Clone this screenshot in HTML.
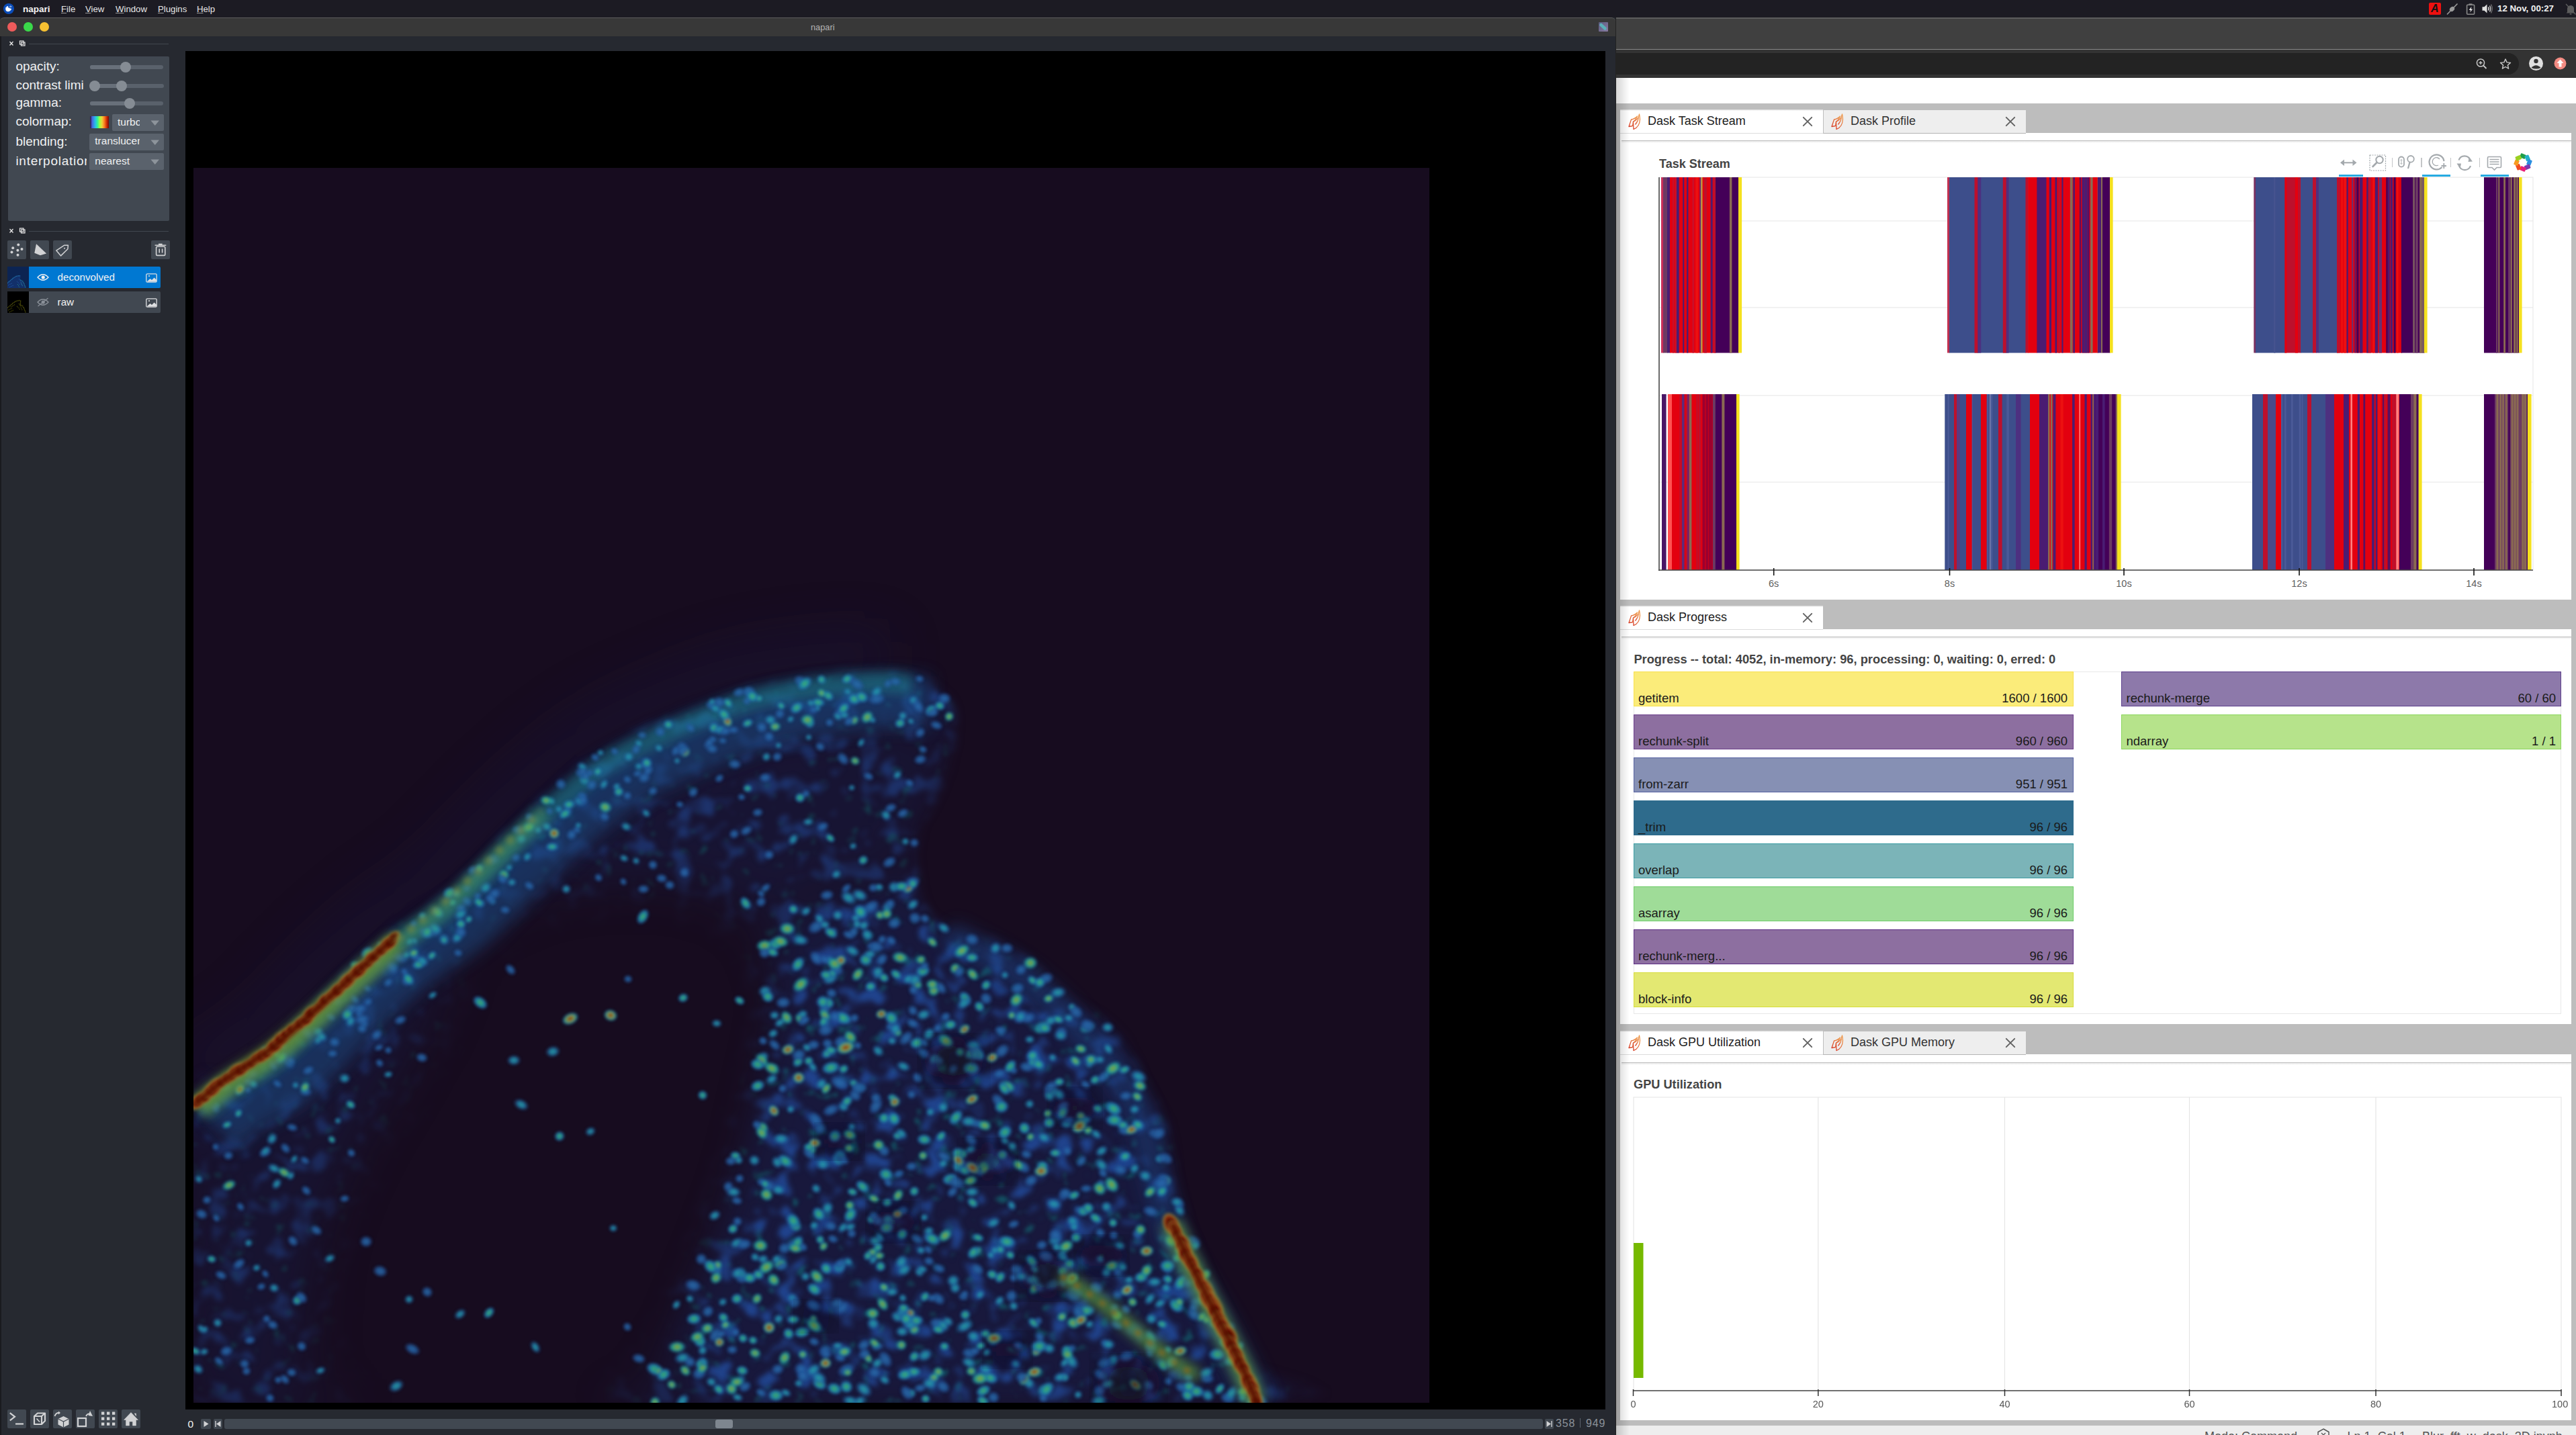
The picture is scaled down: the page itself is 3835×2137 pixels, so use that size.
<!DOCTYPE html>
<html><head><meta charset="utf-8">
<style>
*{box-sizing:border-box;margin:0;padding:0}
html,body{width:3835px;height:2137px;overflow:hidden;background:#1b1a24;font-family:"Liberation Sans",sans-serif}
.a{position:absolute}
.t{position:absolute;white-space:pre;line-height:1}
</style></head><body>
<div class="a" style="left:0px;top:0px;width:3835px;height:26px;background:#1c1b23;"></div>
<svg class="a" style="left:4px;top:4px" width="18" height="18" viewBox="0 0 18 18">
<circle cx="9" cy="9" r="8" fill="#0b4cb8"/>
<path d="M4.3 8.2 C4.2 6.8 5 6.3 5.6 6.9 L5.9 5.6 C6.3 4.9 7 5.2 7 5.9 L7.3 5.2 C7.8 4.6 8.4 5 8.3 5.8 L8.2 7.3 C9.3 7.6 10.6 8.4 12.3 8.8 C13.3 9.1 13.2 10 12.6 10.5 L11.5 11.8 C10.4 13.2 8.3 13.4 6.6 12.9 C5 12.4 4.1 11.2 4.3 8.2Z" fill="#fff"/>
<path d="M10.4 6.8 L11.5 4.6 M11.9 7.2 L12.9 5" stroke="#fff" stroke-width="0.8"/>
</svg>
<div class="t" style="left:34px;top:6.57px;font-size:13.5px;color:#f4f4f4;font-weight:700;">napari</div>
<div class="t" style="left:91px;top:6.57px;font-size:13.2px;color:#e6e6e6;font-weight:400;"><span style="text-decoration:underline;text-decoration-color:#9a9a9a;text-underline-offset:1px">F</span>ile</div>
<div class="t" style="left:127px;top:6.57px;font-size:13.2px;color:#e6e6e6;font-weight:400;"><span style="text-decoration:underline;text-decoration-color:#9a9a9a;text-underline-offset:1px">V</span>iew</div>
<div class="t" style="left:172px;top:6.57px;font-size:13.2px;color:#e6e6e6;font-weight:400;"><span style="text-decoration:underline;text-decoration-color:#9a9a9a;text-underline-offset:1px">W</span>indow</div>
<div class="t" style="left:235px;top:6.57px;font-size:13.2px;color:#e6e6e6;font-weight:400;"><span style="text-decoration:underline;text-decoration-color:#9a9a9a;text-underline-offset:1px">P</span>lugins</div>
<div class="t" style="left:293px;top:6.57px;font-size:13.2px;color:#e6e6e6;font-weight:400;"><span style="text-decoration:underline;text-decoration-color:#9a9a9a;text-underline-offset:1px">H</span>elp</div>
<div class="a" style="left:3616px;top:4px;width:18px;height:18px;background:#ee1010;border-radius:2px"></div>
<div class="t" style="left:3619px;top:5px;font-size:16px;font-weight:700;font-style:italic;color:#111">A</div>
<svg class="a" style="left:3641px;top:4px" width="20" height="19" viewBox="0 0 20 19">
<line x1="2" y1="17.5" x2="17.5" y2="1.5" stroke="#9a9a9a" stroke-width="1.6"/>
<ellipse cx="9.5" cy="9.5" rx="4" ry="3.2" transform="rotate(-45 9.5 9.5)" fill="#9a9a9a"/>
</svg>
<svg class="a" style="left:3671px;top:5px" width="15" height="17" viewBox="0 0 15 17">
<rect x="1.6" y="2.2" width="11" height="14" rx="1" fill="none" stroke="#8a8a8a" stroke-width="1.6"/>
<rect x="4.5" y="0.4" width="5" height="2.2" fill="#8a8a8a"/>
<path d="M8.6 4.8 L4.6 10 L7.2 10 L6.2 13.6 L10.2 8.4 L7.6 8.4Z" fill="#eee"/>
</svg>
<svg class="a" style="left:3695px;top:5px" width="17" height="16" viewBox="0 0 17 16">
<path d="M0.5 5.2 H3.5 L7.5 1.5 V14.5 L3.5 10.8 H0.5Z" fill="#e0e0e0"/>
<path d="M9.5 5.5 Q11 8 9.5 10.5" stroke="#e0e0e0" stroke-width="1.5" fill="none"/>
<path d="M11.5 3.5 Q14 8 11.5 12.5" stroke="#c8c8c8" stroke-width="1.4" fill="none"/>
<path d="M13.5 1.5 Q17 8 13.5 14.5" stroke="#777" stroke-width="1.3" fill="none"/>
</svg>
<div class="t" style="left:3718px;top:6.04px;font-size:13.3px;color:#f2f2f2;font-weight:700;">12 Nov, 00:27</div>
<svg class="a" style="left:3819px;top:5px" width="16" height="18" viewBox="0 0 16 18">
<path d="M3 13 L3 8 Q3 3.5 8 3 Q13 3.5 13 8 L13 13 L14.5 14.5 H1.5Z" fill="#5c5c5c"/>
<rect x="6.5" y="15" width="3" height="1.8" rx="0.9" fill="#5c5c5c"/>
<line x1="1" y1="1" x2="15.5" y2="16.5" stroke="#5c5c5c" stroke-width="1.4"/>
</svg>
<div class="a" style="left:0px;top:26px;width:2405px;height:2111px;background:#262930;"></div>
<div class="a" style="left:0px;top:54px;width:2px;height:2083px;background:#1a1b1f;"></div>
<div class="a" style="left:0px;top:26px;width:2405px;height:28px;background:#383838;border-top:1px solid #5b5b5b;border-top-left-radius:6px;border-top-right-radius:6px"></div>
<div class="a" style="left:11px;top:33px;width:14px;height:14px;border-radius:50%;background:#ee5b5b"></div>
<div class="a" style="left:35px;top:33px;width:14px;height:14px;border-radius:50%;background:#3ad84a"></div>
<div class="a" style="left:59px;top:33px;width:14px;height:14px;border-radius:50%;background:#f7c132"></div>
<div class="t" style="left:1207px;top:34.66px;font-size:12.8px;color:#b4b4b4;font-weight:400;">napari</div>
<div class="a" style="left:2380px;top:33px;width:14px;height:14px;background:linear-gradient(135deg,#5a5a80,#8a7aa0);border-radius:1px"></div>
<svg class="a" style="left:2380px;top:33px" width="14" height="14" viewBox="0 0 14 14"><path d="M3.5 4 L9.5 9.5" stroke="#5ab0b8" stroke-width="4.5" stroke-linecap="round"/></svg>
<svg class="a" style="left:12px;top:60px" width="30" height="10" viewBox="0 0 30 10"><path d="M2.5 2 L7.5 7.5 M7.5 2 L2.5 7.5" stroke="#e8e8e8" stroke-width="1.3"/><rect x="17.5" y="1" width="5.5" height="5" fill="none" stroke="#e8e8e8" stroke-width="1.2"/><rect x="19.5" y="3" width="5.5" height="5" fill="none" stroke="#e8e8e8" stroke-width="1.2"/></svg>
<div class="a" style="left:43px;top:65px;width:208px;height:1px;background:#41474f;"></div>
<div class="a" style="left:12px;top:84px;width:240px;height:245px;background:#414851;border-radius:2px"></div>
<div class="t" style="left:23.4px;top:89.42px;font-size:19px;color:#f0f1f2;font-weight:400;">opacity:</div>
<div class="t" style="left:23.4px;top:117.22px;font-size:19px;color:#f0f1f2;font-weight:400;">contrast limi</div>
<div class="t" style="left:23.4px;top:143.42px;font-size:19px;color:#f0f1f2;font-weight:400;">gamma:</div>
<div class="t" style="left:23.4px;top:171.22px;font-size:19px;color:#f0f1f2;font-weight:400;">colormap:</div>
<div class="t" style="left:23.4px;top:200.92px;font-size:19px;color:#f0f1f2;font-weight:400;">blending:</div>
<div class="a" style="left:23px;top:220px;width:106px;height:32px;overflow:hidden"><div class="t" style="left:0.4px;top:9.72px;font-size:19px;color:#f0f1f2;font-weight:400;letter-spacing:0.75px">interpolation</div>
</div>
<div class="a" style="left:134px;top:97px;width:109px;height:6px;background:#59616b;border-radius:3px"></div>
<div class="a" style="left:134px;top:97px;width:53px;height:6px;background:#68707a;border-radius:3px 0 0 3px"></div>
<div class="a" style="left:179px;top:92px;width:16px;height:16px;border-radius:50%;background:#858c94"></div>
<div class="a" style="left:134px;top:125px;width:110px;height:6px;background:#59616b;border-radius:3px"></div>
<div class="a" style="left:140.5px;top:125px;width:40.900000000000006px;height:6px;background:#68707a;"></div>
<div class="a" style="left:132.5px;top:120px;width:16px;height:16px;border-radius:50%;background:#858c94"></div>
<div class="a" style="left:173.4px;top:120px;width:16px;height:16px;border-radius:50%;background:#858c94"></div>
<div class="a" style="left:134px;top:151px;width:109px;height:6px;background:#59616b;border-radius:3px"></div>
<div class="a" style="left:134px;top:151px;width:59px;height:6px;background:#68707a;border-radius:3px 0 0 3px"></div>
<div class="a" style="left:185px;top:146px;width:16px;height:16px;border-radius:50%;background:#858c94"></div>
<div class="a" style="left:134px;top:173px;width:28px;height:18px;background:linear-gradient(90deg,#30123b 0%,#4669e0 12%,#29bbec 28%,#30f199 40%,#a4fc3c 52%,#eecf3a 64%,#fb8022 76%,#d23105 88%,#7a0403 100%);"></div>
<div class="a" style="left:167px;top:170px;width:77px;height:25px;background:#5a626c;border-radius:2px"></div>
<div class="a" style="left:175px;top:170px;width:33px;height:25px;overflow:hidden"><div class="t" style="left:0px;top:3.58px;font-size:15.5px;color:#f0f1f2;font-weight:400;">turbo</div>
</div>
<svg class="a" style="left:224px;top:178.5px" width="14" height="9" viewBox="0 0 14 9"><path d="M0.5 0.5 H13 L6.75 8Z" fill="#8d949b"/></svg>
<div class="a" style="left:133px;top:199px;width:111px;height:25px;background:#5a626c;border-radius:2px"></div>
<div class="a" style="left:141.3px;top:199px;width:66.69999999999999px;height:25px;overflow:hidden"><div class="t" style="left:0px;top:3.38px;font-size:15.5px;color:#f0f1f2;font-weight:400;">translucent</div>
</div>
<svg class="a" style="left:224px;top:207.5px" width="14" height="9" viewBox="0 0 14 9"><path d="M0.5 0.5 H13 L6.75 8Z" fill="#8d949b"/></svg>
<div class="a" style="left:133px;top:228px;width:111px;height:25px;background:#5a626c;border-radius:2px"></div>
<div class="a" style="left:141.3px;top:228px;width:66.69999999999999px;height:25px;overflow:hidden"><div class="t" style="left:0px;top:3.68px;font-size:15.5px;color:#f0f1f2;font-weight:400;">nearest</div>
</div>
<svg class="a" style="left:224px;top:236.5px" width="14" height="9" viewBox="0 0 14 9"><path d="M0.5 0.5 H13 L6.75 8Z" fill="#8d949b"/></svg>
<svg class="a" style="left:12px;top:339px" width="30" height="10" viewBox="0 0 30 10"><path d="M2.5 2 L7.5 7.5 M7.5 2 L2.5 7.5" stroke="#e8e8e8" stroke-width="1.3"/><rect x="17.5" y="1" width="5.5" height="5" fill="none" stroke="#e8e8e8" stroke-width="1.2"/><rect x="19.5" y="3" width="5.5" height="5" fill="none" stroke="#e8e8e8" stroke-width="1.2"/></svg>
<div class="a" style="left:43px;top:344px;width:208px;height:1px;background:#41474f;"></div>
<div class="a" style="left:11px;top:358px;width:28px;height:28px;background:#414851;border-radius:2px"></div>
<div class="a" style="left:45px;top:358px;width:28px;height:28px;background:#414851;border-radius:2px"></div>
<div class="a" style="left:79px;top:358px;width:28px;height:28px;background:#414851;border-radius:2px"></div>
<div class="a" style="left:225px;top:358px;width:28px;height:28px;background:#414851;border-radius:2px"></div>
<svg class="a" style="left:11px;top:358px" width="28" height="28" viewBox="0 0 28 28" fill="#d1d2d4"><circle cx="16.3" cy="6.5" r="2"/><circle cx="8.2" cy="11.300000000000011" r="2"/><circle cx="21.5" cy="13" r="2"/><circle cx="15.399999999999999" cy="14.800000000000011" r="2"/><circle cx="6.5" cy="17.5" r="2"/><circle cx="15.5" cy="21.69999999999999" r="2"/></svg>
<svg class="a" style="left:45px;top:358px" width="28" height="28" viewBox="0 0 28 28"><path d="M9 5.2 L24.1 19.4 L15 22.2 L6.3 18.8Z" fill="#d1d2d4"/></svg>
<svg class="a" style="left:79px;top:358px" width="28" height="28" viewBox="0 0 28 28"><path d="M4.8 15.1 L16.9 7.2 L22.4 7.3 L21.9 12.8 L11.6 22.9Z" fill="none" stroke="#d1d2d4" stroke-width="1.5" stroke-linejoin="round"/><circle cx="17" cy="11.8" r="1" fill="#d1d2d4"/></svg>
<svg class="a" style="left:225px;top:358px" width="28" height="28" viewBox="0 0 28 28"><path d="M5.6 7.2 H22.3 M11 5.6 H16.6" stroke="#d1d2d4" stroke-width="1.6"/><rect x="7.6" y="9.3" width="13.2" height="13.1" rx="1.5" fill="none" stroke="#d1d2d4" stroke-width="1.6"/><path d="M12.2 12.5 V18.5 M16.6 12.5 V18.5" stroke="#d1d2d4" stroke-width="1.6"/></svg>
<div class="a" style="left:43px;top:397px;width:196px;height:32px;background:#0078d2;border-radius:0 2px 2px 0"></div>
<div class="a" style="left:11px;top:397px;width:32px;height:32px;background:#0c2452;"></div>
<svg class="a" style="left:11px;top:397px" width="32" height="32" viewBox="0 0 32 32"><path d="M0 24 L5 19.8 L8.8 16.5 L13.1 13.9 L17.6 13 L19.6 13.8 L19.4 16 L19 19.3 L22.8 21.5 L25 25.1 L27.7 32 L0 32Z" fill="#12306a"/><path d="M0 24.5 L5 20.3 L8.8 17 L13.1 14.4 L17.6 13.5 L19.6 14.3" fill="none" stroke="#2a8ac0" stroke-width="1.3" stroke-dasharray="0.9 0.9"/><path d="M19.3 19.8 L22.8 22 L25 25.6 L27.2 32" fill="none" stroke="#2a9ab0" stroke-width="1.2" stroke-dasharray="0.9 1"/><path d="M1 28 Q4 26 7 25 M3 31 Q6 29 9 28 M14 22 Q17 24 19 28 M17 18 Q20 22 22 28" fill="none" stroke="#2a6ac0" stroke-width="1" stroke-dasharray="0.8 1.2"/><path d="M15 26 L18 31 M20 24 L23 30" stroke="#30b090" stroke-width="1" stroke-dasharray="0.8 1.4"/></svg>
<div class="a" style="left:43px;top:434px;width:196px;height:32px;background:#414851;border-radius:0 2px 2px 0"></div>
<div class="a" style="left:11px;top:434px;width:32px;height:32px;background:#000;"></div>
<svg class="a" style="left:11px;top:434px" width="32" height="32" viewBox="0 0 32 32"><path d="M0 24.5 L5 20.3 L8.8 17 L13.1 14.4 L17.6 13.5 L19.6 14.3 L19.3 19.8 L22.8 22 L25 25.6 L27.2 32" fill="none" stroke="#7a7a10" stroke-width="1.4" stroke-dasharray="0.9 1"/><path d="M1 28 Q4 26 7 25 M3 31 Q6 29 9 28 M14 22 Q17 24 19 28 M17 18 Q20 22 22 28 M5 23 Q9 21 12 19" fill="none" stroke="#6a6a08" stroke-width="1.2" stroke-dasharray="0.8 1.2"/></svg>
<svg class="a" style="left:55px;top:406px" width="18" height="14" viewBox="0 0 18 14"><path d="M1 7 Q9 -1.5 17 7 Q9 15.5 1 7Z" fill="none" stroke="#f0f1f2" stroke-width="1.3"/><circle cx="9.2" cy="7" r="2.6" fill="#f0f1f2"/></svg>
<svg class="a" style="left:55px;top:443px" width="18" height="14" viewBox="0 0 18 14"><path d="M1 7 Q9 -1.5 17 7 Q9 15.5 1 7Z" fill="none" stroke="#8b9199" stroke-width="1.3"/><circle cx="9.2" cy="7" r="2.6" fill="#8b9199"/><path d="M1.5 13 L16.5 1" stroke="#8b9199" stroke-width="1.2"/></svg>
<div class="t" style="left:85.6px;top:404.93px;font-size:15.2px;color:#f0f1f2;font-weight:400;">deconvolved</div>
<div class="t" style="left:85.6px;top:442.13px;font-size:15.2px;color:#f0f1f2;font-weight:400;">raw</div>
<svg class="a" style="left:217px;top:406.6px" width="17" height="14" viewBox="0 0 17 14"><rect x="0.8" y="0.8" width="15.4" height="12.4" rx="1.5" fill="none" stroke="#dfe0e2" stroke-width="1.3"/><circle cx="5" cy="4" r="1.1" fill="#dfe0e2"/><path d="M1.5 12.5 L6.5 8 L9 10 L12.5 6.5 L15.8 9.5 V12.5Z" fill="#dfe0e2"/></svg>
<svg class="a" style="left:217px;top:443.6px" width="17" height="14" viewBox="0 0 17 14"><rect x="0.8" y="0.8" width="15.4" height="12.4" rx="1.5" fill="none" stroke="#dfe0e2" stroke-width="1.3"/><circle cx="5" cy="4" r="1.1" fill="#dfe0e2"/><path d="M1.5 12.5 L6.5 8 L9 10 L12.5 6.5 L15.8 9.5 V12.5Z" fill="#dfe0e2"/></svg>
<div class="a" style="left:276px;top:76px;width:2114px;height:2023px;background:#000;"></div>
<div class="a" style="left:11px;top:2099px;width:28px;height:28px;background:#414851;border-radius:2px"></div>
<div class="a" style="left:45px;top:2099px;width:28px;height:28px;background:#414851;border-radius:2px"></div>
<div class="a" style="left:79px;top:2099px;width:28px;height:28px;background:#414851;border-radius:2px"></div>
<div class="a" style="left:113px;top:2099px;width:28px;height:28px;background:#414851;border-radius:2px"></div>
<div class="a" style="left:147px;top:2099px;width:28px;height:28px;background:#414851;border-radius:2px"></div>
<div class="a" style="left:181px;top:2099px;width:28px;height:28px;background:#414851;border-radius:2px"></div>
<svg class="a" style="left:11px;top:2099px" width="28" height="28" viewBox="0 0 28 28"><path d="M3.8 5.2 L11 10.8 L3.8 16.4" fill="none" stroke="#d1d2d4" stroke-width="2.2"/><path d="M12 21.5 H24" stroke="#d1d2d4" stroke-width="2.2"/></svg>
<svg class="a" style="left:45px;top:2099px" width="28" height="28" viewBox="0 0 28 28"><path d="M6 10 L11 5.5 H22 V17 L17 22 H6Z M6 10 H17 V22 M17 10 L22 5.5" fill="none" stroke="#d1d2d4" stroke-width="2.2" stroke-linejoin="round"/><path d="M9.5 13.5 L14 18.5" stroke="#d1d2d4" stroke-width="1.6"/></svg>
<svg class="a" style="left:79px;top:2099px" width="28" height="28" viewBox="0 0 28 28"><path d="M7.5 14 L15.5 10 L23.5 14 V22.5 L15.5 26.5 L7.5 22.5Z" fill="#d1d2d4"/><path d="M7.5 14 L15.5 18 L23.5 14 M15.5 18 V26.5" stroke="#414851" stroke-width="1.2" fill="none"/><path d="M2.5 10 Q4 5 8.5 5" fill="none" stroke="#d1d2d4" stroke-width="1.8"/><path d="M8 2.5 L11 5 L8 7.5Z" fill="#d1d2d4"/></svg>
<svg class="a" style="left:113px;top:2099px" width="28" height="28" viewBox="0 0 28 28"><rect x="3" y="13" width="12" height="12" fill="none" stroke="#d1d2d4" stroke-width="2.2"/><path d="M15 10 Q17.5 5 22.5 7" fill="none" stroke="#d1d2d4" stroke-width="1.8"/><path d="M21 2 L25 10 L18.5 9Z" fill="#d1d2d4"/></svg>
<svg class="a" style="left:147px;top:2099px" width="28" height="28" viewBox="0 0 28 28" fill="#d1d2d4"><rect x="4" y="3.5" width="4.3" height="4.3"/><rect x="4" y="11.5" width="4.3" height="4.3"/><rect x="4" y="19.5" width="4.3" height="4.3"/><rect x="12" y="3.5" width="4.3" height="4.3"/><rect x="12" y="11.5" width="4.3" height="4.3"/><rect x="12" y="19.5" width="4.3" height="4.3"/><rect x="20" y="3.5" width="4.3" height="4.3"/><rect x="20" y="11.5" width="4.3" height="4.3"/><rect x="20" y="19.5" width="4.3" height="4.3"/></svg>
<svg class="a" style="left:181px;top:2099px" width="28" height="28" viewBox="0 0 28 28"><path d="M3.5 15.5 L14 4.5 L24.5 15.5 H21.5 V24 H16.5 V18 H11.5 V24 H6.5 V15.5Z M19 6 H21.5 V10" fill="#d1d2d4" stroke="#d1d2d4" stroke-width="0.5"/></svg>
<div class="t" style="left:279.5px;top:2112.88px;font-size:15.5px;color:#f0f1f2;font-weight:400;">0</div>
<div class="a" style="left:299px;top:2113px;width:15px;height:15px;background:#414851;border-radius:2px"></div>
<svg class="a" style="left:299px;top:2113px" width="15" height="15" viewBox="0 0 15 15"><path d="M4.5 3 L11.5 7.5 L4.5 12Z" fill="#d1d2d4"/></svg>
<div class="a" style="left:318px;top:2113px;width:13px;height:15px;background:#414851;border-radius:2px"></div>
<svg class="a" style="left:318px;top:2113px" width="13" height="15" viewBox="0 0 13 15"><path d="M3 3 V12" stroke="#d1d2d4" stroke-width="1.4"/><path d="M10.5 3 L4 7.5 L10.5 12Z" fill="#d1d2d4"/></svg>
<div class="a" style="left:334px;top:2113px;width:1963px;height:15px;background:#414851;border-radius:3px"></div>
<div class="a" style="left:1065px;top:2114px;width:26px;height:13px;background:#7e868f;border-radius:3px"></div>
<div class="a" style="left:2300px;top:2113px;width:13px;height:15px;background:#414851;border-radius:2px"></div>
<svg class="a" style="left:2300px;top:2113px" width="13" height="15" viewBox="0 0 13 15"><path d="M10 3 V12" stroke="#d1d2d4" stroke-width="1.4"/><path d="M2.5 3 L9 7.5 L2.5 12Z" fill="#d1d2d4"/></svg>
<div class="t" style="left:2316px;top:2112.46px;font-size:16px;color:#8b9199;font-weight:400;letter-spacing:0.9px">358</div>
<div class="a" style="left:2352px;top:2112px;width:1px;height:14px;background:#5a626c;"></div>
<div class="a" style="left:2360px;top:2100px;width:29px;height:37px;overflow:hidden"><div class="t" style="left:1px;top:12.46px;font-size:16px;color:#8b9199;font-weight:400;letter-spacing:0.9px">949</div>
</div>
<svg class="a" style="left:288px;top:250px" width="1840" height="1839" viewBox="288 250 1840 1839">
<defs>
<filter id="b40" x="-30%" y="-30%" width="160%" height="160%"><feGaussianBlur stdDeviation="40"/></filter>
<filter id="b24" x="-30%" y="-30%" width="160%" height="160%"><feGaussianBlur stdDeviation="24"/></filter>
<filter id="b12" x="-30%" y="-30%" width="160%" height="160%"><feGaussianBlur stdDeviation="12"/></filter>
<filter id="b8" x="-30%" y="-30%" width="160%" height="160%"><feGaussianBlur stdDeviation="8"/></filter>
<filter id="b5" x="-30%" y="-30%" width="160%" height="160%"><feGaussianBlur stdDeviation="5"/></filter>
<filter id="b4" x="-30%" y="-30%" width="160%" height="160%"><feGaussianBlur stdDeviation="4"/></filter>
<filter id="b3" x="-30%" y="-30%" width="160%" height="160%"><feGaussianBlur stdDeviation="3"/></filter>
<filter id="b2" x="-30%" y="-30%" width="160%" height="160%"><feGaussianBlur stdDeviation="2"/></filter>
<filter id="tex" x="288" y="950" width="1840" height="1139" filterUnits="userSpaceOnUse" color-interpolation-filters="sRGB"><feTurbulence type="fractalNoise" baseFrequency="0.032" numOctaves="2" seed="11" result="n"/><feColorMatrix in="n" type="matrix" values="0 0 0 0 0.13  0 0 0 0 0.28  0 0 0 0 0.58  4.6 0 0 0 -2.4"/><feGaussianBlur stdDeviation="3"/></filter>
<filter id="tex2" x="288" y="950" width="1840" height="1139" filterUnits="userSpaceOnUse" color-interpolation-filters="sRGB"><feTurbulence type="fractalNoise" baseFrequency="0.05" numOctaves="2" seed="5" result="n"/><feColorMatrix in="n" type="matrix" values="0 0 0 0 0.06  0 0 0 0 0.50  0 0 0 0 0.52  6 0 0 0 -3.9"/><feGaussianBlur stdDeviation="2.5"/></filter>
<mask id="mtex" maskUnits="userSpaceOnUse" x="288" y="250" width="1840" height="1839"><rect x="288" y="250" width="1840" height="1839" fill="#000"/><path d="M1130.0 1400.0 C1148.3 1371.7 1209.7 1347.0 1250.0 1330.0 C1290.3 1313.0 1347.2 1293.5 1372.0 1298.0 C1396.8 1302.5 1386.7 1341.8 1399.0 1357.0 C1411.3 1372.2 1426.3 1379.0 1446.0 1389.0 C1465.7 1399.0 1494.0 1401.8 1517.0 1417.0 C1540.0 1432.2 1559.5 1460.5 1584.0 1480.0 C1608.5 1499.5 1643.8 1511.7 1664.0 1534.0 C1684.2 1556.3 1692.5 1590.3 1705.0 1614.0 C1717.5 1637.7 1731.3 1651.7 1739.0 1676.0 C1746.7 1700.3 1746.2 1735.7 1751.0 1760.0 C1755.8 1784.3 1759.7 1798.7 1768.0 1822.0 C1776.3 1845.3 1790.5 1876.2 1801.0 1900.0 C1811.5 1923.8 1822.0 1943.3 1831.0 1965.0 C1840.0 1986.7 1846.8 2009.3 1855.0 2030.0 C1863.2 2050.7 2029.2 2079.2 1880.0 2089.0 C1730.8 2098.8 1107.5 2108.8 960.0 2089.0 C812.5 2069.2 980.8 2009.8 995.0 1970.0 C1009.2 1930.2 1030.0 1888.3 1045.0 1850.0 C1060.0 1811.7 1073.3 1778.3 1085.0 1740.0 C1096.7 1701.7 1105.8 1660.0 1115.0 1620.0 C1124.2 1580.0 1137.5 1536.7 1140.0 1500.0 C1142.5 1463.3 1111.7 1428.3 1130.0 1400.0 Z" fill="#f0f0f0" filter="url(#b24)"/><path d="M288.0 1637.0 C306.0 1610.0 361.5 1592.0 396.0 1563.0 C430.5 1534.0 464.7 1492.0 495.0 1463.0 C525.3 1434.0 550.3 1411.0 578.0 1389.0 C605.7 1367.0 634.0 1353.8 661.0 1331.0 C688.0 1308.2 717.5 1274.2 740.0 1252.0 C762.5 1229.8 772.0 1220.2 796.0 1198.0 C820.0 1175.8 849.5 1143.5 884.0 1119.0 C918.5 1094.5 964.3 1068.2 1003.0 1051.0 C1041.7 1033.8 1081.8 1023.0 1116.0 1016.0 C1150.2 1009.0 1180.3 1012.5 1208.0 1009.0 C1235.7 1005.5 1254.2 996.8 1282.0 995.0 C1309.8 993.2 1352.0 991.3 1375.0 998.0 C1398.0 1004.7 1410.5 1018.8 1420.0 1035.0 C1429.5 1051.2 1438.7 1086.7 1432.0 1095.0 C1425.3 1103.3 1410.3 1088.3 1380.0 1085.0 C1349.7 1081.7 1296.7 1073.3 1250.0 1075.0 C1203.3 1076.7 1150.0 1080.0 1100.0 1095.0 C1050.0 1110.0 991.7 1140.0 950.0 1165.0 C908.3 1190.0 883.3 1216.7 850.0 1245.0 C816.7 1273.3 783.3 1305.0 750.0 1335.0 C716.7 1365.0 683.3 1396.7 650.0 1425.0 C616.7 1453.3 583.3 1478.3 550.0 1505.0 C516.7 1531.7 480.0 1560.0 450.0 1585.0 C420.0 1610.0 397.0 1631.7 370.0 1655.0 C343.0 1678.3 301.7 1728.0 288.0 1725.0 C274.3 1722.0 270.0 1664.0 288.0 1637.0 Z" fill="#fff" filter="url(#b24)"/><path d="M288.0 1700.0 C306.7 1618.5 354.7 1636.7 400.0 1600.0 C445.3 1563.3 511.7 1510.8 560.0 1480.0 C608.3 1449.2 678.3 1398.3 690.0 1415.0 C701.7 1431.7 651.7 1532.5 630.0 1580.0 C608.3 1627.5 580.8 1660.0 560.0 1700.0 C539.2 1740.0 518.3 1776.7 505.0 1820.0 C491.7 1863.3 480.8 1915.2 480.0 1960.0 C479.2 2004.8 532.0 2067.5 500.0 2089.0 C468.0 2110.5 323.3 2153.8 288.0 2089.0 C252.7 2024.2 269.3 1781.5 288.0 1700.0 Z" fill="#909090" filter="url(#b40)"/><path d="M850.0 1240.0 C883.3 1211.7 908.3 1185.0 950.0 1160.0 C991.7 1135.0 1050.0 1105.0 1100.0 1090.0 C1150.0 1075.0 1203.3 1071.7 1250.0 1070.0 C1296.7 1068.3 1349.7 1075.8 1380.0 1080.0 C1410.3 1084.2 1425.3 1083.3 1432.0 1095.0 C1438.7 1106.7 1426.2 1132.8 1420.0 1150.0 C1413.8 1167.2 1403.7 1183.0 1395.0 1198.0 C1386.3 1213.0 1371.8 1223.3 1368.0 1240.0 C1364.2 1256.7 1391.7 1283.0 1372.0 1298.0 C1352.3 1313.0 1290.3 1313.0 1250.0 1330.0 C1209.7 1347.0 1161.7 1397.5 1130.0 1400.0 C1098.3 1402.5 1093.3 1356.7 1060.0 1345.0 C1026.7 1333.3 973.3 1329.2 930.0 1330.0 C886.7 1330.8 838.3 1336.7 800.0 1350.0 C761.7 1363.3 708.3 1413.3 700.0 1410.0 C691.7 1406.7 725.0 1358.3 750.0 1330.0 C775.0 1301.7 816.7 1268.3 850.0 1240.0 Z" fill="#a8a8a8" filter="url(#b40)"/><path d="M700.0 1410.0 C720.0 1386.7 761.7 1363.3 800.0 1350.0 C838.3 1336.7 886.7 1330.8 930.0 1330.0 C973.3 1329.2 1025.8 1333.3 1060.0 1345.0 C1094.2 1356.7 1121.7 1374.2 1135.0 1400.0 C1148.3 1425.8 1143.3 1463.3 1140.0 1500.0 C1136.7 1536.7 1124.2 1580.0 1115.0 1620.0 C1105.8 1660.0 1096.7 1701.7 1085.0 1740.0 C1073.3 1778.3 1060.0 1811.7 1045.0 1850.0 C1030.0 1888.3 1008.3 1930.2 995.0 1970.0 C981.7 2009.8 1047.5 2069.2 965.0 2089.0 C882.5 2108.8 580.8 2110.5 500.0 2089.0 C419.2 2067.5 479.2 2004.8 480.0 1960.0 C480.8 1915.2 491.7 1863.3 505.0 1820.0 C518.3 1776.7 539.2 1740.0 560.0 1700.0 C580.8 1660.0 610.0 1615.0 630.0 1580.0 C650.0 1545.0 668.3 1518.3 680.0 1490.0 C691.7 1461.7 680.0 1433.3 700.0 1410.0 Z" fill="#000" filter="url(#b40)"/></mask>
<mask id="mtis" maskUnits="userSpaceOnUse" x="288" y="250" width="1840" height="1839"><path d="M288.0 1637.0 C295.0 1555.5 312.0 1612.3 330.0 1600.0 C348.0 1587.7 368.5 1585.8 396.0 1563.0 C423.5 1540.2 464.7 1492.0 495.0 1463.0 C525.3 1434.0 550.3 1411.0 578.0 1389.0 C605.7 1367.0 634.0 1353.8 661.0 1331.0 C688.0 1308.2 717.5 1274.2 740.0 1252.0 C762.5 1229.8 769.3 1220.8 796.0 1198.0 C822.7 1175.2 859.5 1139.7 900.0 1115.0 C940.5 1090.3 1000.7 1065.8 1039.0 1050.0 C1077.3 1034.2 1099.0 1027.5 1130.0 1020.0 C1161.0 1012.5 1196.7 1008.3 1225.0 1005.0 C1253.3 1001.7 1276.7 999.5 1300.0 1000.0 C1323.3 1000.5 1345.8 1000.5 1365.0 1008.0 C1384.2 1015.5 1405.8 1029.7 1415.0 1045.0 C1424.2 1060.3 1422.2 1078.8 1420.0 1100.0 C1417.8 1121.2 1410.3 1149.5 1402.0 1172.0 C1393.7 1194.5 1376.2 1213.7 1370.0 1235.0 C1363.8 1256.3 1362.5 1278.3 1365.0 1300.0 C1367.5 1321.7 1372.5 1350.3 1385.0 1365.0 C1397.5 1379.7 1418.0 1379.3 1440.0 1388.0 C1462.0 1396.7 1493.0 1401.7 1517.0 1417.0 C1541.0 1432.3 1559.5 1460.5 1584.0 1480.0 C1608.5 1499.5 1643.8 1511.7 1664.0 1534.0 C1684.2 1556.3 1692.5 1590.3 1705.0 1614.0 C1717.5 1637.7 1731.3 1651.7 1739.0 1676.0 C1746.7 1700.3 1746.2 1735.7 1751.0 1760.0 C1755.8 1784.3 1759.7 1798.7 1768.0 1822.0 C1776.3 1845.3 1790.5 1876.2 1801.0 1900.0 C1811.5 1923.8 1822.0 1943.3 1831.0 1965.0 C1840.0 1986.7 1846.8 2009.3 1855.0 2030.0 C1863.2 2050.7 2141.2 2079.2 1880.0 2089.0 C1618.8 2098.8 553.3 2164.3 288.0 2089.0 C22.7 2013.7 281.0 1718.5 288.0 1637.0 Z" fill="#fff" filter="url(#b8)"/></mask>
<radialGradient id="gB"><stop offset="0" stop-color="#2a70b0"/><stop offset="0.6" stop-color="#235a9c" stop-opacity="0.9"/><stop offset="1" stop-color="#1d3f84" stop-opacity="0"/></radialGradient><radialGradient id="gC"><stop offset="0" stop-color="#28a8a0"/><stop offset="0.45" stop-color="#2280b0"/><stop offset="1" stop-color="#1f4a90" stop-opacity="0"/></radialGradient><radialGradient id="gG"><stop offset="0" stop-color="#5ab860"/><stop offset="0.35" stop-color="#22a898"/><stop offset="0.7" stop-color="#2270b0"/><stop offset="1" stop-color="#1f4a90" stop-opacity="0"/></radialGradient><radialGradient id="gY"><stop offset="0" stop-color="#b0a030"/><stop offset="0.3" stop-color="#50b860"/><stop offset="0.6" stop-color="#20a0a0"/><stop offset="1" stop-color="#1f5a9a" stop-opacity="0"/></radialGradient><radialGradient id="gR"><stop offset="0" stop-color="#6a1808"/><stop offset="0.25" stop-color="#b06a20"/><stop offset="0.5" stop-color="#70b050"/><stop offset="0.75" stop-color="#2090a8"/><stop offset="1" stop-color="#1f5a9a" stop-opacity="0"/></radialGradient><radialGradient id="gH"><stop offset="0" stop-color="#4a0604"/><stop offset="0.45" stop-color="#5e0c06"/><stop offset="0.7" stop-color="#9a3a12"/><stop offset="0.88" stop-color="#a08a30" stop-opacity="0.6"/><stop offset="1" stop-color="#60a050" stop-opacity="0"/></radialGradient></defs>
<rect x="288" y="250" width="1840" height="1839" fill="#170c1f"/>
<path d="M288.0 1640.0 C295.0 1633.7 312.0 1614.5 330.0 1602.0 C348.0 1589.5 368.5 1587.8 396.0 1565.0 C423.5 1542.2 464.7 1494.0 495.0 1465.0 C525.3 1436.0 550.3 1413.0 578.0 1391.0 C605.7 1369.0 634.0 1355.8 661.0 1333.0 C688.0 1310.2 717.5 1276.2 740.0 1254.0 C762.5 1231.8 769.3 1222.8 796.0 1200.0 C822.7 1177.2 859.5 1141.7 900.0 1117.0 C940.5 1092.3 1000.7 1067.8 1039.0 1052.0 C1077.3 1036.2 1099.0 1029.5 1130.0 1022.0 C1161.0 1014.5 1196.7 1010.3 1225.0 1007.0 C1253.3 1003.7 1280.0 1002.2 1300.0 1002.0 C1320.0 1001.8 1337.5 1005.3 1345.0 1006.0" fill="none" stroke="#1c1d4e" stroke-width="60" filter="url(#b40)" opacity="0.35" transform="translate(-22 -26)"/>
<g mask="url(#mtis)"><g mask="url(#mtex)">
<rect x="288" y="950" width="1840" height="1139" fill="#1a2458" opacity="0.55"/>
<rect x="288" y="950" width="1840" height="1139" fill="#fff" filter="url(#tex)"/>
<rect x="288" y="950" width="1840" height="1139" fill="#fff" filter="url(#tex2)" opacity="0.55"/>
</g></g>
<path d="M288.0 1640.0 C295.0 1633.7 312.0 1614.5 330.0 1602.0 C348.0 1589.5 368.5 1587.8 396.0 1565.0 C423.5 1542.2 464.7 1494.0 495.0 1465.0 C525.3 1436.0 550.3 1413.0 578.0 1391.0 C605.7 1369.0 634.0 1355.8 661.0 1333.0 C688.0 1310.2 717.5 1276.2 740.0 1254.0 C762.5 1231.8 769.3 1222.8 796.0 1200.0 C822.7 1177.2 859.5 1141.7 900.0 1117.0 C940.5 1092.3 1000.7 1067.8 1039.0 1052.0 C1077.3 1036.2 1099.0 1029.5 1130.0 1022.0 C1161.0 1014.5 1196.7 1010.3 1225.0 1007.0 C1253.3 1003.7 1280.0 1002.2 1300.0 1002.0 C1320.0 1001.8 1337.5 1005.3 1345.0 1006.0" fill="none" stroke="#1d5088" stroke-width="80" filter="url(#b12)" transform="translate(38 42)" opacity="0.5"/>
<path d="M288.0 1640.0 C295.0 1633.7 312.0 1614.5 330.0 1602.0 C348.0 1589.5 368.5 1587.8 396.0 1565.0 C423.5 1542.2 464.7 1494.0 495.0 1465.0 C525.3 1436.0 550.3 1413.0 578.0 1391.0 C605.7 1369.0 634.0 1355.8 661.0 1333.0 C688.0 1310.2 717.5 1276.2 740.0 1254.0 C762.5 1231.8 769.3 1222.8 796.0 1200.0 C822.7 1177.2 859.5 1141.7 900.0 1117.0 C940.5 1092.3 1000.7 1067.8 1039.0 1052.0 C1077.3 1036.2 1099.0 1029.5 1130.0 1022.0 C1161.0 1014.5 1196.7 1010.3 1225.0 1007.0 C1253.3 1003.7 1280.0 1002.2 1300.0 1002.0 C1320.0 1001.8 1337.5 1005.3 1345.0 1006.0" fill="none" stroke="#1a8a8a" stroke-width="30" filter="url(#b8)" transform="translate(12 14)" opacity="0.45"/>
<path d="M1440.0 1390.0 C1460.0 1401.7 1523.3 1431.7 1560.0 1460.0 C1596.7 1488.3 1633.3 1528.3 1660.0 1560.0 C1686.7 1591.7 1705.0 1616.7 1720.0 1650.0 C1735.0 1683.3 1740.0 1725.0 1750.0 1760.0 C1760.0 1795.0 1763.3 1823.3 1780.0 1860.0 C1796.7 1896.7 1829.2 1941.8 1850.0 1980.0 C1870.8 2018.2 1895.8 2070.8 1905.0 2089.0" fill="none" stroke="#1f4a8a" stroke-width="40" filter="url(#b12)" transform="translate(-28 0)" opacity="0.4"/>
<g filter="url(#b2)" opacity="0.9">
<ellipse cx="1274" cy="1367" rx="8.6" ry="6.2" fill="url(#gC)" transform="rotate(-10 1274 1367)"/><ellipse cx="1069" cy="1892" rx="7.0" ry="6.5" fill="url(#gB)" transform="rotate(35 1069 1892)"/><ellipse cx="1442" cy="2029" rx="12.2" ry="8.3" fill="url(#gC)" transform="rotate(23 1442 2029)"/><ellipse cx="1254" cy="1947" rx="12.6" ry="8.9" fill="url(#gB)" transform="rotate(-44 1254 1947)"/><ellipse cx="1695" cy="1603" rx="14.6" ry="9.5" fill="url(#gC)" transform="rotate(23 1695 1603)"/><ellipse cx="1567" cy="1627" rx="13.2" ry="8.3" fill="url(#gC)" transform="rotate(-51 1567 1627)"/><ellipse cx="1834" cy="2026" rx="12.2" ry="7.9" fill="url(#gG)" transform="rotate(-13 1834 2026)"/><ellipse cx="1479" cy="2081" rx="9.5" ry="9.3" fill="url(#gB)" transform="rotate(29 1479 2081)"/><ellipse cx="1007" cy="1943" rx="8.7" ry="6.3" fill="url(#gC)" transform="rotate(-55 1007 1943)"/><ellipse cx="1299" cy="1956" rx="11.0" ry="9.3" fill="url(#gY)" transform="rotate(-0 1299 1956)"/><ellipse cx="1237" cy="1653" rx="13.7" ry="8.7" fill="url(#gB)" transform="rotate(-25 1237 1653)"/><ellipse cx="1850" cy="2081" rx="8.0" ry="7.9" fill="url(#gC)" transform="rotate(58 1850 2081)"/><ellipse cx="1260" cy="2065" rx="10.4" ry="9.5" fill="url(#gG)" transform="rotate(37 1260 2065)"/><ellipse cx="1268" cy="1837" rx="7.6" ry="7.3" fill="url(#gB)" transform="rotate(1 1268 1837)"/><ellipse cx="1781" cy="2072" rx="12.9" ry="9.4" fill="url(#gG)" transform="rotate(10 1781 2072)"/><ellipse cx="1436" cy="1975" rx="14.9" ry="9.4" fill="url(#gC)" transform="rotate(-29 1436 1975)"/><ellipse cx="1489" cy="1861" rx="7.4" ry="6.3" fill="url(#gG)" transform="rotate(6 1489 1861)"/><ellipse cx="1027" cy="2028" rx="9.8" ry="8.9" fill="url(#gB)" transform="rotate(26 1027 2028)"/><ellipse cx="1257" cy="2013" rx="11.0" ry="7.7" fill="url(#gY)" transform="rotate(-13 1257 2013)"/><ellipse cx="1361" cy="1980" rx="8.9" ry="7.7" fill="url(#gY)" transform="rotate(-21 1361 1980)"/><ellipse cx="1211" cy="1556" rx="10.5" ry="8.1" fill="url(#gB)" transform="rotate(-7 1211 1556)"/><ellipse cx="1622" cy="1584" rx="7.6" ry="7.3" fill="url(#gC)" transform="rotate(-38 1622 1584)"/><ellipse cx="1310" cy="1843" rx="9.4" ry="6.4" fill="url(#gC)" transform="rotate(54 1310 1843)"/><ellipse cx="1322" cy="1816" rx="10.7" ry="9.6" fill="url(#gC)" transform="rotate(-6 1322 1816)"/><ellipse cx="1415" cy="1526" rx="10.2" ry="8.0" fill="url(#gG)" transform="rotate(-14 1415 1526)"/><ellipse cx="1168" cy="2022" rx="11.8" ry="8.8" fill="url(#gY)" transform="rotate(-60 1168 2022)"/><ellipse cx="1318" cy="2024" rx="14.9" ry="9.4" fill="url(#gB)" transform="rotate(59 1318 2024)"/><ellipse cx="1730" cy="1972" rx="8.9" ry="6.6" fill="url(#gG)" transform="rotate(19 1730 1972)"/><ellipse cx="1307" cy="1452" rx="7.8" ry="6.1" fill="url(#gC)" transform="rotate(-34 1307 1452)"/><ellipse cx="1436" cy="1533" rx="9.5" ry="6.3" fill="url(#gR)" transform="rotate(-40 1436 1533)"/><ellipse cx="1739" cy="2057" rx="6.5" ry="6.4" fill="url(#gB)" transform="rotate(54 1739 2057)"/><ellipse cx="1065" cy="1988" rx="13.5" ry="9.3" fill="url(#gB)" transform="rotate(-53 1065 1988)"/><ellipse cx="1338" cy="1748" rx="9.4" ry="6.4" fill="url(#gB)" transform="rotate(-22 1338 1748)"/><ellipse cx="1455" cy="1863" rx="9.0" ry="6.3" fill="url(#gY)" transform="rotate(-43 1455 1863)"/><ellipse cx="1306" cy="2005" rx="10.8" ry="7.1" fill="url(#gB)" transform="rotate(-7 1306 2005)"/><ellipse cx="1637" cy="1578" rx="9.0" ry="6.8" fill="url(#gC)" transform="rotate(4 1637 1578)"/><ellipse cx="1199" cy="1901" rx="7.8" ry="7.6" fill="url(#gC)" transform="rotate(-2 1199 1901)"/><ellipse cx="1553" cy="2069" rx="9.7" ry="7.4" fill="url(#gY)" transform="rotate(-49 1553 2069)"/><ellipse cx="1588" cy="1674" rx="10.5" ry="7.6" fill="url(#gC)" transform="rotate(-3 1588 1674)"/><ellipse cx="1161" cy="1523" rx="10.1" ry="6.8" fill="url(#gC)" transform="rotate(-33 1161 1523)"/><ellipse cx="1365" cy="1553" rx="12.0" ry="9.0" fill="url(#gG)" transform="rotate(-17 1365 1553)"/><ellipse cx="1605" cy="1951" rx="8.6" ry="7.6" fill="url(#gC)" transform="rotate(-44 1605 1951)"/><ellipse cx="1620" cy="1683" rx="7.8" ry="6.2" fill="url(#gY)" transform="rotate(-43 1620 1683)"/><ellipse cx="1638" cy="1875" rx="7.4" ry="6.6" fill="url(#gC)" transform="rotate(34 1638 1875)"/><ellipse cx="1216" cy="1901" rx="13.4" ry="9.2" fill="url(#gY)" transform="rotate(48 1216 1901)"/><ellipse cx="1363" cy="1967" rx="12.9" ry="8.7" fill="url(#gG)" transform="rotate(-9 1363 1967)"/><ellipse cx="1316" cy="1665" rx="8.8" ry="8.5" fill="url(#gG)" transform="rotate(-52 1316 1665)"/><ellipse cx="1756" cy="1802" rx="11.3" ry="8.0" fill="url(#gC)" transform="rotate(55 1756 1802)"/><ellipse cx="1649" cy="2061" rx="12.0" ry="8.0" fill="url(#gC)" transform="rotate(-17 1649 2061)"/><ellipse cx="1169" cy="1729" rx="13.7" ry="9.1" fill="url(#gG)" transform="rotate(33 1169 1729)"/><ellipse cx="1524" cy="1738" rx="12.0" ry="8.7" fill="url(#gB)" transform="rotate(42 1524 1738)"/><ellipse cx="1238" cy="1479" rx="8.9" ry="7.9" fill="url(#gB)" transform="rotate(18 1238 1479)"/><ellipse cx="1797" cy="2053" rx="11.4" ry="7.8" fill="url(#gB)" transform="rotate(2 1797 2053)"/><ellipse cx="975" cy="2039" rx="14.2" ry="9.5" fill="url(#gG)" transform="rotate(23 975 2039)"/><ellipse cx="1449" cy="1990" rx="11.2" ry="9.8" fill="url(#gC)" transform="rotate(19 1449 1990)"/><ellipse cx="1673" cy="1684" rx="10.3" ry="7.1" fill="url(#gB)" transform="rotate(17 1673 1684)"/><ellipse cx="1313" cy="1399" rx="7.7" ry="6.7" fill="url(#gB)" transform="rotate(-53 1313 1399)"/><ellipse cx="1336" cy="1961" rx="11.5" ry="9.0" fill="url(#gC)" transform="rotate(29 1336 1961)"/><ellipse cx="1214" cy="1667" rx="13.7" ry="9.5" fill="url(#gB)" transform="rotate(50 1214 1667)"/><ellipse cx="1008" cy="2006" rx="13.9" ry="9.3" fill="url(#gY)" transform="rotate(-2 1008 2006)"/><ellipse cx="1249" cy="1727" rx="11.6" ry="9.8" fill="url(#gG)" transform="rotate(4 1249 1727)"/><ellipse cx="1479" cy="1821" rx="12.0" ry="7.8" fill="url(#gC)" transform="rotate(-25 1479 1821)"/><ellipse cx="1459" cy="1746" rx="7.2" ry="6.4" fill="url(#gB)" transform="rotate(47 1459 1746)"/><ellipse cx="1253" cy="1614" rx="11.8" ry="7.6" fill="url(#gB)" transform="rotate(27 1253 1614)"/><ellipse cx="1205" cy="1718" rx="12.2" ry="7.7" fill="url(#gB)" transform="rotate(37 1205 1718)"/><ellipse cx="1516" cy="2004" rx="9.4" ry="6.9" fill="url(#gB)" transform="rotate(21 1516 2004)"/><ellipse cx="1755" cy="1792" rx="10.7" ry="8.0" fill="url(#gB)" transform="rotate(45 1755 1792)"/><ellipse cx="1512" cy="2031" rx="7.6" ry="6.6" fill="url(#gC)" transform="rotate(34 1512 2031)"/><ellipse cx="1636" cy="2086" rx="13.8" ry="9.7" fill="url(#gC)" transform="rotate(-11 1636 2086)"/><ellipse cx="1044" cy="1875" rx="9.2" ry="9.1" fill="url(#gB)" transform="rotate(-51 1044 1875)"/><ellipse cx="1663" cy="1973" rx="11.2" ry="7.4" fill="url(#gB)" transform="rotate(25 1663 1973)"/><ellipse cx="1429" cy="1718" rx="13.6" ry="9.0" fill="url(#gY)" transform="rotate(5 1429 1718)"/><ellipse cx="1331" cy="1375" rx="10.7" ry="9.0" fill="url(#gB)" transform="rotate(-9 1331 1375)"/><ellipse cx="1352" cy="1322" rx="9.4" ry="7.6" fill="url(#gR)" transform="rotate(-31 1352 1322)"/><ellipse cx="1162" cy="1883" rx="11.2" ry="9.4" fill="url(#gY)" transform="rotate(-10 1162 1883)"/><ellipse cx="1385" cy="1656" rx="7.5" ry="6.9" fill="url(#gC)" transform="rotate(-43 1385 1656)"/><ellipse cx="1878" cy="2085" rx="11.5" ry="7.5" fill="url(#gB)" transform="rotate(44 1878 2085)"/><ellipse cx="1068" cy="1884" rx="7.8" ry="7.6" fill="url(#gY)" transform="rotate(-29 1068 1884)"/><ellipse cx="1467" cy="1986" rx="8.3" ry="6.4" fill="url(#gG)" transform="rotate(-8 1467 1986)"/><ellipse cx="1247" cy="2004" rx="9.5" ry="6.4" fill="url(#gC)" transform="rotate(-0 1247 2004)"/><ellipse cx="1769" cy="2051" rx="8.1" ry="6.8" fill="url(#gB)" transform="rotate(11 1769 2051)"/><ellipse cx="1032" cy="1914" rx="13.3" ry="9.3" fill="url(#gB)" transform="rotate(15 1032 1914)"/><ellipse cx="1241" cy="1387" rx="6.9" ry="6.5" fill="url(#gB)" transform="rotate(58 1241 1387)"/><ellipse cx="1622" cy="1972" rx="7.6" ry="6.2" fill="url(#gC)" transform="rotate(-38 1622 1972)"/><ellipse cx="1391" cy="1577" rx="10.3" ry="8.5" fill="url(#gC)" transform="rotate(-46 1391 1577)"/><ellipse cx="1693" cy="1838" rx="8.8" ry="7.8" fill="url(#gB)" transform="rotate(51 1693 1838)"/><ellipse cx="1638" cy="1836" rx="8.9" ry="8.0" fill="url(#gB)" transform="rotate(49 1638 1836)"/><ellipse cx="1215" cy="1380" rx="14.5" ry="9.8" fill="url(#gB)" transform="rotate(-32 1215 1380)"/><ellipse cx="1865" cy="2085" rx="13.8" ry="8.9" fill="url(#gG)" transform="rotate(-52 1865 2085)"/><ellipse cx="1193" cy="2040" rx="12.1" ry="9.7" fill="url(#gB)" transform="rotate(58 1193 2040)"/><ellipse cx="1739" cy="2010" rx="7.4" ry="6.3" fill="url(#gC)" transform="rotate(42 1739 2010)"/><ellipse cx="1212" cy="1998" rx="9.1" ry="6.8" fill="url(#gB)" transform="rotate(19 1212 1998)"/><ellipse cx="1539" cy="1970" rx="10.4" ry="6.7" fill="url(#gG)" transform="rotate(38 1539 1970)"/><ellipse cx="1355" cy="1955" rx="7.3" ry="6.4" fill="url(#gR)" transform="rotate(21 1355 1955)"/><ellipse cx="1447" cy="1399" rx="11.3" ry="9.2" fill="url(#gB)" transform="rotate(14 1447 1399)"/><ellipse cx="1464" cy="2071" rx="12.3" ry="8.3" fill="url(#gG)" transform="rotate(-28 1464 2071)"/><ellipse cx="1422" cy="1442" rx="9.2" ry="8.1" fill="url(#gY)" transform="rotate(-42 1422 1442)"/><ellipse cx="1436" cy="1491" rx="7.1" ry="6.5" fill="url(#gY)" transform="rotate(59 1436 1491)"/><ellipse cx="1323" cy="1349" rx="12.9" ry="8.6" fill="url(#gC)" transform="rotate(-42 1323 1349)"/><ellipse cx="1221" cy="1681" rx="9.8" ry="9.3" fill="url(#gB)" transform="rotate(-48 1221 1681)"/><ellipse cx="1729" cy="1765" rx="8.3" ry="6.0" fill="url(#gY)" transform="rotate(32 1729 1765)"/><ellipse cx="1567" cy="1913" rx="11.6" ry="8.8" fill="url(#gB)" transform="rotate(-28 1567 1913)"/><ellipse cx="1307" cy="1447" rx="10.6" ry="9.2" fill="url(#gC)" transform="rotate(-32 1307 1447)"/><ellipse cx="1657" cy="2026" rx="11.9" ry="9.0" fill="url(#gC)" transform="rotate(-55 1657 2026)"/><ellipse cx="1448" cy="1739" rx="13.2" ry="8.7" fill="url(#gR)" transform="rotate(32 1448 1739)"/><ellipse cx="1152" cy="1906" rx="10.9" ry="8.8" fill="url(#gY)" transform="rotate(51 1152 1906)"/><ellipse cx="1092" cy="1775" rx="12.7" ry="8.3" fill="url(#gC)" transform="rotate(7 1092 1775)"/><ellipse cx="1562" cy="1672" rx="9.0" ry="8.8" fill="url(#gG)" transform="rotate(8 1562 1672)"/><ellipse cx="1796" cy="1965" rx="7.4" ry="6.3" fill="url(#gY)" transform="rotate(35 1796 1965)"/><ellipse cx="1455" cy="1890" rx="11.5" ry="8.5" fill="url(#gB)" transform="rotate(35 1455 1890)"/><ellipse cx="1091" cy="1830" rx="8.4" ry="7.4" fill="url(#gG)" transform="rotate(-30 1091 1830)"/><ellipse cx="1690" cy="2064" rx="6.9" ry="6.0" fill="url(#gC)" transform="rotate(-17 1690 2064)"/><ellipse cx="1192" cy="1858" rx="8.9" ry="6.7" fill="url(#gC)" transform="rotate(-5 1192 1858)"/><ellipse cx="1575" cy="1518" rx="10.2" ry="6.4" fill="url(#gG)" transform="rotate(17 1575 1518)"/><ellipse cx="1571" cy="1846" rx="11.7" ry="8.5" fill="url(#gC)" transform="rotate(-26 1571 1846)"/><ellipse cx="1266" cy="1809" rx="13.0" ry="9.0" fill="url(#gG)" transform="rotate(-57 1266 1809)"/><ellipse cx="1506" cy="1795" rx="9.1" ry="6.7" fill="url(#gC)" transform="rotate(58 1506 1795)"/><ellipse cx="1582" cy="1911" rx="7.1" ry="6.6" fill="url(#gB)" transform="rotate(44 1582 1911)"/><ellipse cx="1564" cy="1520" rx="9.9" ry="8.5" fill="url(#gC)" transform="rotate(-19 1564 1520)"/><ellipse cx="1344" cy="1803" rx="9.5" ry="7.7" fill="url(#gB)" transform="rotate(-16 1344 1803)"/><ellipse cx="1617" cy="1952" rx="14.2" ry="9.1" fill="url(#gG)" transform="rotate(-6 1617 1952)"/><ellipse cx="1468" cy="1467" rx="8.8" ry="7.3" fill="url(#gG)" transform="rotate(-51 1468 1467)"/><ellipse cx="1728" cy="1762" rx="13.3" ry="8.5" fill="url(#gB)" transform="rotate(1 1728 1762)"/><ellipse cx="1432" cy="1416" rx="13.9" ry="8.7" fill="url(#gY)" transform="rotate(-33 1432 1416)"/><ellipse cx="1189" cy="2060" rx="7.4" ry="6.2" fill="url(#gC)" transform="rotate(7 1189 2060)"/><ellipse cx="1284" cy="1767" rx="12.3" ry="8.0" fill="url(#gG)" transform="rotate(40 1284 1767)"/><ellipse cx="1043" cy="2030" rx="10.2" ry="6.8" fill="url(#gG)" transform="rotate(-52 1043 2030)"/><ellipse cx="1151" cy="1590" rx="8.9" ry="6.9" fill="url(#gY)" transform="rotate(1 1151 1590)"/><ellipse cx="1407" cy="1840" rx="12.5" ry="8.7" fill="url(#gY)" transform="rotate(-40 1407 1840)"/><ellipse cx="1738" cy="1905" rx="8.5" ry="6.8" fill="url(#gG)" transform="rotate(23 1738 1905)"/><ellipse cx="1265" cy="1795" rx="7.8" ry="7.8" fill="url(#gY)" transform="rotate(-6 1265 1795)"/><ellipse cx="1192" cy="1517" rx="10.4" ry="8.2" fill="url(#gY)" transform="rotate(49 1192 1517)"/><ellipse cx="1149" cy="1591" rx="13.8" ry="8.7" fill="url(#gY)" transform="rotate(30 1149 1591)"/><ellipse cx="1460" cy="1675" rx="8.3" ry="6.1" fill="url(#gG)" transform="rotate(46 1460 1675)"/><ellipse cx="1544" cy="2011" rx="10.4" ry="7.3" fill="url(#gR)" transform="rotate(-50 1544 2011)"/><ellipse cx="1228" cy="1502" rx="12.5" ry="9.6" fill="url(#gB)" transform="rotate(-54 1228 1502)"/><ellipse cx="1609" cy="1662" rx="8.2" ry="7.4" fill="url(#gY)" transform="rotate(31 1609 1662)"/><ellipse cx="1255" cy="1828" rx="10.6" ry="6.8" fill="url(#gC)" transform="rotate(-46 1255 1828)"/><ellipse cx="1220" cy="2061" rx="12.2" ry="8.6" fill="url(#gG)" transform="rotate(29 1220 2061)"/><ellipse cx="1456" cy="1843" rx="9.7" ry="6.2" fill="url(#gG)" transform="rotate(19 1456 1843)"/><ellipse cx="1499" cy="1849" rx="13.9" ry="9.6" fill="url(#gG)" transform="rotate(13 1499 1849)"/><ellipse cx="1423" cy="1664" rx="13.9" ry="8.8" fill="url(#gG)" transform="rotate(-50 1423 1664)"/><ellipse cx="1515" cy="1472" rx="11.3" ry="9.1" fill="url(#gB)" transform="rotate(-18 1515 1472)"/><ellipse cx="1713" cy="1991" rx="13.7" ry="8.6" fill="url(#gC)" transform="rotate(53 1713 1991)"/><ellipse cx="1469" cy="2014" rx="7.4" ry="6.2" fill="url(#gC)" transform="rotate(-39 1469 2014)"/><ellipse cx="1377" cy="2018" rx="13.3" ry="9.9" fill="url(#gC)" transform="rotate(-30 1377 2018)"/><ellipse cx="1601" cy="1924" rx="14.1" ry="8.9" fill="url(#gB)" transform="rotate(24 1601 1924)"/><ellipse cx="1445" cy="1758" rx="11.5" ry="7.8" fill="url(#gY)" transform="rotate(-19 1445 1758)"/><ellipse cx="1095" cy="1721" rx="8.7" ry="6.6" fill="url(#gG)" transform="rotate(9 1095 1721)"/><ellipse cx="1447" cy="1426" rx="10.9" ry="7.5" fill="url(#gG)" transform="rotate(1 1447 1426)"/><ellipse cx="1582" cy="1892" rx="9.1" ry="7.3" fill="url(#gG)" transform="rotate(-38 1582 1892)"/><ellipse cx="1077" cy="1962" rx="8.5" ry="7.5" fill="url(#gG)" transform="rotate(31 1077 1962)"/><ellipse cx="1395" cy="1971" rx="12.9" ry="9.2" fill="url(#gB)" transform="rotate(15 1395 1971)"/><ellipse cx="1789" cy="1961" rx="9.4" ry="6.2" fill="url(#gY)" transform="rotate(-43 1789 1961)"/><ellipse cx="1782" cy="1938" rx="12.6" ry="8.3" fill="url(#gB)" transform="rotate(-16 1782 1938)"/><ellipse cx="1548" cy="1991" rx="9.1" ry="7.4" fill="url(#gB)" transform="rotate(56 1548 1991)"/><ellipse cx="1307" cy="1858" rx="8.3" ry="6.8" fill="url(#gG)" transform="rotate(-29 1307 1858)"/><ellipse cx="1405" cy="1722" rx="12.4" ry="7.9" fill="url(#gB)" transform="rotate(28 1405 1722)"/><ellipse cx="1354" cy="1972" rx="12.2" ry="9.5" fill="url(#gC)" transform="rotate(18 1354 1972)"/><ellipse cx="1165" cy="1621" rx="7.2" ry="6.8" fill="url(#gB)" transform="rotate(-25 1165 1621)"/><ellipse cx="1795" cy="2047" rx="9.2" ry="7.0" fill="url(#gB)" transform="rotate(34 1795 2047)"/><ellipse cx="1314" cy="1942" rx="12.1" ry="7.8" fill="url(#gY)" transform="rotate(55 1314 1942)"/><ellipse cx="1388" cy="1403" rx="9.8" ry="6.5" fill="url(#gY)" transform="rotate(42 1388 1403)"/><ellipse cx="1467" cy="2039" rx="12.2" ry="8.7" fill="url(#gC)" transform="rotate(15 1467 2039)"/><ellipse cx="1735" cy="1758" rx="9.2" ry="8.6" fill="url(#gR)" transform="rotate(19 1735 1758)"/><ellipse cx="1677" cy="2020" rx="13.1" ry="8.7" fill="url(#gB)" transform="rotate(-13 1677 2020)"/><ellipse cx="1376" cy="1813" rx="6.9" ry="6.4" fill="url(#gC)" transform="rotate(-36 1376 1813)"/><ellipse cx="1601" cy="1580" rx="10.1" ry="6.6" fill="url(#gY)" transform="rotate(44 1601 1580)"/><ellipse cx="1408" cy="1514" rx="8.3" ry="7.1" fill="url(#gB)" transform="rotate(-39 1408 1514)"/><ellipse cx="1415" cy="1756" rx="13.3" ry="9.2" fill="url(#gG)" transform="rotate(-11 1415 1756)"/><ellipse cx="1790" cy="1936" rx="8.5" ry="7.3" fill="url(#gG)" transform="rotate(48 1790 1936)"/><ellipse cx="1232" cy="1554" rx="8.9" ry="8.1" fill="url(#gB)" transform="rotate(15 1232 1554)"/><ellipse cx="1349" cy="1546" rx="13.9" ry="8.8" fill="url(#gB)" transform="rotate(-48 1349 1546)"/><ellipse cx="1196" cy="1520" rx="9.7" ry="7.1" fill="url(#gB)" transform="rotate(-50 1196 1520)"/><ellipse cx="1377" cy="1931" rx="9.0" ry="6.6" fill="url(#gG)" transform="rotate(-51 1377 1931)"/><ellipse cx="1808" cy="2018" rx="10.1" ry="7.6" fill="url(#gC)" transform="rotate(10 1808 2018)"/><ellipse cx="1016" cy="2022" rx="13.3" ry="9.1" fill="url(#gC)" transform="rotate(-13 1016 2022)"/><ellipse cx="1089" cy="2068" rx="9.9" ry="9.2" fill="url(#gY)" transform="rotate(48 1089 2068)"/><ellipse cx="1788" cy="1915" rx="8.6" ry="6.2" fill="url(#gC)" transform="rotate(20 1788 1915)"/><ellipse cx="1777" cy="1957" rx="12.4" ry="9.5" fill="url(#gB)" transform="rotate(51 1777 1957)"/><ellipse cx="1286" cy="2003" rx="11.2" ry="8.5" fill="url(#gB)" transform="rotate(-31 1286 2003)"/><ellipse cx="1245" cy="1444" rx="12.6" ry="9.8" fill="url(#gB)" transform="rotate(26 1245 1444)"/><ellipse cx="1337" cy="1691" rx="8.7" ry="6.8" fill="url(#gG)" transform="rotate(-8 1337 1691)"/><ellipse cx="1136" cy="1574" rx="10.1" ry="8.5" fill="url(#gC)" transform="rotate(-27 1136 1574)"/><ellipse cx="1312" cy="1510" rx="8.7" ry="7.1" fill="url(#gR)" transform="rotate(-18 1312 1510)"/><ellipse cx="1097" cy="1788" rx="9.1" ry="6.4" fill="url(#gB)" transform="rotate(11 1097 1788)"/><ellipse cx="1422" cy="1918" rx="9.3" ry="9.3" fill="url(#gC)" transform="rotate(-17 1422 1918)"/><ellipse cx="1647" cy="1797" rx="9.0" ry="9.0" fill="url(#gC)" transform="rotate(26 1647 1797)"/><ellipse cx="1732" cy="1757" rx="11.2" ry="9.7" fill="url(#gB)" transform="rotate(42 1732 1757)"/><ellipse cx="1697" cy="1617" rx="11.1" ry="8.0" fill="url(#gY)" transform="rotate(20 1697 1617)"/><ellipse cx="1340" cy="1426" rx="13.5" ry="9.1" fill="url(#gY)" transform="rotate(11 1340 1426)"/><ellipse cx="1405" cy="1382" rx="11.3" ry="7.8" fill="url(#gC)" transform="rotate(34 1405 1382)"/><ellipse cx="1736" cy="1918" rx="8.3" ry="8.0" fill="url(#gC)" transform="rotate(22 1736 1918)"/><ellipse cx="1073" cy="1987" rx="9.1" ry="6.0" fill="url(#gB)" transform="rotate(-29 1073 1987)"/><ellipse cx="1327" cy="1516" rx="11.9" ry="9.7" fill="url(#gG)" transform="rotate(44 1327 1516)"/><ellipse cx="1279" cy="2087" rx="12.6" ry="8.1" fill="url(#gC)" transform="rotate(-32 1279 2087)"/><ellipse cx="1533" cy="1548" rx="8.3" ry="6.4" fill="url(#gC)" transform="rotate(-1 1533 1548)"/><ellipse cx="1344" cy="1952" rx="13.3" ry="9.9" fill="url(#gC)" transform="rotate(-36 1344 1952)"/><ellipse cx="1263" cy="1879" rx="8.2" ry="6.7" fill="url(#gC)" transform="rotate(43 1263 1879)"/><ellipse cx="1798" cy="2078" rx="10.9" ry="9.6" fill="url(#gC)" transform="rotate(43 1798 2078)"/><ellipse cx="1229" cy="1525" rx="10.7" ry="6.8" fill="url(#gB)" transform="rotate(-51 1229 1525)"/><ellipse cx="1447" cy="1637" rx="11.5" ry="7.4" fill="url(#gR)" transform="rotate(-28 1447 1637)"/><ellipse cx="1204" cy="1580" rx="7.6" ry="7.1" fill="url(#gG)" transform="rotate(-3 1204 1580)"/><ellipse cx="1266" cy="2086" rx="13.3" ry="8.3" fill="url(#gC)" transform="rotate(11 1266 2086)"/><ellipse cx="1249" cy="1888" rx="9.8" ry="8.5" fill="url(#gG)" transform="rotate(10 1249 1888)"/><ellipse cx="1359" cy="1347" rx="11.1" ry="7.8" fill="url(#gC)" transform="rotate(-40 1359 1347)"/><ellipse cx="1360" cy="2043" rx="12.1" ry="7.8" fill="url(#gG)" transform="rotate(-4 1360 2043)"/><ellipse cx="1397" cy="2043" rx="8.7" ry="8.0" fill="url(#gY)" transform="rotate(18 1397 2043)"/><ellipse cx="1179" cy="1853" rx="9.1" ry="7.0" fill="url(#gB)" transform="rotate(-26 1179 1853)"/><ellipse cx="1270" cy="1389" rx="11.6" ry="7.6" fill="url(#gB)" transform="rotate(-58 1270 1389)"/><ellipse cx="1104" cy="1903" rx="10.8" ry="9.2" fill="url(#gB)" transform="rotate(13 1104 1903)"/><ellipse cx="981" cy="2042" rx="7.5" ry="6.8" fill="url(#gY)" transform="rotate(-57 981 2042)"/><ellipse cx="1232" cy="1568" rx="10.3" ry="7.1" fill="url(#gG)" transform="rotate(-43 1232 1568)"/><ellipse cx="1639" cy="1762" rx="6.9" ry="6.2" fill="url(#gB)" transform="rotate(-13 1639 1762)"/><ellipse cx="1088" cy="1729" rx="9.3" ry="7.4" fill="url(#gB)" transform="rotate(-3 1088 1729)"/><ellipse cx="1664" cy="1894" rx="7.5" ry="7.1" fill="url(#gB)" transform="rotate(32 1664 1894)"/><ellipse cx="1647" cy="1895" rx="8.6" ry="8.5" fill="url(#gC)" transform="rotate(17 1647 1895)"/><ellipse cx="1581" cy="1868" rx="9.7" ry="7.0" fill="url(#gC)" transform="rotate(-32 1581 1868)"/><ellipse cx="1589" cy="1714" rx="8.0" ry="7.0" fill="url(#gB)" transform="rotate(51 1589 1714)"/><ellipse cx="1236" cy="1457" rx="14.0" ry="9.7" fill="url(#gC)" transform="rotate(-27 1236 1457)"/><ellipse cx="1297" cy="1816" rx="7.1" ry="6.7" fill="url(#gG)" transform="rotate(32 1297 1816)"/><ellipse cx="1390" cy="1475" rx="9.7" ry="9.1" fill="url(#gY)" transform="rotate(-38 1390 1475)"/><ellipse cx="1443" cy="2015" rx="12.2" ry="8.6" fill="url(#gB)" transform="rotate(8 1443 2015)"/><ellipse cx="1844" cy="2006" rx="9.5" ry="6.7" fill="url(#gG)" transform="rotate(-49 1844 2006)"/><ellipse cx="1331" cy="1666" rx="11.2" ry="9.3" fill="url(#gG)" transform="rotate(58 1331 1666)"/><ellipse cx="1198" cy="1519" rx="9.4" ry="6.6" fill="url(#gB)" transform="rotate(-17 1198 1519)"/><ellipse cx="1103" cy="2055" rx="7.6" ry="6.4" fill="url(#gB)" transform="rotate(-49 1103 2055)"/><ellipse cx="1235" cy="1430" rx="8.4" ry="7.4" fill="url(#gC)" transform="rotate(14 1235 1430)"/><ellipse cx="1514" cy="1891" rx="11.1" ry="9.6" fill="url(#gB)" transform="rotate(24 1514 1891)"/><ellipse cx="1325" cy="1346" rx="8.1" ry="6.8" fill="url(#gB)" transform="rotate(-59 1325 1346)"/><ellipse cx="1533" cy="1644" rx="7.4" ry="7.2" fill="url(#gC)" transform="rotate(-56 1533 1644)"/><ellipse cx="1537" cy="1460" rx="8.9" ry="6.3" fill="url(#gG)" transform="rotate(40 1537 1460)"/><ellipse cx="1327" cy="1401" rx="8.6" ry="6.5" fill="url(#gB)" transform="rotate(33 1327 1401)"/><ellipse cx="1188" cy="1581" rx="9.2" ry="6.9" fill="url(#gG)" transform="rotate(-41 1188 1581)"/><ellipse cx="1097" cy="1934" rx="9.3" ry="8.2" fill="url(#gG)" transform="rotate(-16 1097 1934)"/><ellipse cx="1540" cy="1890" rx="8.7" ry="6.5" fill="url(#gC)" transform="rotate(38 1540 1890)"/><ellipse cx="1645" cy="2030" rx="13.3" ry="8.9" fill="url(#gB)" transform="rotate(-13 1645 2030)"/><ellipse cx="1298" cy="1865" rx="9.6" ry="6.5" fill="url(#gY)" transform="rotate(-23 1298 1865)"/><ellipse cx="1557" cy="1871" rx="13.2" ry="9.8" fill="url(#gB)" transform="rotate(22 1557 1871)"/><ellipse cx="1211" cy="1944" rx="13.1" ry="9.2" fill="url(#gB)" transform="rotate(27 1211 1944)"/><ellipse cx="1149" cy="1607" rx="10.7" ry="7.6" fill="url(#gC)" transform="rotate(-30 1149 1607)"/><ellipse cx="1133" cy="2074" rx="9.3" ry="6.2" fill="url(#gB)" transform="rotate(29 1133 2074)"/><ellipse cx="1260" cy="2040" rx="15.0" ry="10.0" fill="url(#gB)" transform="rotate(-27 1260 2040)"/><ellipse cx="1320" cy="1828" rx="11.7" ry="9.5" fill="url(#gG)" transform="rotate(-19 1320 1828)"/><ellipse cx="1453" cy="1673" rx="11.2" ry="7.5" fill="url(#gB)" transform="rotate(3 1453 1673)"/><ellipse cx="1751" cy="1944" rx="13.5" ry="9.8" fill="url(#gG)" transform="rotate(44 1751 1944)"/><ellipse cx="1649" cy="1530" rx="10.4" ry="8.5" fill="url(#gC)" transform="rotate(3 1649 1530)"/><ellipse cx="1301" cy="1412" rx="8.1" ry="6.2" fill="url(#gC)" transform="rotate(-23 1301 1412)"/><ellipse cx="1625" cy="1578" rx="12.7" ry="9.7" fill="url(#gC)" transform="rotate(11 1625 1578)"/><ellipse cx="1356" cy="2075" rx="7.8" ry="7.4" fill="url(#gG)" transform="rotate(9 1356 2075)"/><ellipse cx="1076" cy="1939" rx="7.6" ry="6.3" fill="url(#gC)" transform="rotate(-36 1076 1939)"/><ellipse cx="1397" cy="1934" rx="12.0" ry="8.6" fill="url(#gB)" transform="rotate(41 1397 1934)"/><ellipse cx="1638" cy="2047" rx="11.9" ry="8.4" fill="url(#gB)" transform="rotate(40 1638 2047)"/><ellipse cx="1777" cy="1947" rx="8.1" ry="7.4" fill="url(#gB)" transform="rotate(-11 1777 1947)"/><ellipse cx="1482" cy="1412" rx="9.9" ry="8.7" fill="url(#gC)" transform="rotate(-52 1482 1412)"/><ellipse cx="1418" cy="1775" rx="10.2" ry="7.3" fill="url(#gB)" transform="rotate(-43 1418 1775)"/><ellipse cx="1279" cy="1620" rx="12.3" ry="8.2" fill="url(#gG)" transform="rotate(1 1279 1620)"/><ellipse cx="1597" cy="1819" rx="11.5" ry="9.1" fill="url(#gC)" transform="rotate(43 1597 1819)"/><ellipse cx="1710" cy="2063" rx="9.3" ry="7.8" fill="url(#gB)" transform="rotate(45 1710 2063)"/><ellipse cx="1251" cy="2022" rx="9.3" ry="6.5" fill="url(#gB)" transform="rotate(20 1251 2022)"/><ellipse cx="1163" cy="1696" rx="13.5" ry="9.1" fill="url(#gC)" transform="rotate(1 1163 1696)"/><ellipse cx="1645" cy="2000" rx="8.1" ry="6.6" fill="url(#gB)" transform="rotate(24 1645 2000)"/><ellipse cx="1027" cy="1934" rx="6.9" ry="6.2" fill="url(#gC)" transform="rotate(27 1027 1934)"/><ellipse cx="1042" cy="1997" rx="10.4" ry="9.8" fill="url(#gG)" transform="rotate(51 1042 1997)"/><ellipse cx="1685" cy="1682" rx="11.3" ry="7.2" fill="url(#gR)" transform="rotate(-25 1685 1682)"/><ellipse cx="1671" cy="1887" rx="8.6" ry="7.1" fill="url(#gC)" transform="rotate(22 1671 1887)"/><ellipse cx="1181" cy="1965" rx="10.4" ry="6.6" fill="url(#gG)" transform="rotate(-2 1181 1965)"/><ellipse cx="1388" cy="1466" rx="10.5" ry="8.3" fill="url(#gY)" transform="rotate(2 1388 1466)"/><ellipse cx="1606" cy="1955" rx="10.6" ry="9.9" fill="url(#gB)" transform="rotate(42 1606 1955)"/><ellipse cx="1554" cy="1694" rx="11.4" ry="8.2" fill="url(#gC)" transform="rotate(27 1554 1694)"/><ellipse cx="1558" cy="2069" rx="14.2" ry="9.5" fill="url(#gG)" transform="rotate(-45 1558 2069)"/><ellipse cx="1059" cy="2058" rx="8.9" ry="7.5" fill="url(#gC)" transform="rotate(23 1059 2058)"/><ellipse cx="1406" cy="2005" rx="7.8" ry="7.0" fill="url(#gG)" transform="rotate(6 1406 2005)"/><ellipse cx="1477" cy="1575" rx="9.5" ry="7.3" fill="url(#gR)" transform="rotate(-24 1477 1575)"/><ellipse cx="1378" cy="2083" rx="7.3" ry="6.9" fill="url(#gG)" transform="rotate(9 1378 2083)"/><ellipse cx="1256" cy="1648" rx="9.3" ry="8.7" fill="url(#gC)" transform="rotate(30 1256 1648)"/><ellipse cx="1445" cy="1569" rx="10.5" ry="6.9" fill="url(#gG)" transform="rotate(-43 1445 1569)"/><ellipse cx="1159" cy="1772" rx="11.3" ry="8.1" fill="url(#gC)" transform="rotate(11 1159 1772)"/><ellipse cx="1252" cy="1551" rx="12.6" ry="9.3" fill="url(#gB)" transform="rotate(-24 1252 1551)"/><ellipse cx="1135" cy="1680" rx="10.7" ry="9.3" fill="url(#gY)" transform="rotate(53 1135 1680)"/><ellipse cx="1016" cy="2086" rx="12.8" ry="8.8" fill="url(#gC)" transform="rotate(-47 1016 2086)"/><ellipse cx="1168" cy="1859" rx="10.2" ry="9.0" fill="url(#gB)" transform="rotate(-15 1168 1859)"/><ellipse cx="1459" cy="1928" rx="8.6" ry="6.8" fill="url(#gC)" transform="rotate(-45 1459 1928)"/><ellipse cx="1255" cy="1516" rx="14.8" ry="9.6" fill="url(#gG)" transform="rotate(24 1255 1516)"/><ellipse cx="1139" cy="1476" rx="11.1" ry="9.4" fill="url(#gC)" transform="rotate(-13 1139 1476)"/><ellipse cx="1159" cy="1964" rx="8.5" ry="7.8" fill="url(#gC)" transform="rotate(-31 1159 1964)"/><ellipse cx="1230" cy="1889" rx="10.0" ry="8.7" fill="url(#gG)" transform="rotate(46 1230 1889)"/><ellipse cx="1539" cy="1581" rx="12.0" ry="9.1" fill="url(#gG)" transform="rotate(-51 1539 1581)"/><ellipse cx="1674" cy="1593" rx="9.6" ry="6.2" fill="url(#gG)" transform="rotate(-22 1674 1593)"/><ellipse cx="1596" cy="1500" rx="6.4" ry="6.2" fill="url(#gG)" transform="rotate(30 1596 1500)"/><ellipse cx="1228" cy="1429" rx="9.0" ry="6.2" fill="url(#gB)" transform="rotate(36 1228 1429)"/><ellipse cx="1276" cy="1376" rx="8.4" ry="7.9" fill="url(#gC)" transform="rotate(48 1276 1376)"/><ellipse cx="1362" cy="1367" rx="10.1" ry="9.2" fill="url(#gB)" transform="rotate(15 1362 1367)"/><ellipse cx="1269" cy="1416" rx="13.2" ry="8.3" fill="url(#gC)" transform="rotate(25 1269 1416)"/><ellipse cx="1124" cy="2015" rx="9.6" ry="7.8" fill="url(#gY)" transform="rotate(18 1124 2015)"/><ellipse cx="1528" cy="1719" rx="9.4" ry="7.2" fill="url(#gB)" transform="rotate(18 1528 1719)"/><ellipse cx="1731" cy="2033" rx="10.3" ry="7.7" fill="url(#gG)" transform="rotate(50 1731 2033)"/><ellipse cx="1359" cy="1313" rx="12.0" ry="8.2" fill="url(#gB)" transform="rotate(-13 1359 1313)"/><ellipse cx="1759" cy="2066" rx="11.0" ry="7.6" fill="url(#gB)" transform="rotate(22 1759 2066)"/><ellipse cx="1180" cy="1934" rx="9.7" ry="8.4" fill="url(#gC)" transform="rotate(23 1180 1934)"/><ellipse cx="1390" cy="2052" rx="9.9" ry="7.4" fill="url(#gY)" transform="rotate(-39 1390 2052)"/><ellipse cx="1303" cy="1848" rx="11.2" ry="8.4" fill="url(#gC)" transform="rotate(5 1303 1848)"/><ellipse cx="1201" cy="1560" rx="8.5" ry="6.5" fill="url(#gC)" transform="rotate(38 1201 1560)"/><ellipse cx="1220" cy="1368" rx="9.6" ry="6.8" fill="url(#gC)" transform="rotate(48 1220 1368)"/><ellipse cx="1211" cy="1964" rx="6.7" ry="6.1" fill="url(#gY)" transform="rotate(44 1211 1964)"/><ellipse cx="1187" cy="1851" rx="12.6" ry="8.3" fill="url(#gG)" transform="rotate(-59 1187 1851)"/><ellipse cx="1383" cy="1843" rx="11.1" ry="8.8" fill="url(#gB)" transform="rotate(45 1383 1843)"/><ellipse cx="1426" cy="1738" rx="10.8" ry="9.3" fill="url(#gC)" transform="rotate(52 1426 1738)"/><ellipse cx="1171" cy="1516" rx="9.5" ry="9.1" fill="url(#gY)" transform="rotate(38 1171 1516)"/><ellipse cx="1671" cy="1675" rx="10.8" ry="6.8" fill="url(#gG)" transform="rotate(13 1671 1675)"/><ellipse cx="1812" cy="2017" rx="12.5" ry="9.6" fill="url(#gG)" transform="rotate(5 1812 2017)"/><ellipse cx="1374" cy="1446" rx="11.5" ry="9.3" fill="url(#gG)" transform="rotate(-22 1374 1446)"/><ellipse cx="1194" cy="1984" rx="12.6" ry="8.7" fill="url(#gG)" transform="rotate(-12 1194 1984)"/><ellipse cx="1489" cy="1902" rx="10.0" ry="7.4" fill="url(#gG)" transform="rotate(-54 1489 1902)"/><ellipse cx="1401" cy="1471" rx="11.7" ry="7.3" fill="url(#gB)" transform="rotate(57 1401 1471)"/><ellipse cx="1504" cy="1869" rx="7.6" ry="6.5" fill="url(#gG)" transform="rotate(30 1504 1869)"/><ellipse cx="1411" cy="1968" rx="10.1" ry="7.6" fill="url(#gC)" transform="rotate(32 1411 1968)"/><ellipse cx="1124" cy="1872" rx="7.8" ry="7.0" fill="url(#gC)" transform="rotate(40 1124 1872)"/><ellipse cx="1105" cy="2041" rx="9.6" ry="7.4" fill="url(#gG)" transform="rotate(14 1105 2041)"/><ellipse cx="1249" cy="1721" rx="13.4" ry="9.6" fill="url(#gC)" transform="rotate(-55 1249 1721)"/><ellipse cx="1546" cy="1585" rx="10.2" ry="7.8" fill="url(#gG)" transform="rotate(27 1546 1585)"/><ellipse cx="1289" cy="1429" rx="10.8" ry="9.9" fill="url(#gG)" transform="rotate(-8 1289 1429)"/><ellipse cx="988" cy="2047" rx="11.7" ry="8.8" fill="url(#gG)" transform="rotate(-36 988 2047)"/><ellipse cx="1346" cy="1891" rx="13.5" ry="9.2" fill="url(#gC)" transform="rotate(-29 1346 1891)"/><ellipse cx="1116" cy="1903" rx="11.0" ry="8.5" fill="url(#gG)" transform="rotate(7 1116 1903)"/><ellipse cx="1316" cy="1714" rx="9.9" ry="9.0" fill="url(#gB)" transform="rotate(36 1316 1714)"/><ellipse cx="1675" cy="1722" rx="7.7" ry="7.7" fill="url(#gG)" transform="rotate(-41 1675 1722)"/><ellipse cx="1474" cy="2052" rx="12.5" ry="8.5" fill="url(#gG)" transform="rotate(18 1474 2052)"/><ellipse cx="1266" cy="1544" rx="12.4" ry="8.7" fill="url(#gY)" transform="rotate(47 1266 1544)"/><ellipse cx="1212" cy="1920" rx="12.3" ry="8.7" fill="url(#gG)" transform="rotate(35 1212 1920)"/><ellipse cx="1739" cy="1905" rx="7.4" ry="6.6" fill="url(#gG)" transform="rotate(53 1739 1905)"/><ellipse cx="1655" cy="1885" rx="12.3" ry="8.6" fill="url(#gY)" transform="rotate(-15 1655 1885)"/><ellipse cx="1583" cy="1647" rx="10.5" ry="7.1" fill="url(#gB)" transform="rotate(-30 1583 1647)"/><ellipse cx="1398" cy="1889" rx="10.6" ry="7.1" fill="url(#gB)" transform="rotate(24 1398 1889)"/><ellipse cx="1532" cy="2060" rx="10.0" ry="9.2" fill="url(#gC)" transform="rotate(45 1532 2060)"/><ellipse cx="1309" cy="1870" rx="8.8" ry="6.2" fill="url(#gY)" transform="rotate(-5 1309 1870)"/><ellipse cx="1447" cy="1775" rx="12.3" ry="8.3" fill="url(#gC)" transform="rotate(-3 1447 1775)"/><ellipse cx="1230" cy="1621" rx="10.6" ry="6.9" fill="url(#gY)" transform="rotate(-55 1230 1621)"/><ellipse cx="1123" cy="1728" rx="9.3" ry="8.8" fill="url(#gC)" transform="rotate(22 1123 1728)"/><ellipse cx="1238" cy="1450" rx="8.8" ry="6.8" fill="url(#gG)" transform="rotate(1 1238 1450)"/><ellipse cx="1319" cy="1749" rx="11.8" ry="9.9" fill="url(#gG)" transform="rotate(21 1319 1749)"/><ellipse cx="1617" cy="1770" rx="10.0" ry="6.3" fill="url(#gB)" transform="rotate(-4 1617 1770)"/><ellipse cx="1616" cy="1668" rx="10.3" ry="7.1" fill="url(#gC)" transform="rotate(-11 1616 1668)"/><ellipse cx="1155" cy="2078" rx="12.4" ry="9.6" fill="url(#gG)" transform="rotate(2 1155 2078)"/><ellipse cx="1164" cy="1886" rx="9.8" ry="6.5" fill="url(#gB)" transform="rotate(-19 1164 1886)"/><ellipse cx="1325" cy="1529" rx="7.0" ry="6.8" fill="url(#gB)" transform="rotate(33 1325 1529)"/><ellipse cx="1595" cy="2027" rx="15.2" ry="9.9" fill="url(#gC)" transform="rotate(52 1595 2027)"/><ellipse cx="1782" cy="1908" rx="7.9" ry="6.5" fill="url(#gB)" transform="rotate(-39 1782 1908)"/><ellipse cx="1437" cy="1958" rx="8.3" ry="7.9" fill="url(#gG)" transform="rotate(-30 1437 1958)"/><ellipse cx="1128" cy="1617" rx="11.4" ry="8.5" fill="url(#gG)" transform="rotate(-22 1128 1617)"/><ellipse cx="1154" cy="1406" rx="10.9" ry="8.7" fill="url(#gG)" transform="rotate(23 1154 1406)"/><ellipse cx="1561" cy="1487" rx="8.4" ry="6.6" fill="url(#gY)" transform="rotate(-17 1561 1487)"/><ellipse cx="1738" cy="1888" rx="9.4" ry="8.5" fill="url(#gG)" transform="rotate(41 1738 1888)"/><ellipse cx="1311" cy="1886" rx="8.1" ry="8.0" fill="url(#gG)" transform="rotate(2 1311 1886)"/><ellipse cx="1382" cy="1861" rx="8.2" ry="6.3" fill="url(#gB)" transform="rotate(50 1382 1861)"/><ellipse cx="1632" cy="1918" rx="11.5" ry="9.4" fill="url(#gB)" transform="rotate(19 1632 1918)"/><ellipse cx="1404" cy="2065" rx="11.9" ry="9.1" fill="url(#gB)" transform="rotate(36 1404 2065)"/><ellipse cx="1562" cy="1632" rx="10.6" ry="8.1" fill="url(#gC)" transform="rotate(54 1562 1632)"/><ellipse cx="1481" cy="1994" rx="11.9" ry="8.9" fill="url(#gG)" transform="rotate(-45 1481 1994)"/><ellipse cx="1541" cy="1918" rx="12.1" ry="7.7" fill="url(#gY)" transform="rotate(-49 1541 1918)"/><ellipse cx="1101" cy="1755" rx="7.2" ry="7.0" fill="url(#gB)" transform="rotate(-16 1101 1755)"/><ellipse cx="1828" cy="2082" rx="12.6" ry="9.0" fill="url(#gB)" transform="rotate(15 1828 2082)"/><ellipse cx="1714" cy="1964" rx="9.7" ry="9.2" fill="url(#gC)" transform="rotate(14 1714 1964)"/><ellipse cx="1265" cy="1690" rx="11.6" ry="8.2" fill="url(#gY)" transform="rotate(24 1265 1690)"/><ellipse cx="1038" cy="1991" rx="11.9" ry="8.8" fill="url(#gY)" transform="rotate(-20 1038 1991)"/><ellipse cx="1605" cy="2077" rx="7.0" ry="6.7" fill="url(#gC)" transform="rotate(-46 1605 2077)"/><ellipse cx="1552" cy="1737" rx="9.7" ry="9.0" fill="url(#gG)" transform="rotate(-3 1552 1737)"/><ellipse cx="1376" cy="1697" rx="11.6" ry="8.4" fill="url(#gG)" transform="rotate(5 1376 1697)"/><ellipse cx="1557" cy="1457" rx="12.5" ry="8.9" fill="url(#gB)" transform="rotate(-18 1557 1457)"/><ellipse cx="1501" cy="1619" rx="9.6" ry="8.6" fill="url(#gB)" transform="rotate(11 1501 1619)"/><ellipse cx="1488" cy="1599" rx="10.3" ry="6.9" fill="url(#gB)" transform="rotate(-15 1488 1599)"/><ellipse cx="1468" cy="1487" rx="10.4" ry="9.5" fill="url(#gB)" transform="rotate(50 1468 1487)"/><ellipse cx="1509" cy="1903" rx="7.4" ry="6.9" fill="url(#gB)" transform="rotate(19 1509 1903)"/><ellipse cx="1134" cy="1760" rx="7.9" ry="6.4" fill="url(#gB)" transform="rotate(-8 1134 1760)"/><ellipse cx="1657" cy="1591" rx="14.6" ry="9.5" fill="url(#gY)" transform="rotate(-34 1657 1591)"/><ellipse cx="1489" cy="1536" rx="9.1" ry="6.1" fill="url(#gC)" transform="rotate(50 1489 1536)"/><ellipse cx="1650" cy="1562" rx="10.4" ry="6.9" fill="url(#gC)" transform="rotate(58 1650 1562)"/><ellipse cx="1401" cy="1692" rx="9.7" ry="6.6" fill="url(#gG)" transform="rotate(-50 1401 1692)"/><ellipse cx="1361" cy="2020" rx="9.1" ry="7.6" fill="url(#gG)" transform="rotate(-49 1361 2020)"/><ellipse cx="1229" cy="2030" rx="9.3" ry="8.0" fill="url(#gR)" transform="rotate(-4 1229 2030)"/><ellipse cx="1322" cy="1761" rx="8.2" ry="6.6" fill="url(#gB)" transform="rotate(48 1322 1761)"/><ellipse cx="1249" cy="1612" rx="15.0" ry="9.5" fill="url(#gB)" transform="rotate(25 1249 1612)"/><ellipse cx="1365" cy="1465" rx="10.0" ry="7.6" fill="url(#gY)" transform="rotate(44 1365 1465)"/><ellipse cx="1506" cy="1930" rx="10.3" ry="9.8" fill="url(#gB)" transform="rotate(-55 1506 1930)"/><ellipse cx="1490" cy="1534" rx="9.9" ry="6.5" fill="url(#gB)" transform="rotate(4 1490 1534)"/><ellipse cx="1499" cy="1618" rx="13.9" ry="9.2" fill="url(#gY)" transform="rotate(21 1499 1618)"/><ellipse cx="1252" cy="1722" rx="8.4" ry="6.3" fill="url(#gG)" transform="rotate(-14 1252 1722)"/><ellipse cx="1437" cy="1487" rx="12.6" ry="8.7" fill="url(#gG)" transform="rotate(53 1437 1487)"/><ellipse cx="1535" cy="1758" rx="11.3" ry="8.6" fill="url(#gB)" transform="rotate(-31 1535 1758)"/><ellipse cx="1041" cy="2045" rx="11.9" ry="9.6" fill="url(#gB)" transform="rotate(-25 1041 2045)"/><ellipse cx="1509" cy="1823" rx="9.8" ry="6.5" fill="url(#gB)" transform="rotate(-20 1509 1823)"/><ellipse cx="1699" cy="1902" rx="11.4" ry="8.6" fill="url(#gG)" transform="rotate(-12 1699 1902)"/><ellipse cx="1585" cy="2051" rx="7.1" ry="6.8" fill="url(#gG)" transform="rotate(50 1585 2051)"/><ellipse cx="1436" cy="1743" rx="9.9" ry="7.1" fill="url(#gG)" transform="rotate(27 1436 1743)"/><ellipse cx="1755" cy="1863" rx="7.6" ry="6.4" fill="url(#gG)" transform="rotate(54 1755 1863)"/><ellipse cx="1767" cy="1851" rx="8.9" ry="6.9" fill="url(#gB)" transform="rotate(-12 1767 1851)"/><ellipse cx="1509" cy="1594" rx="6.7" ry="6.6" fill="url(#gB)" transform="rotate(22 1509 1594)"/><ellipse cx="1269" cy="1775" rx="8.5" ry="6.1" fill="url(#gG)" transform="rotate(17 1269 1775)"/><ellipse cx="1465" cy="1737" rx="9.1" ry="8.5" fill="url(#gY)" transform="rotate(-6 1465 1737)"/><ellipse cx="1707" cy="1892" rx="11.3" ry="8.9" fill="url(#gY)" transform="rotate(-57 1707 1892)"/><ellipse cx="1247" cy="1363" rx="9.0" ry="8.9" fill="url(#gC)" transform="rotate(3 1247 1363)"/><ellipse cx="1599" cy="1827" rx="8.0" ry="7.5" fill="url(#gC)" transform="rotate(22 1599 1827)"/><ellipse cx="1127" cy="1675" rx="8.1" ry="7.1" fill="url(#gB)" transform="rotate(36 1127 1675)"/><ellipse cx="1158" cy="2039" rx="10.0" ry="8.4" fill="url(#gB)" transform="rotate(-16 1158 2039)"/><ellipse cx="1144" cy="1766" rx="10.8" ry="8.9" fill="url(#gB)" transform="rotate(27 1144 1766)"/><ellipse cx="1058" cy="1886" rx="12.8" ry="9.5" fill="url(#gG)" transform="rotate(45 1058 1886)"/><ellipse cx="1404" cy="1974" rx="11.7" ry="9.8" fill="url(#gC)" transform="rotate(49 1404 1974)"/><ellipse cx="1768" cy="2078" rx="10.1" ry="8.9" fill="url(#gG)" transform="rotate(41 1768 2078)"/><ellipse cx="1280" cy="1333" rx="13.9" ry="9.3" fill="url(#gC)" transform="rotate(25 1280 1333)"/><ellipse cx="1534" cy="1693" rx="7.1" ry="6.2" fill="url(#gY)" transform="rotate(-50 1534 1693)"/><ellipse cx="1296" cy="1469" rx="8.8" ry="7.4" fill="url(#gG)" transform="rotate(-6 1296 1469)"/><ellipse cx="1727" cy="1941" rx="10.9" ry="6.9" fill="url(#gC)" transform="rotate(-31 1727 1941)"/><ellipse cx="1138" cy="1408" rx="13.0" ry="9.2" fill="url(#gY)" transform="rotate(-8 1138 1408)"/><ellipse cx="1369" cy="1894" rx="8.5" ry="8.1" fill="url(#gC)" transform="rotate(58 1369 1894)"/><ellipse cx="1054" cy="1953" rx="9.9" ry="8.7" fill="url(#gB)" transform="rotate(-47 1054 1953)"/><ellipse cx="1084" cy="1767" rx="8.4" ry="7.7" fill="url(#gB)" transform="rotate(-55 1084 1767)"/><ellipse cx="1252" cy="1884" rx="12.5" ry="9.2" fill="url(#gC)" transform="rotate(-59 1252 1884)"/><ellipse cx="1594" cy="2009" rx="9.8" ry="6.8" fill="url(#gB)" transform="rotate(-35 1594 2009)"/><ellipse cx="1209" cy="1711" rx="7.7" ry="6.6" fill="url(#gY)" transform="rotate(41 1209 1711)"/><ellipse cx="1686" cy="1939" rx="8.1" ry="7.4" fill="url(#gY)" transform="rotate(34 1686 1939)"/><ellipse cx="1212" cy="1974" rx="15.2" ry="9.6" fill="url(#gY)" transform="rotate(39 1212 1974)"/><ellipse cx="1228" cy="2012" rx="9.7" ry="8.2" fill="url(#gB)" transform="rotate(-40 1228 2012)"/><ellipse cx="1449" cy="1865" rx="11.6" ry="7.7" fill="url(#gG)" transform="rotate(-51 1449 1865)"/><ellipse cx="1607" cy="1802" rx="8.5" ry="6.9" fill="url(#gB)" transform="rotate(14 1607 1802)"/><ellipse cx="1397" cy="1980" rx="10.2" ry="6.8" fill="url(#gG)" transform="rotate(11 1397 1980)"/><ellipse cx="1614" cy="1803" rx="11.5" ry="8.8" fill="url(#gG)" transform="rotate(-22 1614 1803)"/><ellipse cx="1463" cy="2086" rx="10.4" ry="7.3" fill="url(#gG)" transform="rotate(27 1463 2086)"/><ellipse cx="1097" cy="2058" rx="11.8" ry="7.9" fill="url(#gY)" transform="rotate(-7 1097 2058)"/><ellipse cx="1578" cy="2051" rx="11.1" ry="7.6" fill="url(#gC)" transform="rotate(-13 1578 2051)"/><ellipse cx="1308" cy="1705" rx="9.8" ry="8.9" fill="url(#gY)" transform="rotate(13 1308 1705)"/><ellipse cx="1374" cy="1721" rx="7.6" ry="7.4" fill="url(#gY)" transform="rotate(-42 1374 1721)"/><ellipse cx="1299" cy="1408" rx="10.8" ry="6.7" fill="url(#gB)" transform="rotate(-18 1299 1408)"/><ellipse cx="1171" cy="1515" rx="11.7" ry="7.5" fill="url(#gY)" transform="rotate(56 1171 1515)"/><ellipse cx="1637" cy="1770" rx="11.6" ry="9.6" fill="url(#gY)" transform="rotate(46 1637 1770)"/><ellipse cx="1302" cy="2000" rx="9.9" ry="6.4" fill="url(#gY)" transform="rotate(37 1302 2000)"/><ellipse cx="1664" cy="1928" rx="8.9" ry="7.5" fill="url(#gB)" transform="rotate(-5 1664 1928)"/><ellipse cx="1386" cy="2063" rx="8.7" ry="6.2" fill="url(#gB)" transform="rotate(25 1386 2063)"/><ellipse cx="1591" cy="1668" rx="10.0" ry="6.4" fill="url(#gB)" transform="rotate(-6 1591 1668)"/><ellipse cx="1525" cy="2054" rx="10.7" ry="7.4" fill="url(#gR)" transform="rotate(-53 1525 2054)"/><ellipse cx="1097" cy="1851" rx="12.6" ry="8.3" fill="url(#gC)" transform="rotate(-24 1097 1851)"/><ellipse cx="1337" cy="1780" rx="10.9" ry="7.6" fill="url(#gY)" transform="rotate(-58 1337 1780)"/><ellipse cx="1738" cy="1885" rx="12.4" ry="10.0" fill="url(#gG)" transform="rotate(-2 1738 1885)"/><ellipse cx="1343" cy="1983" rx="10.8" ry="8.3" fill="url(#gC)" transform="rotate(2 1343 1983)"/><ellipse cx="1632" cy="1689" rx="10.2" ry="6.4" fill="url(#gC)" transform="rotate(41 1632 1689)"/><ellipse cx="1127" cy="1934" rx="9.3" ry="7.6" fill="url(#gY)" transform="rotate(-53 1127 1934)"/><ellipse cx="1143" cy="1484" rx="10.0" ry="8.9" fill="url(#gG)" transform="rotate(38 1143 1484)"/><ellipse cx="1449" cy="1557" rx="13.5" ry="9.4" fill="url(#gC)" transform="rotate(4 1449 1557)"/><ellipse cx="1141" cy="1887" rx="14.2" ry="9.8" fill="url(#gY)" transform="rotate(-35 1141 1887)"/><ellipse cx="1308" cy="1411" rx="8.6" ry="6.7" fill="url(#gB)" transform="rotate(-4 1308 1411)"/><ellipse cx="1153" cy="1512" rx="8.5" ry="7.1" fill="url(#gC)" transform="rotate(-3 1153 1512)"/><ellipse cx="1307" cy="1818" rx="9.0" ry="8.4" fill="url(#gB)" transform="rotate(9 1307 1818)"/><ellipse cx="1446" cy="1591" rx="13.6" ry="9.8" fill="url(#gG)" transform="rotate(5 1446 1591)"/><ellipse cx="1455" cy="1569" rx="13.9" ry="9.5" fill="url(#gG)" transform="rotate(42 1455 1569)"/><ellipse cx="1547" cy="2005" rx="13.8" ry="10.0" fill="url(#gG)" transform="rotate(-6 1547 2005)"/><ellipse cx="1053" cy="1978" rx="10.2" ry="8.4" fill="url(#gY)" transform="rotate(-19 1053 1978)"/><ellipse cx="1816" cy="2068" rx="10.0" ry="6.4" fill="url(#gG)" transform="rotate(-52 1816 2068)"/><ellipse cx="1624" cy="1578" rx="8.1" ry="7.4" fill="url(#gY)" transform="rotate(-14 1624 1578)"/><ellipse cx="1371" cy="1862" rx="7.4" ry="6.6" fill="url(#gC)" transform="rotate(18 1371 1862)"/><ellipse cx="1345" cy="1588" rx="12.1" ry="7.7" fill="url(#gC)" transform="rotate(22 1345 1588)"/><ellipse cx="1521" cy="1901" rx="10.4" ry="7.8" fill="url(#gC)" transform="rotate(2 1521 1901)"/><ellipse cx="1230" cy="2017" rx="8.6" ry="7.0" fill="url(#gB)" transform="rotate(0 1230 2017)"/><ellipse cx="1654" cy="1766" rx="11.5" ry="8.0" fill="url(#gB)" transform="rotate(-20 1654 1766)"/><ellipse cx="1520" cy="1444" rx="9.7" ry="8.6" fill="url(#gB)" transform="rotate(-37 1520 1444)"/><ellipse cx="1553" cy="2082" rx="7.5" ry="7.3" fill="url(#gB)" transform="rotate(8 1553 2082)"/><ellipse cx="1520" cy="1514" rx="13.0" ry="9.2" fill="url(#gB)" transform="rotate(-38 1520 1514)"/><ellipse cx="1550" cy="1744" rx="11.2" ry="8.3" fill="url(#gR)" transform="rotate(-4 1550 1744)"/><ellipse cx="1361" cy="1774" rx="8.0" ry="7.4" fill="url(#gG)" transform="rotate(-44 1361 1774)"/><ellipse cx="1215" cy="1427" rx="12.7" ry="8.7" fill="url(#gB)" transform="rotate(50 1215 1427)"/><ellipse cx="1705" cy="1751" rx="10.7" ry="9.1" fill="url(#gC)" transform="rotate(11 1705 1751)"/><ellipse cx="1228" cy="1377" rx="9.0" ry="7.2" fill="url(#gC)" transform="rotate(4 1228 1377)"/><ellipse cx="1592" cy="1882" rx="9.5" ry="7.9" fill="url(#gG)" transform="rotate(3 1592 1882)"/><ellipse cx="1492" cy="1720" rx="9.3" ry="8.5" fill="url(#gG)" transform="rotate(-29 1492 1720)"/><ellipse cx="1521" cy="2051" rx="10.1" ry="9.2" fill="url(#gB)" transform="rotate(2 1521 2051)"/><ellipse cx="1752" cy="1790" rx="10.9" ry="8.0" fill="url(#gC)" transform="rotate(9 1752 1790)"/><ellipse cx="1598" cy="1970" rx="11.2" ry="9.4" fill="url(#gY)" transform="rotate(17 1598 1970)"/><ellipse cx="1366" cy="1605" rx="9.2" ry="7.3" fill="url(#gB)" transform="rotate(52 1366 1605)"/><ellipse cx="1396" cy="1531" rx="7.9" ry="6.5" fill="url(#gB)" transform="rotate(-44 1396 1531)"/><ellipse cx="1753" cy="1873" rx="8.9" ry="7.1" fill="url(#gG)" transform="rotate(-23 1753 1873)"/><ellipse cx="1170" cy="2074" rx="9.3" ry="6.2" fill="url(#gC)" transform="rotate(28 1170 2074)"/><ellipse cx="1719" cy="1909" rx="12.9" ry="8.2" fill="url(#gC)" transform="rotate(-2 1719 1909)"/><ellipse cx="1098" cy="2081" rx="9.3" ry="6.4" fill="url(#gC)" transform="rotate(18 1098 2081)"/><ellipse cx="1580" cy="1538" rx="10.4" ry="9.9" fill="url(#gB)" transform="rotate(-50 1580 1538)"/><ellipse cx="1228" cy="1512" rx="11.5" ry="7.5" fill="url(#gY)" transform="rotate(53 1228 1512)"/><ellipse cx="1419" cy="1592" rx="8.8" ry="7.1" fill="url(#gB)" transform="rotate(-53 1419 1592)"/><ellipse cx="1507" cy="1707" rx="8.8" ry="7.8" fill="url(#gC)" transform="rotate(39 1507 1707)"/><ellipse cx="1129" cy="1898" rx="9.2" ry="7.5" fill="url(#gG)" transform="rotate(28 1129 1898)"/><ellipse cx="1531" cy="1516" rx="11.2" ry="7.9" fill="url(#gB)" transform="rotate(-25 1531 1516)"/><ellipse cx="1177" cy="1652" rx="6.9" ry="6.5" fill="url(#gC)" transform="rotate(-38 1177 1652)"/><ellipse cx="1537" cy="1572" rx="9.8" ry="8.5" fill="url(#gG)" transform="rotate(-31 1537 1572)"/><ellipse cx="1102" cy="1896" rx="10.7" ry="8.3" fill="url(#gG)" transform="rotate(23 1102 1896)"/><ellipse cx="1098" cy="1896" rx="11.5" ry="8.8" fill="url(#gC)" transform="rotate(-28 1098 1896)"/><ellipse cx="1304" cy="1647" rx="14.6" ry="9.4" fill="url(#gB)" transform="rotate(-57 1304 1647)"/><ellipse cx="1575" cy="1478" rx="13.5" ry="9.1" fill="url(#gC)" transform="rotate(-9 1575 1478)"/><ellipse cx="1226" cy="1521" rx="8.9" ry="6.1" fill="url(#gG)" transform="rotate(-60 1226 1521)"/><ellipse cx="1659" cy="1948" rx="7.6" ry="7.4" fill="url(#gB)" transform="rotate(55 1659 1948)"/><ellipse cx="1499" cy="1412" rx="10.4" ry="8.1" fill="url(#gB)" transform="rotate(-0 1499 1412)"/><ellipse cx="1221" cy="1846" rx="7.0" ry="6.8" fill="url(#gG)" transform="rotate(45 1221 1846)"/><ellipse cx="1458" cy="1499" rx="9.1" ry="7.5" fill="url(#gG)" transform="rotate(52 1458 1499)"/><ellipse cx="1304" cy="1635" rx="9.0" ry="8.5" fill="url(#gB)" transform="rotate(-16 1304 1635)"/><ellipse cx="1536" cy="1878" rx="11.7" ry="7.7" fill="url(#gG)" transform="rotate(49 1536 1878)"/><ellipse cx="1277" cy="1451" rx="12.3" ry="8.0" fill="url(#gY)" transform="rotate(-53 1277 1451)"/><ellipse cx="1342" cy="1688" rx="11.0" ry="7.5" fill="url(#gC)" transform="rotate(41 1342 1688)"/><ellipse cx="1301" cy="1785" rx="9.8" ry="6.4" fill="url(#gY)" transform="rotate(26 1301 1785)"/><ellipse cx="1571" cy="1839" rx="11.1" ry="10.0" fill="url(#gB)" transform="rotate(0 1571 1839)"/><ellipse cx="1046" cy="2011" rx="8.2" ry="7.6" fill="url(#gC)" transform="rotate(-57 1046 2011)"/><ellipse cx="1230" cy="1452" rx="10.4" ry="7.7" fill="url(#gG)" transform="rotate(16 1230 1452)"/><ellipse cx="1504" cy="1588" rx="12.0" ry="7.8" fill="url(#gG)" transform="rotate(-51 1504 1588)"/><ellipse cx="1442" cy="1670" rx="14.1" ry="9.4" fill="url(#gC)" transform="rotate(-0 1442 1670)"/><ellipse cx="1599" cy="1780" rx="9.9" ry="6.8" fill="url(#gG)" transform="rotate(-26 1599 1780)"/><ellipse cx="1496" cy="1699" rx="7.9" ry="6.1" fill="url(#gC)" transform="rotate(27 1496 1699)"/><ellipse cx="1292" cy="1870" rx="7.8" ry="6.5" fill="url(#gG)" transform="rotate(-56 1292 1870)"/><ellipse cx="1477" cy="1898" rx="9.0" ry="7.6" fill="url(#gG)" transform="rotate(22 1477 1898)"/><ellipse cx="1098" cy="1819" rx="7.4" ry="7.1" fill="url(#gB)" transform="rotate(59 1098 1819)"/><ellipse cx="1243" cy="1435" rx="12.8" ry="9.8" fill="url(#gY)" transform="rotate(5 1243 1435)"/><ellipse cx="1106" cy="1993" rx="7.6" ry="7.2" fill="url(#gG)" transform="rotate(32 1106 1993)"/><ellipse cx="1388" cy="1933" rx="8.6" ry="6.4" fill="url(#gB)" transform="rotate(-12 1388 1933)"/><ellipse cx="1564" cy="1619" rx="13.0" ry="8.9" fill="url(#gB)" transform="rotate(-44 1564 1619)"/><ellipse cx="1215" cy="1770" rx="8.5" ry="7.5" fill="url(#gC)" transform="rotate(45 1215 1770)"/><ellipse cx="1139" cy="1763" rx="7.1" ry="6.4" fill="url(#gG)" transform="rotate(54 1139 1763)"/><ellipse cx="1483" cy="1733" rx="9.2" ry="6.2" fill="url(#gB)" transform="rotate(59 1483 1733)"/><ellipse cx="1569" cy="1793" rx="12.8" ry="8.6" fill="url(#gC)" transform="rotate(14 1569 1793)"/><ellipse cx="1336" cy="1537" rx="7.6" ry="6.8" fill="url(#gY)" transform="rotate(36 1336 1537)"/><ellipse cx="1655" cy="1764" rx="14.3" ry="9.8" fill="url(#gY)" transform="rotate(54 1655 1764)"/><ellipse cx="1758" cy="1910" rx="13.6" ry="9.4" fill="url(#gG)" transform="rotate(-53 1758 1910)"/><ellipse cx="1359" cy="1524" rx="10.5" ry="7.0" fill="url(#gB)" transform="rotate(27 1359 1524)"/><ellipse cx="1300" cy="1876" rx="8.9" ry="6.6" fill="url(#gC)" transform="rotate(-54 1300 1876)"/><ellipse cx="1343" cy="1838" rx="9.6" ry="8.5" fill="url(#gG)" transform="rotate(-52 1343 1838)"/><ellipse cx="1331" cy="1321" rx="9.9" ry="9.7" fill="url(#gC)" transform="rotate(-6 1331 1321)"/><ellipse cx="1588" cy="2011" rx="8.7" ry="8.6" fill="url(#gG)" transform="rotate(24 1588 2011)"/><ellipse cx="1546" cy="1967" rx="6.7" ry="6.5" fill="url(#gB)" transform="rotate(54 1546 1967)"/><ellipse cx="1108" cy="1853" rx="12.5" ry="8.5" fill="url(#gB)" transform="rotate(-10 1108 1853)"/><ellipse cx="1046" cy="2037" rx="10.6" ry="7.7" fill="url(#gY)" transform="rotate(-41 1046 2037)"/><ellipse cx="1192" cy="1400" rx="13.6" ry="8.6" fill="url(#gC)" transform="rotate(10 1192 1400)"/><ellipse cx="1066" cy="1903" rx="10.2" ry="8.8" fill="url(#gY)" transform="rotate(-49 1066 1903)"/><ellipse cx="1286" cy="1378" rx="9.2" ry="8.0" fill="url(#gC)" transform="rotate(-30 1286 1378)"/><ellipse cx="1808" cy="1970" rx="9.7" ry="7.0" fill="url(#gG)" transform="rotate(-17 1808 1970)"/><ellipse cx="1689" cy="1652" rx="8.6" ry="7.3" fill="url(#gC)" transform="rotate(-11 1689 1652)"/><ellipse cx="1134" cy="1579" rx="12.5" ry="8.9" fill="url(#gY)" transform="rotate(51 1134 1579)"/><ellipse cx="1435" cy="1494" rx="12.5" ry="8.5" fill="url(#gC)" transform="rotate(-43 1435 1494)"/><ellipse cx="1585" cy="2029" rx="9.4" ry="6.1" fill="url(#gC)" transform="rotate(-49 1585 2029)"/><ellipse cx="1481" cy="1862" rx="7.1" ry="7.0" fill="url(#gC)" transform="rotate(25 1481 1862)"/><ellipse cx="1261" cy="1640" rx="9.8" ry="7.3" fill="url(#gG)" transform="rotate(-43 1261 1640)"/><ellipse cx="1237" cy="1389" rx="11.6" ry="7.4" fill="url(#gG)" transform="rotate(32 1237 1389)"/><ellipse cx="1712" cy="2016" rx="6.9" ry="6.1" fill="url(#gB)" transform="rotate(32 1712 2016)"/><ellipse cx="1195" cy="2017" rx="7.2" ry="6.7" fill="url(#gY)" transform="rotate(2 1195 2017)"/><ellipse cx="1577" cy="1611" rx="8.3" ry="6.5" fill="url(#gG)" transform="rotate(-8 1577 1611)"/><ellipse cx="1698" cy="1831" rx="8.9" ry="8.5" fill="url(#gY)" transform="rotate(26 1698 1831)"/><ellipse cx="1822" cy="1999" rx="9.0" ry="7.3" fill="url(#gG)" transform="rotate(49 1822 1999)"/><ellipse cx="1547" cy="1917" rx="8.4" ry="8.3" fill="url(#gB)" transform="rotate(-24 1547 1917)"/><ellipse cx="1571" cy="1717" rx="9.8" ry="6.5" fill="url(#gG)" transform="rotate(1 1571 1717)"/><ellipse cx="1509" cy="1945" rx="8.2" ry="7.6" fill="url(#gC)" transform="rotate(45 1509 1945)"/><ellipse cx="1602" cy="1843" rx="8.8" ry="8.1" fill="url(#gG)" transform="rotate(5 1602 1843)"/><ellipse cx="1172" cy="1383" rx="12.7" ry="9.7" fill="url(#gY)" transform="rotate(3 1172 1383)"/><ellipse cx="1212" cy="1825" rx="7.6" ry="6.6" fill="url(#gC)" transform="rotate(-32 1212 1825)"/><ellipse cx="1650" cy="2002" rx="11.2" ry="8.6" fill="url(#gC)" transform="rotate(7 1650 2002)"/><ellipse cx="1150" cy="1418" rx="10.4" ry="6.8" fill="url(#gG)" transform="rotate(21 1150 1418)"/><ellipse cx="1349" cy="1964" rx="10.1" ry="9.8" fill="url(#gG)" transform="rotate(33 1349 1964)"/><ellipse cx="1361" cy="1459" rx="13.9" ry="9.9" fill="url(#gC)" transform="rotate(-12 1361 1459)"/><ellipse cx="1375" cy="1568" rx="12.1" ry="7.7" fill="url(#gB)" transform="rotate(30 1375 1568)"/><ellipse cx="1109" cy="2065" rx="10.8" ry="8.3" fill="url(#gB)" transform="rotate(-30 1109 2065)"/><ellipse cx="1277" cy="1557" rx="6.7" ry="6.2" fill="url(#gB)" transform="rotate(30 1277 1557)"/><ellipse cx="1516" cy="1735" rx="10.8" ry="7.5" fill="url(#gY)" transform="rotate(44 1516 1735)"/><ellipse cx="1268" cy="1678" rx="6.4" ry="6.4" fill="url(#gC)" transform="rotate(18 1268 1678)"/><ellipse cx="1342" cy="1879" rx="12.7" ry="9.9" fill="url(#gC)" transform="rotate(-54 1342 1879)"/><ellipse cx="1291" cy="1392" rx="11.1" ry="9.1" fill="url(#gC)" transform="rotate(51 1291 1392)"/><ellipse cx="1301" cy="1811" rx="9.0" ry="8.0" fill="url(#gB)" transform="rotate(48 1301 1811)"/><ellipse cx="1694" cy="1675" rx="10.5" ry="7.8" fill="url(#gG)" transform="rotate(29 1694 1675)"/><ellipse cx="1273" cy="1631" rx="11.0" ry="8.9" fill="url(#gB)" transform="rotate(44 1273 1631)"/><ellipse cx="1630" cy="1608" rx="8.5" ry="6.7" fill="url(#gG)" transform="rotate(-36 1630 1608)"/><ellipse cx="1668" cy="1742" rx="11.5" ry="8.2" fill="url(#gB)" transform="rotate(16 1668 1742)"/><ellipse cx="1080" cy="1973" rx="7.7" ry="6.1" fill="url(#gY)" transform="rotate(-30 1080 1973)"/><ellipse cx="1352" cy="1458" rx="9.9" ry="7.2" fill="url(#gC)" transform="rotate(-37 1352 1458)"/><ellipse cx="1712" cy="1775" rx="10.8" ry="7.4" fill="url(#gY)" transform="rotate(-42 1712 1775)"/><ellipse cx="1205" cy="1708" rx="9.8" ry="6.8" fill="url(#gG)" transform="rotate(-3 1205 1708)"/><ellipse cx="1070" cy="2069" rx="9.2" ry="6.8" fill="url(#gG)" transform="rotate(44 1070 2069)"/><ellipse cx="1434" cy="1931" rx="8.1" ry="6.5" fill="url(#gB)" transform="rotate(10 1434 1931)"/><ellipse cx="1020" cy="2041" rx="10.1" ry="7.4" fill="url(#gY)" transform="rotate(44 1020 2041)"/><ellipse cx="1292" cy="2022" rx="10.2" ry="6.5" fill="url(#gY)" transform="rotate(56 1292 2022)"/><ellipse cx="1713" cy="1804" rx="12.9" ry="8.4" fill="url(#gB)" transform="rotate(18 1713 1804)"/><ellipse cx="1730" cy="1774" rx="9.8" ry="7.3" fill="url(#gG)" transform="rotate(-47 1730 1774)"/><ellipse cx="1156" cy="1875" rx="8.8" ry="7.2" fill="url(#gC)" transform="rotate(-35 1156 1875)"/><ellipse cx="1534" cy="1434" rx="11.3" ry="9.9" fill="url(#gY)" transform="rotate(-5 1534 1434)"/><ellipse cx="1584" cy="1779" rx="10.3" ry="8.4" fill="url(#gB)" transform="rotate(-50 1584 1779)"/><ellipse cx="1383" cy="1878" rx="8.6" ry="7.1" fill="url(#gB)" transform="rotate(18 1383 1878)"/><ellipse cx="1048" cy="2028" rx="8.3" ry="6.0" fill="url(#gC)" transform="rotate(41 1048 2028)"/><ellipse cx="1195" cy="1510" rx="9.0" ry="6.6" fill="url(#gC)" transform="rotate(-13 1195 1510)"/><ellipse cx="1134" cy="1687" rx="11.4" ry="8.3" fill="url(#gY)" transform="rotate(54 1134 1687)"/><ellipse cx="1229" cy="1534" rx="12.8" ry="10.0" fill="url(#gB)" transform="rotate(-11 1229 1534)"/><ellipse cx="1631" cy="1814" rx="11.2" ry="7.2" fill="url(#gG)" transform="rotate(33 1631 1814)"/><ellipse cx="1383" cy="1833" rx="8.6" ry="6.7" fill="url(#gC)" transform="rotate(-16 1383 1833)"/><ellipse cx="1620" cy="1799" rx="9.4" ry="8.6" fill="url(#gG)" transform="rotate(24 1620 1799)"/><ellipse cx="1237" cy="1590" rx="14.8" ry="9.7" fill="url(#gG)" transform="rotate(-14 1237 1590)"/><ellipse cx="1495" cy="1621" rx="11.8" ry="8.0" fill="url(#gG)" transform="rotate(53 1495 1621)"/><ellipse cx="1377" cy="1368" rx="7.9" ry="7.0" fill="url(#gB)" transform="rotate(30 1377 1368)"/><ellipse cx="1573" cy="1857" rx="8.8" ry="7.9" fill="url(#gC)" transform="rotate(54 1573 1857)"/><ellipse cx="1513" cy="1489" rx="12.2" ry="9.6" fill="url(#gY)" transform="rotate(-46 1513 1489)"/><ellipse cx="1371" cy="1429" rx="8.2" ry="7.0" fill="url(#gY)" transform="rotate(-24 1371 1429)"/><ellipse cx="1342" cy="1320" rx="12.4" ry="7.8" fill="url(#gG)" transform="rotate(-3 1342 1320)"/><ellipse cx="1095" cy="1984" rx="7.0" ry="6.7" fill="url(#gB)" transform="rotate(-31 1095 1984)"/><ellipse cx="1162" cy="1402" rx="13.3" ry="9.1" fill="url(#gY)" transform="rotate(13 1162 1402)"/><ellipse cx="1071" cy="1999" rx="7.9" ry="7.0" fill="url(#gR)" transform="rotate(-21 1071 1999)"/><ellipse cx="1255" cy="1727" rx="10.7" ry="7.5" fill="url(#gB)" transform="rotate(32 1255 1727)"/><ellipse cx="1136" cy="1550" rx="7.5" ry="6.8" fill="url(#gB)" transform="rotate(40 1136 1550)"/><ellipse cx="1300" cy="1322" rx="8.2" ry="7.0" fill="url(#gB)" transform="rotate(-8 1300 1322)"/><ellipse cx="1743" cy="1848" rx="10.8" ry="8.8" fill="url(#gY)" transform="rotate(39 1743 1848)"/><ellipse cx="1770" cy="2065" rx="10.1" ry="8.6" fill="url(#gG)" transform="rotate(3 1770 2065)"/><ellipse cx="1090" cy="2010" rx="8.9" ry="7.0" fill="url(#gB)" transform="rotate(2 1090 2010)"/><ellipse cx="1446" cy="1698" rx="11.4" ry="8.0" fill="url(#gB)" transform="rotate(44 1446 1698)"/><ellipse cx="1233" cy="1493" rx="10.4" ry="8.2" fill="url(#gG)" transform="rotate(32 1233 1493)"/><ellipse cx="1551" cy="1854" rx="9.3" ry="7.6" fill="url(#gB)" transform="rotate(-16 1551 1854)"/><ellipse cx="1304" cy="1410" rx="10.2" ry="9.2" fill="url(#gB)" transform="rotate(-22 1304 1410)"/><ellipse cx="1587" cy="1856" rx="12.9" ry="9.2" fill="url(#gY)" transform="rotate(-32 1587 1856)"/><ellipse cx="1689" cy="1740" rx="9.0" ry="7.5" fill="url(#gC)" transform="rotate(-47 1689 1740)"/><ellipse cx="1136" cy="1875" rx="9.2" ry="7.4" fill="url(#gC)" transform="rotate(-14 1136 1875)"/><ellipse cx="1232" cy="1799" rx="11.0" ry="9.5" fill="url(#gC)" transform="rotate(-60 1232 1799)"/><ellipse cx="1310" cy="1363" rx="7.5" ry="7.1" fill="url(#gY)" transform="rotate(29 1310 1363)"/><ellipse cx="1307" cy="1565" rx="10.3" ry="7.6" fill="url(#gC)" transform="rotate(48 1307 1565)"/><ellipse cx="1525" cy="1680" rx="9.8" ry="9.2" fill="url(#gG)" transform="rotate(56 1525 1680)"/><ellipse cx="1266" cy="1827" rx="9.8" ry="6.6" fill="url(#gC)" transform="rotate(-18 1266 1827)"/><ellipse cx="1728" cy="1725" rx="9.1" ry="7.2" fill="url(#gG)" transform="rotate(-18 1728 1725)"/><ellipse cx="1184" cy="1859" rx="11.6" ry="7.5" fill="url(#gY)" transform="rotate(10 1184 1859)"/><ellipse cx="1548" cy="1463" rx="8.8" ry="8.3" fill="url(#gG)" transform="rotate(-25 1548 1463)"/><ellipse cx="1262" cy="2044" rx="7.3" ry="6.0" fill="url(#gY)" transform="rotate(-1 1262 2044)"/><ellipse cx="1602" cy="1507" rx="12.3" ry="9.4" fill="url(#gB)" transform="rotate(41 1602 1507)"/><ellipse cx="1316" cy="1456" rx="8.5" ry="7.2" fill="url(#gG)" transform="rotate(35 1316 1456)"/><ellipse cx="1528" cy="1589" rx="11.9" ry="8.4" fill="url(#gB)" transform="rotate(13 1528 1589)"/><ellipse cx="1640" cy="1735" rx="12.5" ry="8.9" fill="url(#gC)" transform="rotate(44 1640 1735)"/><ellipse cx="1373" cy="1890" rx="9.3" ry="6.3" fill="url(#gC)" transform="rotate(13 1373 1890)"/><ellipse cx="1637" cy="2071" rx="10.1" ry="9.7" fill="url(#gB)" transform="rotate(-48 1637 2071)"/><ellipse cx="975" cy="2088" rx="8.5" ry="8.1" fill="url(#gY)" transform="rotate(-56 975 2088)"/><ellipse cx="1320" cy="1361" rx="9.2" ry="8.3" fill="url(#gY)" transform="rotate(-13 1320 1361)"/><ellipse cx="1132" cy="1855" rx="12.4" ry="9.9" fill="url(#gY)" transform="rotate(4 1132 1855)"/><ellipse cx="1242" cy="2068" rx="11.8" ry="8.9" fill="url(#gG)" transform="rotate(22 1242 2068)"/><ellipse cx="1316" cy="1917" rx="8.3" ry="6.8" fill="url(#gY)" transform="rotate(33 1316 1917)"/><ellipse cx="1376" cy="1439" rx="9.1" ry="6.0" fill="url(#gB)" transform="rotate(-41 1376 1439)"/><ellipse cx="1676" cy="1632" rx="10.6" ry="7.5" fill="url(#gB)" transform="rotate(-7 1676 1632)"/><ellipse cx="1370" cy="2067" rx="10.3" ry="6.8" fill="url(#gB)" transform="rotate(-7 1370 2067)"/><ellipse cx="1121" cy="1996" rx="7.1" ry="6.4" fill="url(#gG)" transform="rotate(14 1121 1996)"/><ellipse cx="1157" cy="1731" rx="10.4" ry="8.4" fill="url(#gC)" transform="rotate(57 1157 1731)"/><ellipse cx="1300" cy="1971" rx="10.9" ry="10.0" fill="url(#gC)" transform="rotate(26 1300 1971)"/><ellipse cx="1448" cy="1791" rx="9.8" ry="7.0" fill="url(#gG)" transform="rotate(40 1448 1791)"/><ellipse cx="1488" cy="1937" rx="9.3" ry="6.8" fill="url(#gC)" transform="rotate(-46 1488 1937)"/><ellipse cx="1659" cy="1668" rx="14.2" ry="9.7" fill="url(#gG)" transform="rotate(2 1659 1668)"/><ellipse cx="1429" cy="1567" rx="7.2" ry="7.1" fill="url(#gG)" transform="rotate(54 1429 1567)"/><ellipse cx="1252" cy="1430" rx="8.1" ry="7.8" fill="url(#gR)" transform="rotate(-47 1252 1430)"/><ellipse cx="1642" cy="1747" rx="8.3" ry="6.6" fill="url(#gB)" transform="rotate(46 1642 1747)"/><ellipse cx="1777" cy="1849" rx="13.0" ry="9.2" fill="url(#gB)" transform="rotate(35 1777 1849)"/><ellipse cx="1707" cy="1863" rx="11.0" ry="8.3" fill="url(#gR)" transform="rotate(-9 1707 1863)"/><ellipse cx="1713" cy="2006" rx="10.7" ry="9.9" fill="url(#gB)" transform="rotate(46 1713 2006)"/><ellipse cx="1579" cy="1542" rx="11.1" ry="9.1" fill="url(#gC)" transform="rotate(9 1579 1542)"/><ellipse cx="1581" cy="1961" rx="8.3" ry="7.2" fill="url(#gY)" transform="rotate(-30 1581 1961)"/><ellipse cx="1644" cy="1603" rx="11.1" ry="7.6" fill="url(#gC)" transform="rotate(-42 1644 1603)"/><ellipse cx="1634" cy="1651" rx="8.6" ry="6.8" fill="url(#gG)" transform="rotate(18 1634 1651)"/><ellipse cx="1451" cy="2012" rx="9.2" ry="6.7" fill="url(#gB)" transform="rotate(-0 1451 2012)"/><ellipse cx="1174" cy="1986" rx="9.3" ry="8.3" fill="url(#gG)" transform="rotate(51 1174 1986)"/><ellipse cx="1365" cy="1845" rx="11.7" ry="7.5" fill="url(#gB)" transform="rotate(33 1365 1845)"/><ellipse cx="1210" cy="1589" rx="9.9" ry="6.5" fill="url(#gC)" transform="rotate(55 1210 1589)"/><ellipse cx="1426" cy="1717" rx="8.8" ry="8.5" fill="url(#gG)" transform="rotate(-32 1426 1717)"/><ellipse cx="1795" cy="1898" rx="9.2" ry="7.5" fill="url(#gY)" transform="rotate(-51 1795 1898)"/><ellipse cx="1466" cy="1676" rx="11.0" ry="8.1" fill="url(#gY)" transform="rotate(22 1466 1676)"/><ellipse cx="1376" cy="1553" rx="8.3" ry="6.1" fill="url(#gB)" transform="rotate(44 1376 1553)"/><ellipse cx="1329" cy="1635" rx="8.5" ry="6.3" fill="url(#gG)" transform="rotate(16 1329 1635)"/><ellipse cx="1263" cy="1337" rx="14.2" ry="9.8" fill="url(#gC)" transform="rotate(33 1263 1337)"/><ellipse cx="1833" cy="2075" rx="14.3" ry="9.1" fill="url(#gC)" transform="rotate(-55 1833 2075)"/><ellipse cx="1607" cy="1677" rx="13.3" ry="9.8" fill="url(#gR)" transform="rotate(-36 1607 1677)"/><ellipse cx="1334" cy="1451" rx="10.3" ry="6.9" fill="url(#gG)" transform="rotate(38 1334 1451)"/><ellipse cx="1188" cy="1436" rx="12.9" ry="8.8" fill="url(#gG)" transform="rotate(-55 1188 1436)"/><ellipse cx="1519" cy="1514" rx="10.6" ry="9.8" fill="url(#gC)" transform="rotate(-39 1519 1514)"/><ellipse cx="1153" cy="1556" rx="11.5" ry="7.2" fill="url(#gB)" transform="rotate(43 1153 1556)"/><ellipse cx="1263" cy="1392" rx="9.8" ry="6.5" fill="url(#gB)" transform="rotate(26 1263 1392)"/><ellipse cx="1317" cy="2055" rx="9.6" ry="7.1" fill="url(#gC)" transform="rotate(30 1317 2055)"/><ellipse cx="1196" cy="1857" rx="7.7" ry="6.0" fill="url(#gB)" transform="rotate(50 1196 1857)"/><ellipse cx="1347" cy="2047" rx="12.1" ry="8.6" fill="url(#gG)" transform="rotate(-13 1347 2047)"/><ellipse cx="1271" cy="1613" rx="7.2" ry="6.3" fill="url(#gG)" transform="rotate(12 1271 1613)"/><ellipse cx="1729" cy="1762" rx="11.8" ry="9.2" fill="url(#gB)" transform="rotate(-27 1729 1762)"/><ellipse cx="1344" cy="1933" rx="7.2" ry="6.6" fill="url(#gC)" transform="rotate(47 1344 1933)"/><ellipse cx="1619" cy="1530" rx="13.2" ry="8.4" fill="url(#gY)" transform="rotate(-21 1619 1530)"/><ellipse cx="1360" cy="1474" rx="7.9" ry="7.9" fill="url(#gB)" transform="rotate(-50 1360 1474)"/><ellipse cx="1609" cy="1562" rx="10.0" ry="7.2" fill="url(#gY)" transform="rotate(14 1609 1562)"/><ellipse cx="1219" cy="2052" rx="14.0" ry="9.6" fill="url(#gC)" transform="rotate(29 1219 2052)"/><ellipse cx="1240" cy="1845" rx="9.2" ry="6.7" fill="url(#gB)" transform="rotate(21 1240 1845)"/><ellipse cx="1237" cy="1564" rx="9.7" ry="6.4" fill="url(#gG)" transform="rotate(5 1237 1564)"/><ellipse cx="1459" cy="2053" rx="13.8" ry="9.9" fill="url(#gY)" transform="rotate(-7 1459 2053)"/><ellipse cx="1436" cy="1927" rx="6.9" ry="6.0" fill="url(#gB)" transform="rotate(-26 1436 1927)"/><ellipse cx="1404" cy="1649" rx="9.5" ry="9.1" fill="url(#gC)" transform="rotate(56 1404 1649)"/><ellipse cx="1328" cy="1924" rx="11.0" ry="7.5" fill="url(#gC)" transform="rotate(-3 1328 1924)"/><ellipse cx="1350" cy="2074" rx="12.8" ry="8.6" fill="url(#gB)" transform="rotate(57 1350 2074)"/><ellipse cx="1359" cy="1316" rx="7.9" ry="7.9" fill="url(#gG)" transform="rotate(26 1359 1316)"/><ellipse cx="1828" cy="1977" rx="12.1" ry="9.8" fill="url(#gB)" transform="rotate(-3 1828 1977)"/><ellipse cx="1100" cy="1728" rx="7.1" ry="6.6" fill="url(#gC)" transform="rotate(-31 1100 1728)"/><ellipse cx="1736" cy="1725" rx="11.9" ry="8.3" fill="url(#gB)" transform="rotate(35 1736 1725)"/><ellipse cx="1342" cy="2003" rx="8.5" ry="8.2" fill="url(#gY)" transform="rotate(-5 1342 2003)"/><ellipse cx="1151" cy="1539" rx="9.1" ry="7.1" fill="url(#gC)" transform="rotate(-33 1151 1539)"/><ellipse cx="1225" cy="1492" rx="9.8" ry="9.7" fill="url(#gG)" transform="rotate(23 1225 1492)"/><ellipse cx="1577" cy="1630" rx="11.4" ry="8.6" fill="url(#gC)" transform="rotate(44 1577 1630)"/><ellipse cx="1475" cy="1869" rx="6.8" ry="6.4" fill="url(#gC)" transform="rotate(19 1475 1869)"/><ellipse cx="1496" cy="1686" rx="12.2" ry="9.6" fill="url(#gG)" transform="rotate(-37 1496 1686)"/><ellipse cx="1287" cy="2016" rx="9.9" ry="8.0" fill="url(#gB)" transform="rotate(-27 1287 2016)"/><ellipse cx="1183" cy="1940" rx="10.3" ry="9.1" fill="url(#gB)" transform="rotate(-31 1183 1940)"/><ellipse cx="1582" cy="1657" rx="11.9" ry="7.9" fill="url(#gG)" transform="rotate(-59 1582 1657)"/><ellipse cx="1333" cy="1532" rx="10.1" ry="8.8" fill="url(#gC)" transform="rotate(-48 1333 1532)"/><ellipse cx="1486" cy="1639" rx="13.3" ry="9.0" fill="url(#gB)" transform="rotate(49 1486 1639)"/><ellipse cx="1681" cy="1906" rx="8.3" ry="7.0" fill="url(#gC)" transform="rotate(-12 1681 1906)"/><ellipse cx="1189" cy="1571" rx="11.9" ry="9.5" fill="url(#gB)" transform="rotate(-17 1189 1571)"/><ellipse cx="1272" cy="1516" rx="7.7" ry="7.0" fill="url(#gB)" transform="rotate(-33 1272 1516)"/><ellipse cx="1211" cy="2040" rx="13.8" ry="9.0" fill="url(#gC)" transform="rotate(-37 1211 2040)"/><ellipse cx="1408" cy="1550" rx="14.5" ry="9.5" fill="url(#gY)" transform="rotate(35 1408 1550)"/><ellipse cx="1721" cy="1688" rx="13.3" ry="8.6" fill="url(#gB)" transform="rotate(8 1721 1688)"/><ellipse cx="1321" cy="1791" rx="7.8" ry="6.6" fill="url(#gG)" transform="rotate(-15 1321 1791)"/><ellipse cx="1743" cy="2029" rx="11.5" ry="8.9" fill="url(#gC)" transform="rotate(-52 1743 2029)"/><ellipse cx="1445" cy="1712" rx="9.9" ry="6.7" fill="url(#gC)" transform="rotate(-18 1445 1712)"/><ellipse cx="1448" cy="1451" rx="11.4" ry="7.8" fill="url(#gY)" transform="rotate(48 1448 1451)"/><ellipse cx="1064" cy="1810" rx="10.4" ry="7.7" fill="url(#gC)" transform="rotate(-30 1064 1810)"/><ellipse cx="1297" cy="1350" rx="13.9" ry="8.9" fill="url(#gB)" transform="rotate(-33 1297 1350)"/><ellipse cx="1128" cy="1585" rx="11.7" ry="8.9" fill="url(#gG)" transform="rotate(14 1128 1585)"/><ellipse cx="1496" cy="1452" rx="6.4" ry="6.4" fill="url(#gC)" transform="rotate(28 1496 1452)"/><ellipse cx="1712" cy="1934" rx="11.9" ry="7.5" fill="url(#gC)" transform="rotate(-51 1712 1934)"/><ellipse cx="1552" cy="1530" rx="14.1" ry="9.8" fill="url(#gY)" transform="rotate(-22 1552 1530)"/><ellipse cx="1428" cy="1447" rx="9.1" ry="7.7" fill="url(#gB)" transform="rotate(-59 1428 1447)"/><ellipse cx="1345" cy="1948" rx="8.8" ry="7.2" fill="url(#gG)" transform="rotate(11 1345 1948)"/><ellipse cx="1309" cy="1321" rx="7.2" ry="6.3" fill="url(#gC)" transform="rotate(19 1309 1321)"/><ellipse cx="1250" cy="1882" rx="7.8" ry="6.8" fill="url(#gB)" transform="rotate(-24 1250 1882)"/><ellipse cx="1591" cy="1516" rx="8.2" ry="6.5" fill="url(#gC)" transform="rotate(14 1591 1516)"/><ellipse cx="1313" cy="1429" rx="11.2" ry="8.0" fill="url(#gB)" transform="rotate(-52 1313 1429)"/><ellipse cx="1398" cy="1579" rx="8.4" ry="6.8" fill="url(#gB)" transform="rotate(24 1398 1579)"/><ellipse cx="1491" cy="1648" rx="11.3" ry="10.0" fill="url(#gG)" transform="rotate(-12 1491 1648)"/><ellipse cx="1424" cy="1761" rx="15.0" ry="9.8" fill="url(#gB)" transform="rotate(16 1424 1761)"/><ellipse cx="1693" cy="1633" rx="9.2" ry="7.0" fill="url(#gY)" transform="rotate(39 1693 1633)"/><ellipse cx="1537" cy="1906" rx="13.1" ry="9.2" fill="url(#gC)" transform="rotate(5 1537 1906)"/><ellipse cx="1492" cy="1565" rx="13.3" ry="9.5" fill="url(#gB)" transform="rotate(-45 1492 1565)"/><ellipse cx="1675" cy="1722" rx="9.9" ry="7.6" fill="url(#gG)" transform="rotate(-23 1675 1722)"/><ellipse cx="1306" cy="2030" rx="10.5" ry="8.0" fill="url(#gC)" transform="rotate(-41 1306 2030)"/><ellipse cx="1138" cy="1419" rx="9.2" ry="8.8" fill="url(#gB)" transform="rotate(15 1138 1419)"/><ellipse cx="1562" cy="2008" rx="10.2" ry="9.0" fill="url(#gC)" transform="rotate(12 1562 2008)"/><ellipse cx="1506" cy="1512" rx="6.6" ry="6.0" fill="url(#gY)" transform="rotate(-59 1506 1512)"/><ellipse cx="1658" cy="1651" rx="14.0" ry="9.6" fill="url(#gG)" transform="rotate(30 1658 1651)"/><ellipse cx="1583" cy="1873" rx="9.1" ry="6.3" fill="url(#gC)" transform="rotate(6 1583 1873)"/><ellipse cx="1657" cy="1821" rx="7.2" ry="7.1" fill="url(#gG)" transform="rotate(25 1657 1821)"/><ellipse cx="1264" cy="1710" rx="8.1" ry="6.7" fill="url(#gY)" transform="rotate(2 1264 1710)"/><ellipse cx="1851" cy="2072" rx="10.9" ry="7.5" fill="url(#gY)" transform="rotate(-21 1851 2072)"/><ellipse cx="1195" cy="2049" rx="9.9" ry="9.4" fill="url(#gB)" transform="rotate(7 1195 2049)"/><ellipse cx="1328" cy="1550" rx="7.4" ry="6.7" fill="url(#gC)" transform="rotate(16 1328 1550)"/><ellipse cx="1616" cy="1615" rx="8.9" ry="6.6" fill="url(#gB)" transform="rotate(34 1616 1615)"/><ellipse cx="1451" cy="1571" rx="11.3" ry="8.9" fill="url(#gC)" transform="rotate(-53 1451 1571)"/><ellipse cx="1166" cy="1493" rx="12.1" ry="9.0" fill="url(#gB)" transform="rotate(-4 1166 1493)"/><ellipse cx="1243" cy="1514" rx="9.8" ry="8.7" fill="url(#gB)" transform="rotate(53 1243 1514)"/><ellipse cx="1597" cy="1930" rx="14.2" ry="9.5" fill="url(#gB)" transform="rotate(24 1597 1930)"/><ellipse cx="1145" cy="1977" rx="9.5" ry="9.2" fill="url(#gR)" transform="rotate(-4 1145 1977)"/><ellipse cx="1640" cy="1714" rx="11.4" ry="7.6" fill="url(#gC)" transform="rotate(-35 1640 1714)"/><ellipse cx="1555" cy="1531" rx="11.4" ry="8.3" fill="url(#gG)" transform="rotate(15 1555 1531)"/><ellipse cx="1756" cy="1939" rx="7.3" ry="7.0" fill="url(#gY)" transform="rotate(47 1756 1939)"/><ellipse cx="1357" cy="1737" rx="9.6" ry="7.4" fill="url(#gB)" transform="rotate(-9 1357 1737)"/><ellipse cx="1667" cy="1855" rx="9.8" ry="7.3" fill="url(#gC)" transform="rotate(14 1667 1855)"/><ellipse cx="1000" cy="2062" rx="8.0" ry="7.0" fill="url(#gY)" transform="rotate(38 1000 2062)"/><ellipse cx="1618" cy="1527" rx="11.5" ry="9.4" fill="url(#gB)" transform="rotate(49 1618 1527)"/><ellipse cx="1388" cy="1845" rx="13.7" ry="9.1" fill="url(#gG)" transform="rotate(27 1388 1845)"/><ellipse cx="1278" cy="1620" rx="11.6" ry="9.6" fill="url(#gB)" transform="rotate(24 1278 1620)"/><ellipse cx="1768" cy="1911" rx="8.9" ry="8.6" fill="url(#gB)" transform="rotate(49 1768 1911)"/><ellipse cx="1560" cy="1658" rx="6.9" ry="6.2" fill="url(#gY)" transform="rotate(-39 1560 1658)"/><ellipse cx="1375" cy="1511" rx="12.4" ry="9.0" fill="url(#gC)" transform="rotate(-19 1375 1511)"/><ellipse cx="1246" cy="1941" rx="11.7" ry="8.9" fill="url(#gB)" transform="rotate(-15 1246 1941)"/><ellipse cx="1223" cy="1614" rx="10.6" ry="8.3" fill="url(#gC)" transform="rotate(-47 1223 1614)"/><ellipse cx="1225" cy="1734" rx="11.3" ry="9.5" fill="url(#gC)" transform="rotate(5 1225 1734)"/><ellipse cx="1731" cy="1725" rx="8.0" ry="6.5" fill="url(#gB)" transform="rotate(21 1731 1725)"/><ellipse cx="1446" cy="2042" rx="8.5" ry="7.5" fill="url(#gY)" transform="rotate(1 1446 2042)"/><ellipse cx="1141" cy="1779" rx="11.1" ry="9.6" fill="url(#gY)" transform="rotate(34 1141 1779)"/><ellipse cx="1676" cy="1950" rx="8.4" ry="7.2" fill="url(#gB)" transform="rotate(36 1676 1950)"/><ellipse cx="1619" cy="1527" rx="11.3" ry="9.1" fill="url(#gB)" transform="rotate(-2 1619 1527)"/><ellipse cx="1610" cy="1729" rx="10.5" ry="6.8" fill="url(#gB)" transform="rotate(-52 1610 1729)"/><ellipse cx="1466" cy="1741" rx="9.5" ry="6.0" fill="url(#gY)" transform="rotate(-55 1466 1741)"/><ellipse cx="1243" cy="1692" rx="10.4" ry="9.7" fill="url(#gG)" transform="rotate(-46 1243 1692)"/><ellipse cx="1237" cy="1826" rx="10.4" ry="8.0" fill="url(#gB)" transform="rotate(12 1237 1826)"/><ellipse cx="1295" cy="1421" rx="11.1" ry="7.3" fill="url(#gC)" transform="rotate(1 1295 1421)"/><ellipse cx="1663" cy="1959" rx="8.5" ry="7.8" fill="url(#gY)" transform="rotate(-33 1663 1959)"/><ellipse cx="1658" cy="1840" rx="7.6" ry="7.5" fill="url(#gB)" transform="rotate(-16 1658 1840)"/><ellipse cx="1033" cy="1964" rx="11.7" ry="8.7" fill="url(#gG)" transform="rotate(-7 1033 1964)"/><ellipse cx="1336" cy="1808" rx="7.8" ry="6.5" fill="url(#gR)" transform="rotate(-1 1336 1808)"/><ellipse cx="1357" cy="1630" rx="7.0" ry="6.8" fill="url(#gB)" transform="rotate(4 1357 1630)"/><ellipse cx="1586" cy="1777" rx="10.4" ry="8.7" fill="url(#gB)" transform="rotate(3 1586 1777)"/><ellipse cx="1184" cy="1825" rx="10.5" ry="8.6" fill="url(#gY)" transform="rotate(33 1184 1825)"/><ellipse cx="1226" cy="1856" rx="8.2" ry="6.5" fill="url(#gY)" transform="rotate(-51 1226 1856)"/><ellipse cx="1589" cy="2017" rx="10.1" ry="8.2" fill="url(#gY)" transform="rotate(15 1589 2017)"/><ellipse cx="1302" cy="2044" rx="10.1" ry="9.1" fill="url(#gB)" transform="rotate(16 1302 2044)"/><ellipse cx="1281" cy="1358" rx="11.6" ry="9.9" fill="url(#gG)" transform="rotate(50 1281 1358)"/><ellipse cx="1219" cy="1808" rx="12.0" ry="9.2" fill="url(#gG)" transform="rotate(54 1219 1808)"/><ellipse cx="1419" cy="1907" rx="10.8" ry="9.8" fill="url(#gC)" transform="rotate(-23 1419 1907)"/><ellipse cx="1725" cy="1688" rx="11.6" ry="9.1" fill="url(#gB)" transform="rotate(-33 1725 1688)"/><ellipse cx="1404" cy="1733" rx="8.2" ry="6.7" fill="url(#gC)" transform="rotate(-25 1404 1733)"/><ellipse cx="1796" cy="2044" rx="12.8" ry="8.7" fill="url(#gC)" transform="rotate(-25 1796 2044)"/><ellipse cx="1286" cy="2069" rx="14.9" ry="10.0" fill="url(#gC)" transform="rotate(39 1286 2069)"/><ellipse cx="1256" cy="1592" rx="8.2" ry="6.8" fill="url(#gG)" transform="rotate(-34 1256 1592)"/><ellipse cx="1181" cy="1818" rx="13.1" ry="9.7" fill="url(#gG)" transform="rotate(52 1181 1818)"/><ellipse cx="1567" cy="1575" rx="6.9" ry="6.5" fill="url(#gC)" transform="rotate(44 1567 1575)"/><ellipse cx="1460" cy="2004" rx="7.9" ry="6.1" fill="url(#gG)" transform="rotate(-6 1460 2004)"/><ellipse cx="1359" cy="1505" rx="8.8" ry="7.7" fill="url(#gB)" transform="rotate(58 1359 1505)"/><ellipse cx="1779" cy="1855" rx="9.0" ry="8.0" fill="url(#gC)" transform="rotate(-33 1779 1855)"/><ellipse cx="1192" cy="1466" rx="14.7" ry="9.8" fill="url(#gY)" transform="rotate(-42 1192 1466)"/><ellipse cx="1641" cy="1605" rx="9.1" ry="6.5" fill="url(#gB)" transform="rotate(-59 1641 1605)"/><ellipse cx="1383" cy="1540" rx="11.8" ry="9.1" fill="url(#gC)" transform="rotate(-56 1383 1540)"/><ellipse cx="1384" cy="2060" rx="12.8" ry="9.2" fill="url(#gC)" transform="rotate(-1 1384 2060)"/><ellipse cx="776" cy="1249" rx="9.6" ry="8.5" fill="url(#gC)" transform="rotate(-35 776 1249)"/><ellipse cx="395" cy="1564" rx="7.9" ry="7.3" fill="url(#gC)" transform="rotate(57 395 1564)"/><ellipse cx="785" cy="1276" rx="8.6" ry="6.6" fill="url(#gC)" transform="rotate(-55 785 1276)"/><ellipse cx="534" cy="1442" rx="7.1" ry="6.5" fill="url(#gC)" transform="rotate(-36 534 1442)"/><ellipse cx="1186" cy="1054" rx="11.4" ry="8.3" fill="url(#gG)" transform="rotate(-36 1186 1054)"/><ellipse cx="1063" cy="1084" rx="8.4" ry="8.4" fill="url(#gG)" transform="rotate(58 1063 1084)"/><ellipse cx="859" cy="1236" rx="6.9" ry="5.1" fill="url(#gB)" transform="rotate(34 859 1236)"/><ellipse cx="369" cy="1610" rx="7.9" ry="7.9" fill="url(#gB)" transform="rotate(-46 369 1610)"/><ellipse cx="771" cy="1236" rx="10.0" ry="7.4" fill="url(#gB)" transform="rotate(3 771 1236)"/><ellipse cx="430" cy="1581" rx="12.6" ry="8.1" fill="url(#gB)" transform="rotate(56 430 1581)"/><ellipse cx="566" cy="1407" rx="5.7" ry="5.7" fill="url(#gC)" transform="rotate(-3 566 1407)"/><ellipse cx="412" cy="1570" rx="5.5" ry="5.4" fill="url(#gG)" transform="rotate(12 412 1570)"/><ellipse cx="624" cy="1436" rx="11.7" ry="7.4" fill="url(#gG)" transform="rotate(-17 624 1436)"/><ellipse cx="1406" cy="1040" rx="10.1" ry="8.6" fill="url(#gB)" transform="rotate(-0 1406 1040)"/><ellipse cx="961" cy="1140" rx="9.5" ry="6.8" fill="url(#gB)" transform="rotate(42 961 1140)"/><ellipse cx="1161" cy="1063" rx="8.2" ry="7.9" fill="url(#gB)" transform="rotate(-38 1161 1063)"/><ellipse cx="736" cy="1331" rx="10.5" ry="8.5" fill="url(#gB)" transform="rotate(-35 736 1331)"/><ellipse cx="375" cy="1599" rx="10.8" ry="7.5" fill="url(#gB)" transform="rotate(-16 375 1599)"/><ellipse cx="959" cy="1158" rx="10.0" ry="8.5" fill="url(#gB)" transform="rotate(-22 959 1158)"/><ellipse cx="821" cy="1193" rx="6.1" ry="5.1" fill="url(#gG)" transform="rotate(56 821 1193)"/><ellipse cx="334" cy="1618" rx="12.0" ry="8.4" fill="url(#gC)" transform="rotate(-4 334 1618)"/><ellipse cx="1360" cy="1043" rx="8.0" ry="7.9" fill="url(#gC)" transform="rotate(7 1360 1043)"/><ellipse cx="870" cy="1161" rx="8.1" ry="7.2" fill="url(#gG)" transform="rotate(36 870 1161)"/><ellipse cx="1006" cy="1118" rx="9.6" ry="6.5" fill="url(#gB)" transform="rotate(-60 1006 1118)"/><ellipse cx="322" cy="1647" rx="6.7" ry="6.6" fill="url(#gC)" transform="rotate(42 322 1647)"/><ellipse cx="547" cy="1419" rx="11.2" ry="8.5" fill="url(#gG)" transform="rotate(-38 547 1419)"/><ellipse cx="861" cy="1229" rx="5.6" ry="5.1" fill="url(#gC)" transform="rotate(19 861 1229)"/><ellipse cx="787" cy="1232" rx="10.9" ry="7.9" fill="url(#gY)" transform="rotate(-21 787 1232)"/><ellipse cx="758" cy="1292" rx="6.3" ry="5.8" fill="url(#gC)" transform="rotate(-38 758 1292)"/><ellipse cx="681" cy="1396" rx="11.3" ry="8.1" fill="url(#gC)" transform="rotate(-47 681 1396)"/><ellipse cx="934" cy="1161" rx="7.3" ry="5.9" fill="url(#gB)" transform="rotate(31 934 1161)"/><ellipse cx="617" cy="1424" rx="9.7" ry="6.7" fill="url(#gB)" transform="rotate(24 617 1424)"/><ellipse cx="1344" cy="1066" rx="7.7" ry="7.6" fill="url(#gC)" transform="rotate(-19 1344 1066)"/><ellipse cx="346" cy="1601" rx="10.8" ry="8.7" fill="url(#gC)" transform="rotate(15 346 1601)"/><ellipse cx="733" cy="1342" rx="6.8" ry="6.4" fill="url(#gC)" transform="rotate(11 733 1342)"/><ellipse cx="1367" cy="1052" rx="12.6" ry="7.9" fill="url(#gB)" transform="rotate(56 1367 1052)"/><ellipse cx="483" cy="1493" rx="7.2" ry="5.7" fill="url(#gC)" transform="rotate(-9 483 1493)"/><ellipse cx="706" cy="1295" rx="6.8" ry="6.1" fill="url(#gB)" transform="rotate(-4 706 1295)"/><ellipse cx="450" cy="1519" rx="9.7" ry="6.8" fill="url(#gB)" transform="rotate(-13 450 1519)"/><ellipse cx="1399" cy="1051" rx="8.5" ry="7.0" fill="url(#gG)" transform="rotate(24 1399 1051)"/><ellipse cx="474" cy="1548" rx="9.3" ry="6.4" fill="url(#gC)" transform="rotate(-60 474 1548)"/><ellipse cx="1218" cy="1046" rx="10.8" ry="7.0" fill="url(#gG)" transform="rotate(6 1218 1046)"/><ellipse cx="492" cy="1514" rx="9.1" ry="6.1" fill="url(#gB)" transform="rotate(29 492 1514)"/><ellipse cx="643" cy="1423" rx="8.1" ry="5.6" fill="url(#gG)" transform="rotate(-46 643 1423)"/><ellipse cx="894" cy="1121" rx="5.9" ry="5.5" fill="url(#gC)" transform="rotate(2 894 1121)"/><ellipse cx="851" cy="1243" rx="9.2" ry="8.1" fill="url(#gB)" transform="rotate(-60 851 1243)"/><ellipse cx="1192" cy="1015" rx="11.5" ry="8.6" fill="url(#gB)" transform="rotate(35 1192 1015)"/><ellipse cx="788" cy="1217" rx="7.0" ry="6.2" fill="url(#gB)" transform="rotate(54 788 1217)"/><ellipse cx="1223" cy="1012" rx="7.4" ry="6.9" fill="url(#gG)" transform="rotate(54 1223 1012)"/><ellipse cx="1100" cy="1031" rx="9.9" ry="6.9" fill="url(#gB)" transform="rotate(-23 1100 1031)"/><ellipse cx="636" cy="1390" rx="10.4" ry="7.9" fill="url(#gG)" transform="rotate(3 636 1390)"/><ellipse cx="981" cy="1114" rx="7.5" ry="6.1" fill="url(#gC)" transform="rotate(32 981 1114)"/><ellipse cx="629" cy="1431" rx="10.9" ry="7.6" fill="url(#gC)" transform="rotate(32 629 1431)"/><ellipse cx="602" cy="1447" rx="6.7" ry="5.6" fill="url(#gB)" transform="rotate(44 602 1447)"/><ellipse cx="921" cy="1179" rx="8.0" ry="7.6" fill="url(#gG)" transform="rotate(-20 921 1179)"/><ellipse cx="1073" cy="1087" rx="12.0" ry="8.7" fill="url(#gC)" transform="rotate(-2 1073 1087)"/><ellipse cx="1134" cy="1083" rx="9.5" ry="9.0" fill="url(#gB)" transform="rotate(32 1134 1083)"/><ellipse cx="867" cy="1185" rx="8.2" ry="5.5" fill="url(#gB)" transform="rotate(14 867 1185)"/><ellipse cx="730" cy="1338" rx="8.9" ry="8.0" fill="url(#gB)" transform="rotate(38 730 1338)"/><ellipse cx="1233" cy="1036" rx="9.7" ry="6.8" fill="url(#gG)" transform="rotate(41 1233 1036)"/><ellipse cx="631" cy="1387" rx="9.4" ry="7.2" fill="url(#gB)" transform="rotate(-0 631 1387)"/><ellipse cx="501" cy="1490" rx="9.5" ry="7.5" fill="url(#gB)" transform="rotate(20 501 1490)"/><ellipse cx="890" cy="1149" rx="6.9" ry="5.7" fill="url(#gG)" transform="rotate(-40 890 1149)"/><ellipse cx="1386" cy="1058" rx="10.7" ry="8.4" fill="url(#gG)" transform="rotate(-47 1386 1058)"/><ellipse cx="617" cy="1401" rx="5.9" ry="5.3" fill="url(#gC)" transform="rotate(36 617 1401)"/><ellipse cx="983" cy="1090" rx="7.9" ry="7.8" fill="url(#gB)" transform="rotate(39 983 1090)"/><ellipse cx="320" cy="1650" rx="8.9" ry="6.3" fill="url(#gB)" transform="rotate(47 320 1650)"/><ellipse cx="1251" cy="1062" rx="9.9" ry="7.0" fill="url(#gB)" transform="rotate(9 1251 1062)"/><ellipse cx="881" cy="1169" rx="9.2" ry="8.3" fill="url(#gB)" transform="rotate(-42 881 1169)"/><ellipse cx="635" cy="1388" rx="8.5" ry="5.6" fill="url(#gY)" transform="rotate(39 635 1388)"/><ellipse cx="661" cy="1399" rx="10.0" ry="8.9" fill="url(#gC)" transform="rotate(56 661 1399)"/><ellipse cx="867" cy="1142" rx="9.3" ry="6.7" fill="url(#gC)" transform="rotate(34 867 1142)"/><ellipse cx="586" cy="1441" rx="7.8" ry="5.4" fill="url(#gC)" transform="rotate(-20 586 1441)"/><ellipse cx="695" cy="1323" rx="7.4" ry="5.9" fill="url(#gB)" transform="rotate(-28 695 1323)"/><ellipse cx="351" cy="1604" rx="6.8" ry="6.2" fill="url(#gB)" transform="rotate(9 351 1604)"/><ellipse cx="1163" cy="1051" rx="6.9" ry="5.6" fill="url(#gG)" transform="rotate(39 1163 1051)"/><ellipse cx="698" cy="1369" rx="6.1" ry="5.1" fill="url(#gG)" transform="rotate(-47 698 1369)"/><ellipse cx="354" cy="1627" rx="5.2" ry="5.1" fill="url(#gC)" transform="rotate(-1 354 1627)"/><ellipse cx="528" cy="1488" rx="9.9" ry="6.3" fill="url(#gB)" transform="rotate(46 528 1488)"/><ellipse cx="547" cy="1472" rx="7.4" ry="5.3" fill="url(#gB)" transform="rotate(32 547 1472)"/><ellipse cx="845" cy="1207" rx="8.1" ry="8.0" fill="url(#gB)" transform="rotate(33 845 1207)"/><ellipse cx="520" cy="1468" rx="7.2" ry="5.3" fill="url(#gB)" transform="rotate(-34 520 1468)"/><ellipse cx="1217" cy="1055" rx="5.4" ry="5.3" fill="url(#gC)" transform="rotate(22 1217 1055)"/><ellipse cx="472" cy="1536" rx="7.6" ry="7.3" fill="url(#gC)" transform="rotate(0 472 1536)"/><ellipse cx="1235" cy="1076" rx="6.7" ry="6.6" fill="url(#gB)" transform="rotate(16 1235 1076)"/><ellipse cx="750" cy="1303" rx="9.1" ry="8.9" fill="url(#gY)" transform="rotate(55 750 1303)"/><ellipse cx="649" cy="1387" rx="9.9" ry="6.8" fill="url(#gB)" transform="rotate(-54 649 1387)"/><ellipse cx="818" cy="1208" rx="6.2" ry="6.1" fill="url(#gB)" transform="rotate(55 818 1208)"/><ellipse cx="648" cy="1383" rx="13.2" ry="8.8" fill="url(#gC)" transform="rotate(34 648 1383)"/><ellipse cx="695" cy="1342" rx="9.6" ry="7.5" fill="url(#gB)" transform="rotate(37 695 1342)"/><ellipse cx="1058" cy="1051" rx="9.0" ry="6.2" fill="url(#gB)" transform="rotate(39 1058 1051)"/><ellipse cx="566" cy="1421" rx="10.4" ry="8.9" fill="url(#gC)" transform="rotate(-50 566 1421)"/><ellipse cx="813" cy="1192" rx="9.5" ry="7.4" fill="url(#gY)" transform="rotate(11 813 1192)"/><ellipse cx="525" cy="1502" rx="12.6" ry="8.2" fill="url(#gB)" transform="rotate(4 525 1502)"/><ellipse cx="517" cy="1511" rx="10.1" ry="8.9" fill="url(#gG)" transform="rotate(-57 517 1511)"/><ellipse cx="801" cy="1236" rx="6.9" ry="6.3" fill="url(#gC)" transform="rotate(54 801 1236)"/><ellipse cx="629" cy="1364" rx="6.8" ry="6.8" fill="url(#gC)" transform="rotate(18 629 1364)"/><ellipse cx="822" cy="1261" rx="10.0" ry="6.4" fill="url(#gG)" transform="rotate(-1 822 1261)"/><ellipse cx="596" cy="1426" rx="13.7" ry="9.0" fill="url(#gB)" transform="rotate(14 596 1426)"/><ellipse cx="711" cy="1334" rx="6.8" ry="5.4" fill="url(#gB)" transform="rotate(-14 711 1334)"/><ellipse cx="369" cy="1623" rx="5.9" ry="5.7" fill="url(#gB)" transform="rotate(-35 369 1623)"/><ellipse cx="832" cy="1205" rx="6.6" ry="6.4" fill="url(#gC)" transform="rotate(23 832 1205)"/><ellipse cx="522" cy="1521" rx="10.1" ry="7.3" fill="url(#gC)" transform="rotate(-60 522 1521)"/><ellipse cx="355" cy="1658" rx="7.0" ry="5.5" fill="url(#gG)" transform="rotate(-55 355 1658)"/><ellipse cx="616" cy="1419" rx="7.9" ry="5.8" fill="url(#gY)" transform="rotate(-22 616 1419)"/><ellipse cx="686" cy="1361" rx="12.2" ry="9.0" fill="url(#gC)" transform="rotate(-41 686 1361)"/><ellipse cx="1394" cy="1080" rx="10.5" ry="6.8" fill="url(#gB)" transform="rotate(19 1394 1080)"/><ellipse cx="1028" cy="1084" rx="8.6" ry="5.9" fill="url(#gB)" transform="rotate(40 1028 1084)"/><ellipse cx="1322" cy="1018" rx="7.9" ry="6.2" fill="url(#gB)" transform="rotate(-54 1322 1018)"/><ellipse cx="1076" cy="1103" rx="6.9" ry="5.1" fill="url(#gB)" transform="rotate(12 1076 1103)"/><ellipse cx="864" cy="1193" rx="10.9" ry="7.5" fill="url(#gC)" transform="rotate(7 864 1193)"/><ellipse cx="610" cy="1402" rx="7.9" ry="6.0" fill="url(#gC)" transform="rotate(-36 610 1402)"/><ellipse cx="1206" cy="1077" rx="7.9" ry="7.1" fill="url(#gG)" transform="rotate(-48 1206 1077)"/><ellipse cx="886" cy="1128" rx="7.4" ry="6.1" fill="url(#gB)" transform="rotate(28 886 1128)"/><ellipse cx="1112" cy="1044" rx="6.8" ry="6.5" fill="url(#gB)" transform="rotate(-7 1112 1044)"/><ellipse cx="1272" cy="1073" rx="8.1" ry="6.0" fill="url(#gY)" transform="rotate(-49 1272 1073)"/><ellipse cx="661" cy="1400" rx="6.0" ry="5.6" fill="url(#gG)" transform="rotate(58 661 1400)"/><ellipse cx="1256" cy="1055" rx="11.0" ry="7.5" fill="url(#gG)" transform="rotate(-44 1256 1055)"/><ellipse cx="1305" cy="1041" rx="14.2" ry="8.9" fill="url(#gB)" transform="rotate(-7 1305 1041)"/><ellipse cx="963" cy="1136" rx="8.4" ry="7.5" fill="url(#gG)" transform="rotate(45 963 1136)"/><ellipse cx="1266" cy="1012" rx="8.2" ry="6.6" fill="url(#gB)" transform="rotate(-31 1266 1012)"/><ellipse cx="1083" cy="1074" rx="9.0" ry="6.9" fill="url(#gR)" transform="rotate(57 1083 1074)"/><ellipse cx="868" cy="1191" rx="7.7" ry="6.7" fill="url(#gB)" transform="rotate(12 868 1191)"/><ellipse cx="636" cy="1388" rx="10.1" ry="7.7" fill="url(#gG)" transform="rotate(-57 636 1388)"/><ellipse cx="714" cy="1293" rx="6.7" ry="6.4" fill="url(#gG)" transform="rotate(-23 714 1293)"/><ellipse cx="530" cy="1438" rx="9.8" ry="6.7" fill="url(#gY)" transform="rotate(24 530 1438)"/><ellipse cx="951" cy="1141" rx="6.5" ry="6.1" fill="url(#gC)" transform="rotate(15 951 1141)"/><ellipse cx="1055" cy="1108" rx="9.3" ry="6.3" fill="url(#gB)" transform="rotate(-40 1055 1108)"/><ellipse cx="1211" cy="1057" rx="7.1" ry="5.4" fill="url(#gB)" transform="rotate(9 1211 1057)"/><ellipse cx="1261" cy="1011" rx="9.2" ry="6.8" fill="url(#gG)" transform="rotate(-34 1261 1011)"/><ellipse cx="1333" cy="1015" rx="9.9" ry="7.0" fill="url(#gB)" transform="rotate(7 1333 1015)"/><ellipse cx="841" cy="1212" rx="10.8" ry="6.8" fill="url(#gG)" transform="rotate(-34 841 1212)"/><ellipse cx="606" cy="1460" rx="10.1" ry="8.9" fill="url(#gB)" transform="rotate(-44 606 1460)"/><ellipse cx="847" cy="1198" rx="9.6" ry="6.9" fill="url(#gG)" transform="rotate(-10 847 1198)"/><ellipse cx="1065" cy="1055" rx="9.1" ry="6.9" fill="url(#gC)" transform="rotate(22 1065 1055)"/><ellipse cx="995" cy="1079" rx="7.7" ry="7.0" fill="url(#gG)" transform="rotate(17 995 1079)"/><ellipse cx="878" cy="1151" rx="6.5" ry="6.1" fill="url(#gB)" transform="rotate(23 878 1151)"/><ellipse cx="1198" cy="1018" rx="12.9" ry="8.5" fill="url(#gG)" transform="rotate(-40 1198 1018)"/><ellipse cx="578" cy="1463" rx="8.7" ry="6.4" fill="url(#gB)" transform="rotate(-43 578 1463)"/><ellipse cx="1257" cy="1065" rx="9.0" ry="6.3" fill="url(#gC)" transform="rotate(-10 1257 1065)"/><ellipse cx="679" cy="1331" rx="7.2" ry="6.5" fill="url(#gC)" transform="rotate(-19 679 1331)"/><ellipse cx="1247" cy="1067" rx="8.6" ry="6.0" fill="url(#gC)" transform="rotate(38 1247 1067)"/><ellipse cx="865" cy="1151" rx="9.6" ry="8.2" fill="url(#gB)" transform="rotate(22 865 1151)"/><ellipse cx="1061" cy="1101" rx="7.0" ry="5.7" fill="url(#gB)" transform="rotate(17 1061 1101)"/><ellipse cx="716" cy="1346" rx="7.9" ry="6.0" fill="url(#gC)" transform="rotate(-35 716 1346)"/><ellipse cx="605" cy="1422" rx="7.1" ry="6.5" fill="url(#gC)" transform="rotate(-59 605 1422)"/><ellipse cx="415" cy="1579" rx="10.6" ry="6.8" fill="url(#gB)" transform="rotate(-29 415 1579)"/><ellipse cx="1078" cy="1064" rx="11.1" ry="7.9" fill="url(#gG)" transform="rotate(45 1078 1064)"/><ellipse cx="951" cy="1107" rx="7.1" ry="5.7" fill="url(#gC)" transform="rotate(33 951 1107)"/><ellipse cx="1071" cy="1046" rx="10.2" ry="8.9" fill="url(#gB)" transform="rotate(20 1071 1046)"/><ellipse cx="956" cy="1095" rx="7.6" ry="5.6" fill="url(#gB)" transform="rotate(4 956 1095)"/><ellipse cx="419" cy="1575" rx="11.3" ry="7.6" fill="url(#gG)" transform="rotate(-49 419 1575)"/><ellipse cx="814" cy="1231" rx="9.2" ry="7.4" fill="url(#gC)" transform="rotate(26 814 1231)"/><ellipse cx="330" cy="1615" rx="11.0" ry="7.8" fill="url(#gG)" transform="rotate(-47 330 1615)"/><ellipse cx="616" cy="1376" rx="7.1" ry="5.8" fill="url(#gB)" transform="rotate(-56 616 1376)"/><ellipse cx="357" cy="1622" rx="9.2" ry="7.1" fill="url(#gR)" transform="rotate(-56 357 1622)"/><ellipse cx="557" cy="1431" rx="13.8" ry="8.9" fill="url(#gB)" transform="rotate(16 557 1431)"/><ellipse cx="965" cy="1148" rx="9.8" ry="6.5" fill="url(#gB)" transform="rotate(-50 965 1148)"/><ellipse cx="723" cy="1322" rx="10.7" ry="8.6" fill="url(#gC)" transform="rotate(-42 723 1322)"/><ellipse cx="1272" cy="1041" rx="10.9" ry="8.8" fill="url(#gG)" transform="rotate(10 1272 1041)"/><ellipse cx="406" cy="1586" rx="10.1" ry="6.7" fill="url(#gB)" transform="rotate(57 406 1586)"/><ellipse cx="1356" cy="1074" rx="6.1" ry="5.0" fill="url(#gC)" transform="rotate(36 1356 1074)"/><ellipse cx="608" cy="1458" rx="11.1" ry="7.4" fill="url(#gG)" transform="rotate(50 608 1458)"/><ellipse cx="1207" cy="1047" rx="7.1" ry="6.1" fill="url(#gC)" transform="rotate(33 1207 1047)"/><ellipse cx="1130" cy="1040" rx="5.8" ry="5.6" fill="url(#gG)" transform="rotate(10 1130 1040)"/><ellipse cx="560" cy="1417" rx="9.1" ry="5.9" fill="url(#gC)" transform="rotate(-29 560 1417)"/><ellipse cx="1369" cy="1011" rx="7.2" ry="5.9" fill="url(#gB)" transform="rotate(12 1369 1011)"/><ellipse cx="901" cy="1202" rx="10.7" ry="8.8" fill="url(#gY)" transform="rotate(19 901 1202)"/><ellipse cx="1413" cy="1067" rx="7.8" ry="7.3" fill="url(#gY)" transform="rotate(-49 1413 1067)"/><ellipse cx="1060" cy="1045" rx="6.4" ry="6.1" fill="url(#gC)" transform="rotate(-37 1060 1045)"/><ellipse cx="535" cy="1509" rx="7.3" ry="5.5" fill="url(#gB)" transform="rotate(-32 535 1509)"/><ellipse cx="748" cy="1309" rx="9.3" ry="7.7" fill="url(#gB)" transform="rotate(47 748 1309)"/><ellipse cx="1017" cy="1114" rx="12.3" ry="8.6" fill="url(#gB)" transform="rotate(51 1017 1114)"/><ellipse cx="338" cy="1675" rx="8.2" ry="5.3" fill="url(#gG)" transform="rotate(-24 338 1675)"/><ellipse cx="532" cy="1439" rx="5.8" ry="5.3" fill="url(#gC)" transform="rotate(9 532 1439)"/><ellipse cx="1305" cy="1030" rx="10.7" ry="7.3" fill="url(#gC)" transform="rotate(-39 1305 1030)"/><ellipse cx="703" cy="1296" rx="7.8" ry="6.4" fill="url(#gB)" transform="rotate(-50 703 1296)"/><ellipse cx="1113" cy="1077" rx="9.2" ry="6.2" fill="url(#gG)" transform="rotate(-24 1113 1077)"/><ellipse cx="1262" cy="1030" rx="6.5" ry="5.2" fill="url(#gC)" transform="rotate(25 1262 1030)"/><ellipse cx="936" cy="1127" rx="8.5" ry="8.2" fill="url(#gC)" transform="rotate(-8 936 1127)"/><ellipse cx="1299" cy="1072" rx="6.3" ry="5.3" fill="url(#gC)" transform="rotate(46 1299 1072)"/><ellipse cx="686" cy="1376" rx="8.0" ry="7.7" fill="url(#gG)" transform="rotate(20 686 1376)"/><ellipse cx="422" cy="1559" rx="7.6" ry="5.7" fill="url(#gB)" transform="rotate(-31 422 1559)"/><ellipse cx="1084" cy="1047" rx="8.9" ry="5.9" fill="url(#gG)" transform="rotate(52 1084 1047)"/><ellipse cx="1115" cy="1031" rx="9.6" ry="7.9" fill="url(#gG)" transform="rotate(57 1115 1031)"/><ellipse cx="868" cy="1149" rx="8.1" ry="6.0" fill="url(#gB)" transform="rotate(24 868 1149)"/><ellipse cx="669" cy="1330" rx="10.3" ry="8.3" fill="url(#gG)" transform="rotate(-34 669 1330)"/><ellipse cx="1008" cy="1133" rx="5.3" ry="5.2" fill="url(#gC)" transform="rotate(19 1008 1133)"/><ellipse cx="1154" cy="1082" rx="9.3" ry="7.3" fill="url(#gY)" transform="rotate(-5 1154 1082)"/><ellipse cx="652" cy="1359" rx="10.1" ry="7.9" fill="url(#gG)" transform="rotate(41 652 1359)"/><ellipse cx="686" cy="1388" rx="10.0" ry="9.0" fill="url(#gB)" transform="rotate(42 686 1388)"/><ellipse cx="1115" cy="1030" rx="10.4" ry="8.0" fill="url(#gB)" transform="rotate(-16 1115 1030)"/><ellipse cx="915" cy="1119" rx="7.0" ry="5.7" fill="url(#gB)" transform="rotate(34 915 1119)"/><ellipse cx="1389" cy="1061" rx="9.6" ry="7.2" fill="url(#gB)" transform="rotate(-12 1389 1061)"/><ellipse cx="762" cy="1314" rx="7.5" ry="6.5" fill="url(#gC)" transform="rotate(-4 762 1314)"/><ellipse cx="686" cy="1352" rx="9.3" ry="6.9" fill="url(#gB)" transform="rotate(-13 686 1352)"/><ellipse cx="1202" cy="1072" rx="11.1" ry="8.9" fill="url(#gY)" transform="rotate(2 1202 1072)"/><ellipse cx="422" cy="1543" rx="8.0" ry="6.2" fill="url(#gB)" transform="rotate(25 422 1543)"/><ellipse cx="1340" cy="1077" rx="8.6" ry="7.3" fill="url(#gG)" transform="rotate(-17 1340 1077)"/><ellipse cx="1056" cy="1106" rx="7.6" ry="6.6" fill="url(#gB)" transform="rotate(-51 1056 1106)"/><ellipse cx="1080" cy="1089" rx="10.3" ry="7.0" fill="url(#gB)" transform="rotate(-16 1080 1089)"/><ellipse cx="835" cy="1168" rx="8.8" ry="8.3" fill="url(#gB)" transform="rotate(48 835 1168)"/><ellipse cx="1020" cy="1120" rx="8.2" ry="7.1" fill="url(#gR)" transform="rotate(-44 1020 1120)"/><ellipse cx="364" cy="1595" rx="9.2" ry="6.6" fill="url(#gC)" transform="rotate(50 364 1595)"/><ellipse cx="1291" cy="1068" rx="11.1" ry="8.7" fill="url(#gY)" transform="rotate(-47 1291 1068)"/><ellipse cx="949" cy="1152" rx="7.5" ry="5.2" fill="url(#gB)" transform="rotate(-18 949 1152)"/><ellipse cx="713" cy="1344" rx="9.3" ry="6.4" fill="url(#gG)" transform="rotate(36 713 1344)"/><ellipse cx="825" cy="1241" rx="8.6" ry="8.6" fill="url(#gR)" transform="rotate(-17 825 1241)"/><ellipse cx="456" cy="1537" rx="12.8" ry="8.6" fill="url(#gB)" transform="rotate(37 456 1537)"/><ellipse cx="377" cy="1614" rx="8.4" ry="7.2" fill="url(#gC)" transform="rotate(43 377 1614)"/><ellipse cx="1147" cy="1072" rx="10.4" ry="8.7" fill="url(#gC)" transform="rotate(6 1147 1072)"/><ellipse cx="918" cy="1171" rx="7.1" ry="5.5" fill="url(#gC)" transform="rotate(-31 918 1171)"/><ellipse cx="548" cy="1492" rx="7.2" ry="5.5" fill="url(#gB)" transform="rotate(-33 548 1492)"/><ellipse cx="352" cy="1601" rx="10.0" ry="8.5" fill="url(#gB)" transform="rotate(60 352 1601)"/><ellipse cx="1283" cy="1038" rx="10.7" ry="8.6" fill="url(#gG)" transform="rotate(27 1283 1038)"/><ellipse cx="474" cy="1536" rx="8.3" ry="7.0" fill="url(#gC)" transform="rotate(-0 474 1536)"/><ellipse cx="451" cy="1523" rx="10.0" ry="7.4" fill="url(#gB)" transform="rotate(-51 451 1523)"/><ellipse cx="1092" cy="1087" rx="8.3" ry="5.9" fill="url(#gB)" transform="rotate(-2 1092 1087)"/><ellipse cx="872" cy="1156" rx="8.8" ry="6.1" fill="url(#gB)" transform="rotate(-49 872 1156)"/><ellipse cx="674" cy="1344" rx="6.0" ry="5.2" fill="url(#gG)" transform="rotate(-40 674 1344)"/><ellipse cx="1223" cy="1032" rx="7.6" ry="6.5" fill="url(#gY)" transform="rotate(45 1223 1032)"/><ellipse cx="1017" cy="1118" rx="10.5" ry="7.1" fill="url(#gB)" transform="rotate(-31 1017 1118)"/><ellipse cx="768" cy="1277" rx="7.9" ry="6.7" fill="url(#gB)" transform="rotate(-29 768 1277)"/><ellipse cx="899" cy="1168" rx="9.4" ry="6.2" fill="url(#gC)" transform="rotate(-57 899 1168)"/><ellipse cx="584" cy="1441" rx="12.2" ry="8.7" fill="url(#gB)" transform="rotate(55 584 1441)"/><ellipse cx="1120" cy="1037" rx="10.2" ry="8.5" fill="url(#gG)" transform="rotate(35 1120 1037)"/><ellipse cx="735" cy="1280" rx="10.4" ry="8.7" fill="url(#gB)" transform="rotate(-20 735 1280)"/><ellipse cx="1177" cy="1071" rx="6.6" ry="5.5" fill="url(#gC)" transform="rotate(-39 1177 1071)"/><ellipse cx="947" cy="1116" rx="8.7" ry="6.9" fill="url(#gB)" transform="rotate(-58 947 1116)"/><ellipse cx="1276" cy="1019" rx="13.0" ry="8.6" fill="url(#gB)" transform="rotate(36 1276 1019)"/><ellipse cx="477" cy="2041" rx="8.6" ry="5.6" fill="url(#gC)" transform="rotate(-21 477 2041)"/><ellipse cx="405" cy="1696" rx="10.4" ry="7.9" fill="url(#gC)" transform="rotate(-55 405 1696)"/><ellipse cx="321" cy="1708" rx="5.8" ry="5.3" fill="url(#gB)" transform="rotate(60 321 1708)"/><ellipse cx="542" cy="1524" rx="7.9" ry="6.9" fill="url(#gB)" transform="rotate(29 542 1524)"/><ellipse cx="459" cy="1594" rx="9.9" ry="6.6" fill="url(#gB)" transform="rotate(-27 459 1594)"/><ellipse cx="329" cy="1899" rx="10.1" ry="6.8" fill="url(#gB)" transform="rotate(26 329 1899)"/><ellipse cx="356" cy="1882" rx="11.1" ry="7.3" fill="url(#gB)" transform="rotate(-37 356 1882)"/><ellipse cx="358" cy="1797" rx="7.7" ry="5.8" fill="url(#gB)" transform="rotate(55 358 1797)"/><ellipse cx="564" cy="1560" rx="7.8" ry="5.1" fill="url(#gB)" transform="rotate(-23 564 1560)"/><ellipse cx="503" cy="1669" rx="5.5" ry="5.5" fill="url(#gC)" transform="rotate(-57 503 1669)"/><ellipse cx="340" cy="1721" rx="7.9" ry="6.9" fill="url(#gB)" transform="rotate(-11 340 1721)"/><ellipse cx="425" cy="1710" rx="9.6" ry="6.7" fill="url(#gB)" transform="rotate(49 425 1710)"/><ellipse cx="539" cy="1532" rx="8.3" ry="7.0" fill="url(#gB)" transform="rotate(13 539 1532)"/><ellipse cx="494" cy="1697" rx="6.7" ry="5.2" fill="url(#gG)" transform="rotate(48 494 1697)"/><ellipse cx="408" cy="1918" rx="8.4" ry="7.3" fill="url(#gC)" transform="rotate(15 408 1918)"/><ellipse cx="522" cy="1645" rx="8.4" ry="6.1" fill="url(#gG)" transform="rotate(37 522 1645)"/><ellipse cx="471" cy="1832" rx="10.1" ry="6.9" fill="url(#gB)" transform="rotate(35 471 1832)"/><ellipse cx="364" cy="2031" rx="8.1" ry="7.5" fill="url(#gB)" transform="rotate(6 364 2031)"/><ellipse cx="513" cy="1606" rx="9.0" ry="7.9" fill="url(#gC)" transform="rotate(-4 513 1606)"/><ellipse cx="324" cy="1970" rx="7.8" ry="7.4" fill="url(#gC)" transform="rotate(40 324 1970)"/><ellipse cx="498" cy="1552" rx="8.9" ry="7.5" fill="url(#gB)" transform="rotate(12 498 1552)"/><ellipse cx="291" cy="2012" rx="8.0" ry="5.6" fill="url(#gG)" transform="rotate(31 291 2012)"/><ellipse cx="561" cy="1541" rx="10.3" ry="7.6" fill="url(#gB)" transform="rotate(-45 561 1541)"/><ellipse cx="296" cy="1756" rx="7.0" ry="6.0" fill="url(#gC)" transform="rotate(46 296 1756)"/><ellipse cx="395" cy="1897" rx="7.1" ry="5.2" fill="url(#gB)" transform="rotate(55 395 1897)"/><ellipse cx="315" cy="1875" rx="7.4" ry="5.9" fill="url(#gG)" transform="rotate(15 315 1875)"/><ellipse cx="402" cy="2082" rx="7.1" ry="6.8" fill="url(#gB)" transform="rotate(38 402 2082)"/><ellipse cx="408" cy="1740" rx="11.3" ry="7.3" fill="url(#gC)" transform="rotate(26 408 1740)"/><ellipse cx="370" cy="1851" rx="6.8" ry="6.5" fill="url(#gC)" transform="rotate(-40 370 1851)"/><ellipse cx="322" cy="1814" rx="6.7" ry="5.1" fill="url(#gB)" transform="rotate(58 322 1814)"/><ellipse cx="382" cy="1888" rx="6.8" ry="6.0" fill="url(#gC)" transform="rotate(-22 382 1888)"/><ellipse cx="455" cy="1626" rx="10.0" ry="6.8" fill="url(#gB)" transform="rotate(2 455 1626)"/><ellipse cx="341" cy="1765" rx="11.7" ry="7.4" fill="url(#gY)" transform="rotate(-26 341 1765)"/><ellipse cx="456" cy="1773" rx="9.1" ry="6.4" fill="url(#gB)" transform="rotate(44 456 1773)"/><ellipse cx="295" cy="2039" rx="9.2" ry="7.3" fill="url(#gC)" transform="rotate(39 295 2039)"/><ellipse cx="443" cy="1936" rx="9.1" ry="7.8" fill="url(#gG)" transform="rotate(-47 443 1936)"/><ellipse cx="479" cy="1544" rx="9.7" ry="7.6" fill="url(#gC)" transform="rotate(30 479 1544)"/><ellipse cx="424" cy="2054" rx="9.3" ry="6.3" fill="url(#gB)" transform="rotate(47 424 2054)"/><ellipse cx="413" cy="1614" rx="8.4" ry="5.6" fill="url(#gB)" transform="rotate(36 413 1614)"/><ellipse cx="539" cy="1518" rx="12.3" ry="8.0" fill="url(#gB)" transform="rotate(-8 539 1518)"/><ellipse cx="433" cy="1580" rx="8.1" ry="5.5" fill="url(#gB)" transform="rotate(27 433 1580)"/><ellipse cx="308" cy="1787" rx="7.3" ry="6.8" fill="url(#gB)" transform="rotate(-15 308 1787)"/><ellipse cx="449" cy="2005" rx="8.2" ry="7.5" fill="url(#gB)" transform="rotate(40 449 2005)"/><ellipse cx="644" cy="1482" rx="8.5" ry="5.3" fill="url(#gC)" transform="rotate(-35 644 1482)"/><ellipse cx="433" cy="1751" rx="7.9" ry="5.8" fill="url(#gC)" transform="rotate(-59 433 1751)"/><ellipse cx="304" cy="2013" rx="7.5" ry="5.8" fill="url(#gC)" transform="rotate(-20 304 2013)"/><ellipse cx="513" cy="1785" rx="8.0" ry="5.8" fill="url(#gB)" transform="rotate(-10 513 1785)"/><ellipse cx="367" cy="2042" rx="7.1" ry="6.5" fill="url(#gB)" transform="rotate(-26 367 2042)"/><ellipse cx="596" cy="1519" rx="10.5" ry="6.9" fill="url(#gB)" transform="rotate(-23 596 1519)"/><ellipse cx="395" cy="1716" rx="11.1" ry="7.2" fill="url(#gB)" transform="rotate(-29 395 1716)"/><ellipse cx="438" cy="1726" rx="8.1" ry="5.2" fill="url(#gC)" transform="rotate(-53 438 1726)"/><ellipse cx="565" cy="1583" rx="7.0" ry="5.7" fill="url(#gB)" transform="rotate(50 565 1583)"/><ellipse cx="523" cy="1717" rx="7.2" ry="6.3" fill="url(#gB)" transform="rotate(41 523 1717)"/><ellipse cx="578" cy="1564" rx="5.9" ry="5.9" fill="url(#gB)" transform="rotate(13 578 1564)"/><ellipse cx="412" cy="1763" rx="9.9" ry="6.9" fill="url(#gC)" transform="rotate(-54 412 1763)"/><ellipse cx="300" cy="1979" rx="9.0" ry="5.9" fill="url(#gC)" transform="rotate(49 300 1979)"/><ellipse cx="495" cy="1569" rx="8.3" ry="5.9" fill="url(#gB)" transform="rotate(-3 495 1569)"/><ellipse cx="372" cy="1996" rx="9.1" ry="6.4" fill="url(#gB)" transform="rotate(-9 372 1996)"/><ellipse cx="305" cy="1980" rx="6.5" ry="5.3" fill="url(#gC)" transform="rotate(-57 305 1980)"/><ellipse cx="682" cy="1419" rx="7.2" ry="5.8" fill="url(#gB)" transform="rotate(14 682 1419)"/><ellipse cx="454" cy="1619" rx="9.4" ry="7.0" fill="url(#gY)" transform="rotate(-54 454 1619)"/><ellipse cx="434" cy="2044" rx="8.1" ry="6.6" fill="url(#gB)" transform="rotate(10 434 2044)"/><ellipse cx="423" cy="1746" rx="11.3" ry="7.1" fill="url(#gY)" transform="rotate(32 423 1746)"/><ellipse cx="454" cy="1728" rx="8.3" ry="5.7" fill="url(#gB)" transform="rotate(34 454 1728)"/><ellipse cx="326" cy="2027" rx="9.1" ry="5.7" fill="url(#gB)" transform="rotate(41 326 2027)"/><ellipse cx="395" cy="1714" rx="10.2" ry="6.4" fill="url(#gC)" transform="rotate(-45 395 1714)"/><ellipse cx="436" cy="1848" rx="9.7" ry="7.2" fill="url(#gB)" transform="rotate(50 436 1848)"/><ellipse cx="337" cy="2012" rx="10.4" ry="7.8" fill="url(#gB)" transform="rotate(-16 337 2012)"/><ellipse cx="397" cy="1964" rx="6.4" ry="6.2" fill="url(#gB)" transform="rotate(51 397 1964)"/><ellipse cx="578" cy="1600" rx="7.7" ry="5.3" fill="url(#gC)" transform="rotate(-10 578 1600)"/><ellipse cx="536" cy="1502" rx="11.5" ry="7.5" fill="url(#gB)" transform="rotate(-9 536 1502)"/><ellipse cx="300" cy="1808" rx="10.2" ry="7.9" fill="url(#gB)" transform="rotate(24 300 1808)"/><ellipse cx="414" cy="2055" rx="6.0" ry="6.0" fill="url(#gB)" transform="rotate(-50 414 2055)"/><ellipse cx="389" cy="1916" rx="7.5" ry="5.8" fill="url(#gB)" transform="rotate(-20 389 1916)"/><ellipse cx="449" cy="1932" rx="11.1" ry="7.6" fill="url(#gB)" transform="rotate(48 449 1932)"/><ellipse cx="440" cy="1616" rx="5.9" ry="5.8" fill="url(#gC)" transform="rotate(22 440 1616)"/><ellipse cx="491" cy="1874" rx="9.6" ry="6.3" fill="url(#gC)" transform="rotate(-26 491 1874)"/><ellipse cx="628" cy="1575" rx="9.5" ry="7.4" fill="url(#gB)" transform="rotate(13 628 1575)"/><ellipse cx="435" cy="1679" rx="9.5" ry="6.0" fill="url(#gB)" transform="rotate(15 435 1679)"/><ellipse cx="406" cy="1973" rx="9.2" ry="7.2" fill="url(#gB)" transform="rotate(24 406 1973)"/><ellipse cx="843" cy="1324" rx="7.7" ry="7.5" fill="url(#gC)" transform="rotate(-39 843 1324)"/><ellipse cx="972" cy="1178" rx="7.8" ry="6.7" fill="url(#gB)" transform="rotate(-19 972 1178)"/><ellipse cx="900" cy="1216" rx="8.6" ry="7.4" fill="url(#gB)" transform="rotate(32 900 1216)"/><ellipse cx="962" cy="1211" rx="8.2" ry="5.7" fill="url(#gC)" transform="rotate(45 962 1211)"/><ellipse cx="1133" cy="1343" rx="8.6" ry="7.7" fill="url(#gB)" transform="rotate(-44 1133 1343)"/><ellipse cx="1110" cy="1345" rx="11.1" ry="7.2" fill="url(#gG)" transform="rotate(54 1110 1345)"/><ellipse cx="1032" cy="1180" rx="8.8" ry="7.4" fill="url(#gB)" transform="rotate(-45 1032 1180)"/><ellipse cx="752" cy="1355" rx="8.3" ry="6.2" fill="url(#gB)" transform="rotate(7 752 1355)"/><ellipse cx="928" cy="1313" rx="6.5" ry="5.4" fill="url(#gB)" transform="rotate(55 928 1313)"/><ellipse cx="929" cy="1278" rx="8.0" ry="5.8" fill="url(#gC)" transform="rotate(24 929 1278)"/><ellipse cx="1231" cy="1333" rx="11.3" ry="7.9" fill="url(#gB)" transform="rotate(-10 1231 1333)"/><ellipse cx="1141" cy="1127" rx="7.8" ry="7.2" fill="url(#gC)" transform="rotate(-51 1141 1127)"/><ellipse cx="1361" cy="1255" rx="7.4" ry="7.1" fill="url(#gB)" transform="rotate(-5 1361 1255)"/><ellipse cx="1282" cy="1106" rx="8.3" ry="5.3" fill="url(#gC)" transform="rotate(-59 1282 1106)"/><ellipse cx="1094" cy="1138" rx="10.4" ry="7.8" fill="url(#gB)" transform="rotate(8 1094 1138)"/><ellipse cx="985" cy="1308" rx="9.3" ry="7.1" fill="url(#gB)" transform="rotate(7 985 1308)"/><ellipse cx="1145" cy="1273" rx="7.9" ry="7.4" fill="url(#gB)" transform="rotate(1 1145 1273)"/><ellipse cx="1200" cy="1182" rx="6.3" ry="6.2" fill="url(#gB)" transform="rotate(23 1200 1182)"/><ellipse cx="1113" cy="1174" rx="7.2" ry="6.1" fill="url(#gG)" transform="rotate(3 1113 1174)"/><ellipse cx="1374" cy="1116" rx="7.3" ry="5.8" fill="url(#gB)" transform="rotate(26 1374 1116)"/><ellipse cx="1200" cy="1357" rx="9.2" ry="6.8" fill="url(#gC)" transform="rotate(-36 1200 1357)"/><ellipse cx="997" cy="1318" rx="8.2" ry="7.5" fill="url(#gB)" transform="rotate(11 997 1318)"/><ellipse cx="1060" cy="1115" rx="9.9" ry="7.4" fill="url(#gB)" transform="rotate(14 1060 1115)"/><ellipse cx="1236" cy="1248" rx="8.5" ry="5.7" fill="url(#gG)" transform="rotate(40 1236 1248)"/><ellipse cx="1245" cy="1302" rx="8.4" ry="6.6" fill="url(#gC)" transform="rotate(-33 1245 1302)"/><ellipse cx="891" cy="1307" rx="6.9" ry="5.8" fill="url(#gB)" transform="rotate(53 891 1307)"/><ellipse cx="1145" cy="1097" rx="8.1" ry="7.8" fill="url(#gB)" transform="rotate(46 1145 1097)"/><ellipse cx="1139" cy="1158" rx="9.6" ry="7.4" fill="url(#gB)" transform="rotate(-7 1139 1158)"/><ellipse cx="1128" cy="1210" rx="8.7" ry="6.7" fill="url(#gB)" transform="rotate(-11 1128 1210)"/><ellipse cx="1370" cy="1131" rx="10.1" ry="7.4" fill="url(#gB)" transform="rotate(-16 1370 1131)"/><ellipse cx="1285" cy="1281" rx="8.0" ry="7.0" fill="url(#gG)" transform="rotate(-37 1285 1281)"/><ellipse cx="1221" cy="1112" rx="8.5" ry="7.1" fill="url(#gB)" transform="rotate(34 1221 1112)"/><ellipse cx="1336" cy="1154" rx="8.6" ry="6.7" fill="url(#gC)" transform="rotate(-48 1336 1154)"/><ellipse cx="788" cy="1319" rx="8.8" ry="6.3" fill="url(#gB)" transform="rotate(36 788 1319)"/><ellipse cx="1268" cy="1173" rx="5.6" ry="5.2" fill="url(#gC)" transform="rotate(-2 1268 1173)"/><ellipse cx="1181" cy="1250" rx="10.7" ry="7.6" fill="url(#gC)" transform="rotate(-58 1181 1250)"/><ellipse cx="1111" cy="1237" rx="10.7" ry="7.1" fill="url(#gB)" transform="rotate(-31 1111 1237)"/><ellipse cx="1319" cy="1214" rx="9.4" ry="7.7" fill="url(#gC)" transform="rotate(51 1319 1214)"/><ellipse cx="1093" cy="1242" rx="8.0" ry="7.4" fill="url(#gB)" transform="rotate(-20 1093 1242)"/><ellipse cx="1140" cy="1322" rx="9.1" ry="5.8" fill="url(#gB)" transform="rotate(-37 1140 1322)"/><ellipse cx="932" cy="1231" rx="8.9" ry="6.7" fill="url(#gC)" transform="rotate(25 932 1231)"/><ellipse cx="1344" cy="1211" rx="10.1" ry="6.8" fill="url(#gB)" transform="rotate(-29 1344 1211)"/><ellipse cx="1159" cy="1110" rx="5.7" ry="5.4" fill="url(#gC)" transform="rotate(0 1159 1110)"/><ellipse cx="1157" cy="1127" rx="8.2" ry="7.7" fill="url(#gB)" transform="rotate(-28 1157 1127)"/><ellipse cx="1071" cy="1159" rx="7.9" ry="6.0" fill="url(#gB)" transform="rotate(-41 1071 1159)"/><ellipse cx="1255" cy="1130" rx="11.6" ry="7.9" fill="url(#gB)" transform="rotate(49 1255 1130)"/><ellipse cx="947" cy="1282" rx="6.2" ry="5.6" fill="url(#gC)" transform="rotate(31 947 1282)"/><ellipse cx="1326" cy="1203" rx="10.2" ry="6.9" fill="url(#gB)" transform="rotate(-21 1326 1203)"/><ellipse cx="1104" cy="1187" rx="6.5" ry="5.6" fill="url(#gB)" transform="rotate(14 1104 1187)"/><ellipse cx="934" cy="1185" rx="7.2" ry="7.1" fill="url(#gB)" transform="rotate(-36 934 1185)"/><ellipse cx="972" cy="1288" rx="7.8" ry="7.5" fill="url(#gB)" transform="rotate(53 972 1288)"/><ellipse cx="1273" cy="1133" rx="7.9" ry="6.7" fill="url(#gY)" transform="rotate(25 1273 1133)"/><ellipse cx="1370" cy="1091" rx="8.7" ry="7.2" fill="url(#gB)" transform="rotate(-44 1370 1091)"/><ellipse cx="958" cy="1324" rx="9.5" ry="6.9" fill="url(#gB)" transform="rotate(-0 958 1324)"/><ellipse cx="1348" cy="1253" rx="6.2" ry="6.1" fill="url(#gC)" transform="rotate(-17 1348 1253)"/><ellipse cx="1203" cy="1224" rx="8.9" ry="6.1" fill="url(#gC)" transform="rotate(-4 1203 1224)"/><ellipse cx="1264" cy="1074" rx="9.4" ry="6.9" fill="url(#gB)" transform="rotate(-41 1264 1074)"/><ellipse cx="1293" cy="1156" rx="8.9" ry="6.0" fill="url(#gB)" transform="rotate(26 1293 1156)"/><ellipse cx="1270" cy="1260" rx="6.4" ry="5.4" fill="url(#gC)" transform="rotate(-20 1270 1260)"/><ellipse cx="1324" cy="1284" rx="11.9" ry="7.9" fill="url(#gB)" transform="rotate(-31 1324 1284)"/><ellipse cx="1260" cy="1323" rx="9.7" ry="6.1" fill="url(#gB)" transform="rotate(-44 1260 1323)"/><ellipse cx="1012" cy="1198" rx="6.4" ry="5.4" fill="url(#gB)" transform="rotate(16 1012 1198)"/><ellipse cx="1133" cy="1331" rx="6.9" ry="5.1" fill="url(#gB)" transform="rotate(37 1133 1331)"/><ellipse cx="1181" cy="1354" rx="7.7" ry="7.2" fill="url(#gG)" transform="rotate(24 1181 1354)"/><ellipse cx="1225" cy="1231" rx="10.1" ry="6.7" fill="url(#gB)" transform="rotate(-26 1225 1231)"/><ellipse cx="1019" cy="1298" rx="7.7" ry="7.0" fill="url(#gB)" transform="rotate(-39 1019 1298)"/><ellipse cx="1019" cy="1300" rx="7.9" ry="7.1" fill="url(#gB)" transform="rotate(29 1019 1300)"/><ellipse cx="1354" cy="1166" rx="7.2" ry="5.6" fill="url(#gB)" transform="rotate(30 1354 1166)"/><ellipse cx="1204" cy="1098" rx="5.5" ry="5.4" fill="url(#gC)" transform="rotate(10 1204 1098)"/><ellipse cx="1191" cy="1188" rx="8.2" ry="7.8" fill="url(#gG)" transform="rotate(0 1191 1188)"/><ellipse cx="1046" cy="1631" rx="7.5" ry="7.2" fill="url(#gG)" transform="rotate(39 1046 1631)"/><ellipse cx="715" cy="1493" rx="12.8" ry="8.4" fill="url(#gG)" transform="rotate(38 715 1493)"/><ellipse cx="566" cy="1893" rx="11.3" ry="8.8" fill="url(#gB)" transform="rotate(15 566 1893)"/><ellipse cx="1017" cy="1486" rx="8.1" ry="6.8" fill="url(#gG)" transform="rotate(-22 1017 1486)"/><ellipse cx="590" cy="2064" rx="12.7" ry="8.7" fill="url(#gC)" transform="rotate(-30 590 2064)"/><ellipse cx="685" cy="1957" rx="10.3" ry="7.0" fill="url(#gC)" transform="rotate(-37 685 1957)"/><ellipse cx="879" cy="1685" rx="8.6" ry="6.8" fill="url(#gC)" transform="rotate(-27 879 1685)"/><ellipse cx="935" cy="1458" rx="6.9" ry="6.1" fill="url(#gB)" transform="rotate(9 935 1458)"/><ellipse cx="833" cy="1692" rx="7.9" ry="7.6" fill="url(#gG)" transform="rotate(-45 833 1692)"/><ellipse cx="728" cy="1955" rx="10.1" ry="6.7" fill="url(#gG)" transform="rotate(-49 728 1955)"/><ellipse cx="760" cy="1444" rx="10.0" ry="6.8" fill="url(#gB)" transform="rotate(48 760 1444)"/><ellipse cx="934" cy="1976" rx="7.4" ry="6.6" fill="url(#gB)" transform="rotate(51 934 1976)"/><ellipse cx="776" cy="1645" rx="12.6" ry="8.2" fill="url(#gC)" transform="rotate(27 776 1645)"/><ellipse cx="609" cy="1935" rx="7.4" ry="7.1" fill="url(#gC)" transform="rotate(-22 609 1935)"/><ellipse cx="614" cy="2009" rx="12.9" ry="8.1" fill="url(#gB)" transform="rotate(28 614 2009)"/><ellipse cx="1101" cy="1490" rx="8.5" ry="6.1" fill="url(#gG)" transform="rotate(31 1101 1490)"/><ellipse cx="636" cy="1924" rx="8.9" ry="8.1" fill="url(#gB)" transform="rotate(39 636 1924)"/><ellipse cx="823" cy="1566" rx="11.4" ry="8.8" fill="url(#gC)" transform="rotate(-12 823 1566)"/><ellipse cx="797" cy="2006" rx="10.8" ry="6.8" fill="url(#gC)" transform="rotate(58 797 2006)"/><ellipse cx="913" cy="1829" rx="6.9" ry="6.1" fill="url(#gC)" transform="rotate(-1 913 1829)"/><ellipse cx="1067" cy="1524" rx="8.4" ry="6.4" fill="url(#gC)" transform="rotate(6 1067 1524)"/><ellipse cx="765" cy="1579" rx="10.8" ry="8.2" fill="url(#gC)" transform="rotate(-2 765 1579)"/><ellipse cx="951" cy="2023" rx="11.0" ry="7.4" fill="url(#gB)" transform="rotate(14 951 2023)"/><ellipse cx="545" cy="1849" rx="9.8" ry="8.8" fill="url(#gB)" transform="rotate(1 545 1849)"/><ellipse cx="957" cy="1365" rx="12.8" ry="8.0" fill="url(#gG)" transform="rotate(-59 957 1365)"/><ellipse cx="1173" cy="1563" rx="10.4" ry="7.9" fill="url(#gR)" transform="rotate(-21 1173 1563)"/><ellipse cx="1189" cy="1605" rx="9.4" ry="9.0" fill="url(#gR)" transform="rotate(4 1189 1605)"/><ellipse cx="1427" cy="1728" rx="11.1" ry="7.2" fill="url(#gR)" transform="rotate(46 1427 1728)"/><ellipse cx="1596" cy="1904" rx="11.4" ry="9.0" fill="url(#gR)" transform="rotate(-35 1596 1904)"/><ellipse cx="1609" cy="1966" rx="11.2" ry="7.4" fill="url(#gR)" transform="rotate(-30 1609 1966)"/><ellipse cx="1678" cy="1921" rx="10.9" ry="7.9" fill="url(#gR)" transform="rotate(-34 1678 1921)"/><ellipse cx="849" cy="1517" rx="13.1" ry="8.6" fill="url(#gR)" transform="rotate(-26 849 1517)"/><ellipse cx="909" cy="1512" rx="10.4" ry="8.7" fill="url(#gR)" transform="rotate(19 909 1512)"/><ellipse cx="1757" cy="2012" rx="11.2" ry="7.4" fill="url(#gR)" transform="rotate(-17 1757 2012)"/><ellipse cx="1152" cy="1654" rx="9.7" ry="7.4" fill="url(#gR)" transform="rotate(53 1152 1654)"/><ellipse cx="1213" cy="1702" rx="9.9" ry="7.2" fill="url(#gR)" transform="rotate(3 1213 1702)"/><ellipse cx="1480" cy="1993" rx="13.1" ry="8.6" fill="url(#gR)" transform="rotate(-4 1480 1993)"/><ellipse cx="1540" cy="2043" rx="11.9" ry="7.9" fill="url(#gR)" transform="rotate(-15 1540 2043)"/><ellipse cx="1259" cy="1560" rx="15.2" ry="9.9" fill="url(#gR)" transform="rotate(-18 1259 1560)"/><ellipse cx="1690" cy="2062" rx="11.6" ry="7.3" fill="url(#gR)" transform="rotate(40 1690 2062)"/><ellipse cx="1332" cy="1641" rx="8.7" ry="7.4" fill="url(#gR)" transform="rotate(-38 1332 1641)"/>
</g>
<ellipse cx="1420" cy="1580" rx="33.800000000000004" ry="26" fill="#170c1f" filter="url(#b24)" opacity="0.9"/>
<ellipse cx="1470" cy="1730" rx="28.6" ry="22" fill="#170c1f" filter="url(#b24)" opacity="0.9"/>
<ellipse cx="1330" cy="1820" rx="26.0" ry="20" fill="#170c1f" filter="url(#b24)" opacity="0.9"/>
<ellipse cx="1560" cy="1900" rx="31.200000000000003" ry="24" fill="#170c1f" filter="url(#b24)" opacity="0.9"/>
<ellipse cx="1640" cy="1870" rx="26.0" ry="20" fill="#170c1f" filter="url(#b24)" opacity="0.9"/>
<ellipse cx="1680" cy="2060" rx="36.4" ry="28" fill="#170c1f" filter="url(#b24)" opacity="0.9"/>
<ellipse cx="1500" cy="2010" rx="23.400000000000002" ry="18" fill="#170c1f" filter="url(#b24)" opacity="0.9"/>
<ellipse cx="1250" cy="1700" rx="23.400000000000002" ry="18" fill="#170c1f" filter="url(#b24)" opacity="0.9"/>
<ellipse cx="1600" cy="1650" rx="26.0" ry="20" fill="#170c1f" filter="url(#b24)" opacity="0.9"/>
<ellipse cx="1215" cy="1960" rx="20.8" ry="16" fill="#170c1f" filter="url(#b24)" opacity="0.9"/>
<path d="M288.0 1640.0 C295.0 1634.2 311.3 1618.7 330.0 1605.0 C348.7 1591.3 376.7 1576.0 400.0 1558.0 C423.3 1540.0 448.3 1516.3 470.0 1497.0 C491.7 1477.7 510.8 1459.5 530.0 1442.0 C549.2 1424.5 575.8 1400.3 585.0 1392.0" fill="none" stroke="#6a9a38" stroke-width="34" filter="url(#b8)" transform="translate(8 10)" opacity="0.75"/>
<path d="M288.0 1640.0 C295.0 1634.2 311.3 1618.7 330.0 1605.0 C348.7 1591.3 376.7 1576.0 400.0 1558.0 C423.3 1540.0 448.3 1516.3 470.0 1497.0 C491.7 1477.7 510.8 1459.5 530.0 1442.0 C549.2 1424.5 575.8 1400.3 585.0 1392.0" fill="none" stroke="#8a7a28" stroke-width="14" filter="url(#b4)" transform="translate(3 4)" opacity="0.8"/>
<g filter="url(#b2)"><ellipse cx="292.5" cy="1642.1" rx="13.9" ry="9.3" fill="url(#gH)" transform="rotate(-40 292.5 1642.1)"/><ellipse cx="293.9" cy="1640.4" rx="14.7" ry="9.8" fill="url(#gH)" transform="rotate(-40 293.9 1640.4)"/><ellipse cx="297.6" cy="1635.8" rx="12.0" ry="8.0" fill="url(#gH)" transform="rotate(-40 297.6 1635.8)"/><ellipse cx="306.0" cy="1633.9" rx="12.1" ry="8.1" fill="url(#gH)" transform="rotate(-40 306.0 1633.9)"/><ellipse cx="309.6" cy="1627.0" rx="10.8" ry="7.2" fill="url(#gH)" transform="rotate(-40 309.6 1627.0)"/><ellipse cx="314.3" cy="1625.3" rx="12.6" ry="8.4" fill="url(#gH)" transform="rotate(-40 314.3 1625.3)"/><ellipse cx="316.6" cy="1622.1" rx="16.0" ry="10.7" fill="url(#gH)" transform="rotate(-40 316.6 1622.1)"/><ellipse cx="321.1" cy="1616.0" rx="14.2" ry="9.5" fill="url(#gH)" transform="rotate(-40 321.1 1616.0)"/><ellipse cx="324.6" cy="1612.8" rx="10.9" ry="7.2" fill="url(#gH)" transform="rotate(-40 324.6 1612.8)"/><ellipse cx="329.1" cy="1611.7" rx="11.6" ry="7.8" fill="url(#gH)" transform="rotate(-40 329.1 1611.7)"/><ellipse cx="339.6" cy="1605.0" rx="12.6" ry="8.4" fill="url(#gH)" transform="rotate(-34 339.6 1605.0)"/><ellipse cx="346.0" cy="1602.2" rx="11.3" ry="7.5" fill="url(#gH)" transform="rotate(-34 346.0 1602.2)"/><ellipse cx="352.4" cy="1594.2" rx="15.1" ry="10.0" fill="url(#gH)" transform="rotate(-34 352.4 1594.2)"/><ellipse cx="358.2" cy="1593.2" rx="14.8" ry="9.9" fill="url(#gH)" transform="rotate(-34 358.2 1593.2)"/><ellipse cx="366.4" cy="1587.5" rx="10.9" ry="7.3" fill="url(#gH)" transform="rotate(-34 366.4 1587.5)"/><ellipse cx="374.0" cy="1583.4" rx="10.7" ry="7.2" fill="url(#gH)" transform="rotate(-34 374.0 1583.4)"/><ellipse cx="383.2" cy="1575.0" rx="12.9" ry="8.6" fill="url(#gH)" transform="rotate(-34 383.2 1575.0)"/><ellipse cx="391.1" cy="1571.9" rx="15.1" ry="10.1" fill="url(#gH)" transform="rotate(-34 391.1 1571.9)"/><ellipse cx="398.3" cy="1568.3" rx="12.6" ry="8.4" fill="url(#gH)" transform="rotate(-34 398.3 1568.3)"/><ellipse cx="404.4" cy="1561.4" rx="11.9" ry="7.9" fill="url(#gH)" transform="rotate(-41 404.4 1561.4)"/><ellipse cx="409.7" cy="1556.3" rx="16.4" ry="10.9" fill="url(#gH)" transform="rotate(-41 409.7 1556.3)"/><ellipse cx="418.2" cy="1546.5" rx="15.3" ry="10.2" fill="url(#gH)" transform="rotate(-41 418.2 1546.5)"/><ellipse cx="424.8" cy="1539.5" rx="11.8" ry="7.9" fill="url(#gH)" transform="rotate(-41 424.8 1539.5)"/><ellipse cx="433.5" cy="1532.4" rx="11.5" ry="7.6" fill="url(#gH)" transform="rotate(-41 433.5 1532.4)"/><ellipse cx="442.3" cy="1527.2" rx="11.0" ry="7.3" fill="url(#gH)" transform="rotate(-41 442.3 1527.2)"/><ellipse cx="447.6" cy="1523.5" rx="13.4" ry="8.9" fill="url(#gH)" transform="rotate(-41 447.6 1523.5)"/><ellipse cx="457.0" cy="1517.7" rx="14.1" ry="9.4" fill="url(#gH)" transform="rotate(-41 457.0 1517.7)"/><ellipse cx="462.4" cy="1508.5" rx="14.2" ry="9.5" fill="url(#gH)" transform="rotate(-41 462.4 1508.5)"/><ellipse cx="472.7" cy="1501.5" rx="10.6" ry="7.0" fill="url(#gH)" transform="rotate(-41 472.7 1501.5)"/><ellipse cx="477.4" cy="1496.8" rx="10.8" ry="7.2" fill="url(#gH)" transform="rotate(-43 477.4 1496.8)"/><ellipse cx="483.5" cy="1489.1" rx="13.2" ry="8.8" fill="url(#gH)" transform="rotate(-43 483.5 1489.1)"/><ellipse cx="493.0" cy="1482.4" rx="12.2" ry="8.2" fill="url(#gH)" transform="rotate(-43 493.0 1482.4)"/><ellipse cx="494.8" cy="1481.1" rx="11.3" ry="7.6" fill="url(#gH)" transform="rotate(-43 494.8 1481.1)"/><ellipse cx="502.6" cy="1474.6" rx="15.0" ry="10.0" fill="url(#gH)" transform="rotate(-43 502.6 1474.6)"/><ellipse cx="510.5" cy="1468.6" rx="10.8" ry="7.2" fill="url(#gH)" transform="rotate(-43 510.5 1468.6)"/><ellipse cx="517.1" cy="1460.9" rx="16.3" ry="10.9" fill="url(#gH)" transform="rotate(-43 517.1 1460.9)"/><ellipse cx="520.7" cy="1456.6" rx="13.4" ry="8.9" fill="url(#gH)" transform="rotate(-43 520.7 1456.6)"/><ellipse cx="529.9" cy="1447.8" rx="14.4" ry="9.6" fill="url(#gH)" transform="rotate(-43 529.9 1447.8)"/><ellipse cx="534.4" cy="1445.3" rx="16.3" ry="10.9" fill="url(#gH)" transform="rotate(-42 534.4 1445.3)"/><ellipse cx="540.7" cy="1438.9" rx="11.6" ry="7.7" fill="url(#gH)" transform="rotate(-42 540.7 1438.9)"/><ellipse cx="548.4" cy="1433.6" rx="11.4" ry="7.6" fill="url(#gH)" transform="rotate(-42 548.4 1433.6)"/><ellipse cx="552.4" cy="1425.8" rx="12.2" ry="8.2" fill="url(#gH)" transform="rotate(-42 552.4 1425.8)"/><ellipse cx="556.3" cy="1425.0" rx="12.2" ry="8.1" fill="url(#gH)" transform="rotate(-42 556.3 1425.0)"/><ellipse cx="564.4" cy="1415.4" rx="10.7" ry="7.1" fill="url(#gH)" transform="rotate(-42 564.4 1415.4)"/><ellipse cx="568.6" cy="1414.4" rx="12.5" ry="8.4" fill="url(#gH)" transform="rotate(-42 568.6 1414.4)"/><ellipse cx="577.4" cy="1405.6" rx="15.1" ry="10.1" fill="url(#gH)" transform="rotate(-42 577.4 1405.6)"/><ellipse cx="581.1" cy="1403.7" rx="14.1" ry="9.4" fill="url(#gH)" transform="rotate(-42 581.1 1403.7)"/><ellipse cx="586.9" cy="1394.8" rx="11.2" ry="7.5" fill="url(#gH)" transform="rotate(-42 586.9 1394.8)"/></g>
<path d="M288.0 1640.0 C295.0 1634.2 311.3 1618.7 330.0 1605.0 C348.7 1591.3 376.7 1576.0 400.0 1558.0 C423.3 1540.0 448.3 1516.3 470.0 1497.0 C491.7 1477.7 510.8 1459.5 530.0 1442.0 C549.2 1424.5 575.8 1400.3 585.0 1392.0" fill="none" stroke="#560a06" stroke-width="9" filter="url(#b3)" transform="translate(3 4)" opacity="0.9"/>
<path d="M585.0 1392.0 C597.5 1382.0 634.2 1354.7 660.0 1332.0 C685.8 1309.3 716.7 1278.0 740.0 1256.0 C763.3 1234.0 790.0 1209.3 800.0 1200.0" fill="none" stroke="#4a9a60" stroke-width="24" filter="url(#b8)" transform="translate(10 12)" opacity="0.5"/>
<path d="M585.0 1392.0 C597.5 1382.0 634.2 1354.7 660.0 1332.0 C685.8 1309.3 716.7 1278.0 740.0 1256.0 C763.3 1234.0 790.0 1209.3 800.0 1200.0" fill="none" stroke="#9a9a30" stroke-width="8" stroke-dasharray="10 12" filter="url(#b4)" transform="translate(6 8)" opacity="0.7"/>
<path d="M1751.0 1822.0 C1754.5 1829.7 1763.8 1850.8 1772.0 1868.0 C1780.2 1885.2 1790.7 1906.3 1800.0 1925.0 C1809.3 1943.7 1818.8 1961.7 1828.0 1980.0 C1837.2 1998.3 1846.8 2016.8 1855.0 2035.0 C1863.2 2053.2 1873.3 2080.0 1877.0 2089.0" fill="none" stroke="#5a9a48" stroke-width="34" filter="url(#b8)" transform="translate(-8 0)" opacity="0.7"/>
<path d="M1751.0 1822.0 C1754.5 1829.7 1763.8 1850.8 1772.0 1868.0 C1780.2 1885.2 1790.7 1906.3 1800.0 1925.0 C1809.3 1943.7 1818.8 1961.7 1828.0 1980.0 C1837.2 1998.3 1846.8 2016.8 1855.0 2035.0 C1863.2 2053.2 1873.3 2080.0 1877.0 2089.0" fill="none" stroke="#8a7a28" stroke-width="14" filter="url(#b4)" transform="translate(-6 0)" opacity="0.8"/>
<g filter="url(#b2)"><ellipse cx="1743.5" cy="1823.1" rx="18.9" ry="12.6" fill="url(#gH)" transform="rotate(65 1743.5 1823.1)"/><ellipse cx="1748.3" cy="1830.5" rx="13.8" ry="9.2" fill="url(#gH)" transform="rotate(65 1748.3 1830.5)"/><ellipse cx="1751.1" cy="1834.4" rx="14.1" ry="9.4" fill="url(#gH)" transform="rotate(65 1751.1 1834.4)"/><ellipse cx="1751.6" cy="1838.5" rx="12.1" ry="8.1" fill="url(#gH)" transform="rotate(65 1751.6 1838.5)"/><ellipse cx="1756.9" cy="1848.1" rx="13.4" ry="8.9" fill="url(#gH)" transform="rotate(65 1756.9 1848.1)"/><ellipse cx="1761.0" cy="1852.2" rx="17.0" ry="11.3" fill="url(#gH)" transform="rotate(65 1761.0 1852.2)"/><ellipse cx="1758.8" cy="1857.4" rx="13.0" ry="8.6" fill="url(#gH)" transform="rotate(65 1758.8 1857.4)"/><ellipse cx="1764.9" cy="1863.5" rx="16.0" ry="10.7" fill="url(#gH)" transform="rotate(65 1764.9 1863.5)"/><ellipse cx="1765.3" cy="1869.5" rx="17.3" ry="11.5" fill="url(#gH)" transform="rotate(64 1765.3 1869.5)"/><ellipse cx="1772.6" cy="1879.4" rx="17.1" ry="11.4" fill="url(#gH)" transform="rotate(64 1772.6 1879.4)"/><ellipse cx="1774.8" cy="1882.7" rx="14.9" ry="9.9" fill="url(#gH)" transform="rotate(64 1774.8 1882.7)"/><ellipse cx="1777.7" cy="1888.9" rx="12.2" ry="8.1" fill="url(#gH)" transform="rotate(64 1777.7 1888.9)"/><ellipse cx="1783.1" cy="1897.8" rx="14.6" ry="9.8" fill="url(#gH)" transform="rotate(64 1783.1 1897.8)"/><ellipse cx="1786.4" cy="1907.2" rx="13.7" ry="9.2" fill="url(#gH)" transform="rotate(64 1786.4 1907.2)"/><ellipse cx="1788.7" cy="1913.8" rx="15.3" ry="10.2" fill="url(#gH)" transform="rotate(64 1788.7 1913.8)"/><ellipse cx="1794.5" cy="1919.4" rx="16.8" ry="11.2" fill="url(#gH)" transform="rotate(64 1794.5 1919.4)"/><ellipse cx="1798.1" cy="1925.6" rx="16.0" ry="10.6" fill="url(#gH)" transform="rotate(63 1798.1 1925.6)"/><ellipse cx="1798.5" cy="1934.6" rx="19.4" ry="12.9" fill="url(#gH)" transform="rotate(63 1798.5 1934.6)"/><ellipse cx="1803.7" cy="1940.0" rx="19.1" ry="12.7" fill="url(#gH)" transform="rotate(63 1803.7 1940.0)"/><ellipse cx="1808.5" cy="1946.5" rx="18.1" ry="12.0" fill="url(#gH)" transform="rotate(63 1808.5 1946.5)"/><ellipse cx="1809.7" cy="1953.2" rx="18.3" ry="12.2" fill="url(#gH)" transform="rotate(63 1809.7 1953.2)"/><ellipse cx="1816.3" cy="1965.5" rx="15.9" ry="10.6" fill="url(#gH)" transform="rotate(63 1816.3 1965.5)"/><ellipse cx="1814.2" cy="1970.1" rx="16.0" ry="10.6" fill="url(#gH)" transform="rotate(63 1814.2 1970.1)"/><ellipse cx="1821.1" cy="1978.2" rx="19.3" ry="12.9" fill="url(#gH)" transform="rotate(63 1821.1 1978.2)"/><ellipse cx="1824.4" cy="1985.6" rx="16.3" ry="10.9" fill="url(#gH)" transform="rotate(64 1824.4 1985.6)"/><ellipse cx="1830.1" cy="1989.4" rx="18.3" ry="12.2" fill="url(#gH)" transform="rotate(64 1830.1 1989.4)"/><ellipse cx="1829.0" cy="2000.9" rx="14.3" ry="9.6" fill="url(#gH)" transform="rotate(64 1829.0 2000.9)"/><ellipse cx="1833.5" cy="2005.5" rx="16.8" ry="11.2" fill="url(#gH)" transform="rotate(64 1833.5 2005.5)"/><ellipse cx="1838.2" cy="2015.4" rx="13.9" ry="9.3" fill="url(#gH)" transform="rotate(64 1838.2 2015.4)"/><ellipse cx="1840.3" cy="2018.7" rx="18.3" ry="12.2" fill="url(#gH)" transform="rotate(64 1840.3 2018.7)"/><ellipse cx="1842.4" cy="2025.8" rx="15.2" ry="10.1" fill="url(#gH)" transform="rotate(64 1842.4 2025.8)"/><ellipse cx="1845.9" cy="2032.0" rx="16.9" ry="11.3" fill="url(#gH)" transform="rotate(64 1845.9 2032.0)"/><ellipse cx="1851.6" cy="2039.8" rx="15.3" ry="10.2" fill="url(#gH)" transform="rotate(68 1851.6 2039.8)"/><ellipse cx="1854.9" cy="2049.2" rx="14.1" ry="9.4" fill="url(#gH)" transform="rotate(68 1854.9 2049.2)"/><ellipse cx="1854.6" cy="2056.5" rx="12.9" ry="8.6" fill="url(#gH)" transform="rotate(68 1854.6 2056.5)"/><ellipse cx="1859.3" cy="2059.1" rx="19.0" ry="12.7" fill="url(#gH)" transform="rotate(68 1859.3 2059.1)"/><ellipse cx="1864.7" cy="2067.0" rx="16.8" ry="11.2" fill="url(#gH)" transform="rotate(68 1864.7 2067.0)"/><ellipse cx="1864.8" cy="2072.8" rx="13.1" ry="8.7" fill="url(#gH)" transform="rotate(68 1864.8 2072.8)"/><ellipse cx="1869.5" cy="2080.3" rx="14.1" ry="9.4" fill="url(#gH)" transform="rotate(68 1869.5 2080.3)"/><ellipse cx="1870.8" cy="2089.0" rx="15.4" ry="10.2" fill="url(#gH)" transform="rotate(68 1870.8 2089.0)"/></g>
<path d="M1751.0 1822.0 C1754.5 1829.7 1763.8 1850.8 1772.0 1868.0 C1780.2 1885.2 1790.7 1906.3 1800.0 1925.0 C1809.3 1943.7 1818.8 1961.7 1828.0 1980.0 C1837.2 1998.3 1846.8 2016.8 1855.0 2035.0 C1863.2 2053.2 1873.3 2080.0 1877.0 2089.0" fill="none" stroke="#560a06" stroke-width="9" filter="url(#b3)" transform="translate(-6 0)" opacity="0.9"/>
<path d="M1580.0 1900.0 C1590.0 1906.7 1620.0 1925.0 1640.0 1940.0 C1660.0 1955.0 1681.7 1975.0 1700.0 1990.0 C1718.3 2005.0 1736.0 2020.0 1750.0 2030.0 C1764.0 2040.0 1778.3 2046.7 1784.0 2050.0" fill="none" stroke="#5a9a40" stroke-width="22" filter="url(#b8)" opacity="0.7"/>
<path d="M1580.0 1900.0 C1590.0 1906.7 1620.0 1925.0 1640.0 1940.0 C1660.0 1955.0 1681.7 1975.0 1700.0 1990.0 C1718.3 2005.0 1736.0 2020.0 1750.0 2030.0 C1764.0 2040.0 1778.3 2046.7 1784.0 2050.0" fill="none" stroke="#8a6a20" stroke-width="7" stroke-dasharray="9 14" filter="url(#b3)" opacity="0.8"/>
</svg>
<div class="a" style="left:2405px;top:116px;width:1430px;height:2021px;background:#fff;"></div>
<div class="a" style="left:2405px;top:26px;width:1430px;height:47px;background:#404040;border-top:2px solid #5d5d5d"></div>
<div class="a" style="left:2405px;top:73px;width:1430px;height:1px;background:#8a8a8a;"></div>
<div class="a" style="left:2405px;top:74px;width:1430px;height:42px;background:#333333;"></div>
<div class="a" style="left:2406px;top:79px;width:1344px;height:32px;background:#232323;border-radius:0 16px 16px 0"></div>
<svg class="a" style="left:3680px;top:82px" width="155" height="30" viewBox="3680 82 155 30">
<circle cx="3693" cy="93.5" r="5.6" fill="none" stroke="#c8c8c8" stroke-width="1.5"/><path d="M3697 97.5 L3701.5 102" stroke="#c8c8c8" stroke-width="1.8"/><path d="M3690.5 93.5 H3695.5 M3693 91 V96" stroke="#c8c8c8" stroke-width="1.4"/>
<path d="M3730 88 L3732.1 92.9 L3737.5 93.4 L3733.4 97 L3734.6 102.2 L3730 99.5 L3725.4 102.2 L3726.6 97 L3722.5 93.4 L3727.9 92.9Z" fill="none" stroke="#c8c8c8" stroke-width="1.4" stroke-linejoin="round"/>
<circle cx="3775.5" cy="94.5" r="10.5" fill="#e0e0e0"/><circle cx="3775.5" cy="91" r="3.2" fill="#333"/><path d="M3768.5 101 Q3775.5 93.5 3782.5 101 Q3775.5 104 3768.5 101Z" fill="#333"/>
<circle cx="3811.5" cy="94.5" r="9" fill="#f28b82"/><path d="M3811.5 88.5 L3816.5 94 H3813.5 V99.5 H3809.5 V94 H3806.5Z" fill="#fff"/>
</svg>
<div class="a" style="left:2406px;top:154px;width:1429px;height:9px;background:#bdbdbd;"></div>
<div class="a" style="left:2406px;top:154px;width:6px;height:1969px;background:#bdbdbd;"></div>
<div class="a" style="left:3828px;top:154px;width:7px;height:1969px;background:#bdbdbd;"></div>
<div class="a" style="left:2412px;top:163px;width:1416px;height:35px;background:#bdbdbd;"></div>
<div class="a" style="left:2412px;top:198px;width:1416px;height:695px;background:#fff;"></div>
<div class="a" style="left:2412px;top:163px;width:302px;height:35px;background:#fff;"></div>
<div class="a" style="left:2412px;top:163px;width:302px;height:2px;background:linear-gradient(#d4d4d4,#fff);"></div>
<div class="a" style="left:2412px;top:197.5px;width:302px;height:1px;background:#dcdcdc;"></div>
<svg class="a" style="left:2424px;top:169px" width="20" height="25" viewBox="0 0 20 25"><defs><linearGradient id="dg1" x1="0" y1="1" x2="1" y2="0"><stop offset="0" stop-color="#d8402a"/><stop offset="1" stop-color="#f0a050"/></linearGradient></defs><g fill="none" stroke="url(#dg1)" stroke-width="1.3" stroke-linejoin="round"><path d="M1 19.5 L4.5 9 Q10 8 13.5 4 Q11 10 7.5 12 L6.5 18.5Z"/><path d="M7.5 12.5 L8 23.5 Q17 20 17.5 8.5 Q17 3 16.5 1 Q15 9 8 12Z"/><path d="M10.5 16.5 Q14.5 12 15.5 6"/></g></svg>
<div class="t" style="left:2453px;top:170.76px;font-size:18px;color:#212121;font-weight:400;">Dask Task Stream</div>
<svg class="a" style="left:2682.5px;top:172.5px" width="16" height="16" viewBox="0 0 16 16"><path d="M1.8 1.8 L14.2 14.2 M14.2 1.8 L1.8 14.2" stroke="#616161" stroke-width="1.9" stroke-linecap="round"/></svg>
<div class="a" style="left:2714px;top:163.5px;width:302px;height:35.5px;background:#eeeeee;border-left:1px solid #bdbdbd;border-bottom:1.3px solid #b4b4b4"></div>
<svg class="a" style="left:2726px;top:169px" width="20" height="25" viewBox="0 0 20 25"><defs><linearGradient id="dg2" x1="0" y1="1" x2="1" y2="0"><stop offset="0" stop-color="#d8402a"/><stop offset="1" stop-color="#f0a050"/></linearGradient></defs><g fill="none" stroke="url(#dg2)" stroke-width="1.3" stroke-linejoin="round"><path d="M1 19.5 L4.5 9 Q10 8 13.5 4 Q11 10 7.5 12 L6.5 18.5Z"/><path d="M7.5 12.5 L8 23.5 Q17 20 17.5 8.5 Q17 3 16.5 1 Q15 9 8 12Z"/><path d="M10.5 16.5 Q14.5 12 15.5 6"/></g></svg>
<div class="t" style="left:2755px;top:170.76px;font-size:18px;color:#333;font-weight:400;">Dask Profile</div>
<svg class="a" style="left:2984.5px;top:172.5px" width="16" height="16" viewBox="0 0 16 16"><path d="M1.8 1.8 L14.2 14.2 M14.2 1.8 L1.8 14.2" stroke="#616161" stroke-width="1.9" stroke-linecap="round"/></svg>
<div class="a" style="left:2414px;top:209px;width:1414px;height:1.3px;background:#bdbdbd;"></div>
<div class="a" style="left:2414px;top:210.3px;width:1414px;height:3px;background:linear-gradient(#e8e8e8,#fff);"></div>
<div class="a" style="left:2412px;top:893px;width:1416px;height:9px;background:#bdbdbd;"></div>
<div class="a" style="left:2412px;top:902px;width:1416px;height:35px;background:#bdbdbd;"></div>
<div class="a" style="left:2412px;top:937px;width:1416px;height:588px;background:#fff;"></div>
<div class="a" style="left:2412px;top:902px;width:302px;height:35px;background:#fff;"></div>
<div class="a" style="left:2412px;top:902px;width:302px;height:2px;background:linear-gradient(#d4d4d4,#fff);"></div>
<div class="a" style="left:2412px;top:936.5px;width:302px;height:1px;background:#dcdcdc;"></div>
<svg class="a" style="left:2424px;top:908px" width="20" height="25" viewBox="0 0 20 25"><defs><linearGradient id="dg3" x1="0" y1="1" x2="1" y2="0"><stop offset="0" stop-color="#d8402a"/><stop offset="1" stop-color="#f0a050"/></linearGradient></defs><g fill="none" stroke="url(#dg3)" stroke-width="1.3" stroke-linejoin="round"><path d="M1 19.5 L4.5 9 Q10 8 13.5 4 Q11 10 7.5 12 L6.5 18.5Z"/><path d="M7.5 12.5 L8 23.5 Q17 20 17.5 8.5 Q17 3 16.5 1 Q15 9 8 12Z"/><path d="M10.5 16.5 Q14.5 12 15.5 6"/></g></svg>
<div class="t" style="left:2453px;top:909.76px;font-size:18px;color:#212121;font-weight:400;">Dask Progress</div>
<svg class="a" style="left:2682.5px;top:911.5px" width="16" height="16" viewBox="0 0 16 16"><path d="M1.8 1.8 L14.2 14.2 M14.2 1.8 L1.8 14.2" stroke="#616161" stroke-width="1.9" stroke-linecap="round"/></svg>
<div class="a" style="left:2414px;top:947.7px;width:1414px;height:1.3px;background:#bdbdbd;"></div>
<div class="a" style="left:2414px;top:949px;width:1414px;height:3px;background:linear-gradient(#e8e8e8,#fff);"></div>
<div class="a" style="left:2412px;top:1525px;width:1416px;height:10px;background:#bdbdbd;"></div>
<div class="a" style="left:2412px;top:1535px;width:1416px;height:35px;background:#bdbdbd;"></div>
<div class="a" style="left:2412px;top:1570px;width:1416px;height:545px;background:#fff;"></div>
<div class="a" style="left:2412px;top:1535px;width:302px;height:35px;background:#fff;"></div>
<div class="a" style="left:2412px;top:1535px;width:302px;height:2px;background:linear-gradient(#d4d4d4,#fff);"></div>
<div class="a" style="left:2412px;top:1569.5px;width:302px;height:1px;background:#dcdcdc;"></div>
<svg class="a" style="left:2424px;top:1541px" width="20" height="25" viewBox="0 0 20 25"><defs><linearGradient id="dg4" x1="0" y1="1" x2="1" y2="0"><stop offset="0" stop-color="#d8402a"/><stop offset="1" stop-color="#f0a050"/></linearGradient></defs><g fill="none" stroke="url(#dg4)" stroke-width="1.3" stroke-linejoin="round"><path d="M1 19.5 L4.5 9 Q10 8 13.5 4 Q11 10 7.5 12 L6.5 18.5Z"/><path d="M7.5 12.5 L8 23.5 Q17 20 17.5 8.5 Q17 3 16.5 1 Q15 9 8 12Z"/><path d="M10.5 16.5 Q14.5 12 15.5 6"/></g></svg>
<div class="t" style="left:2453px;top:1542.76px;font-size:18px;color:#212121;font-weight:400;">Dask GPU Utilization</div>
<svg class="a" style="left:2682.5px;top:1544.5px" width="16" height="16" viewBox="0 0 16 16"><path d="M1.8 1.8 L14.2 14.2 M14.2 1.8 L1.8 14.2" stroke="#616161" stroke-width="1.9" stroke-linecap="round"/></svg>
<div class="a" style="left:2714px;top:1535.5px;width:302px;height:35.5px;background:#eeeeee;border-left:1px solid #bdbdbd;border-bottom:1.3px solid #b4b4b4"></div>
<svg class="a" style="left:2726px;top:1541px" width="20" height="25" viewBox="0 0 20 25"><defs><linearGradient id="dg5" x1="0" y1="1" x2="1" y2="0"><stop offset="0" stop-color="#d8402a"/><stop offset="1" stop-color="#f0a050"/></linearGradient></defs><g fill="none" stroke="url(#dg5)" stroke-width="1.3" stroke-linejoin="round"><path d="M1 19.5 L4.5 9 Q10 8 13.5 4 Q11 10 7.5 12 L6.5 18.5Z"/><path d="M7.5 12.5 L8 23.5 Q17 20 17.5 8.5 Q17 3 16.5 1 Q15 9 8 12Z"/><path d="M10.5 16.5 Q14.5 12 15.5 6"/></g></svg>
<div class="t" style="left:2755px;top:1542.76px;font-size:18px;color:#333;font-weight:400;">Dask GPU Memory</div>
<svg class="a" style="left:2984.5px;top:1544.5px" width="16" height="16" viewBox="0 0 16 16"><path d="M1.8 1.8 L14.2 14.2 M14.2 1.8 L1.8 14.2" stroke="#616161" stroke-width="1.9" stroke-linecap="round"/></svg>
<div class="a" style="left:2414px;top:1581.5px;width:1414px;height:1.3px;background:#bdbdbd;"></div>
<div class="a" style="left:2414px;top:1582.8px;width:1414px;height:3px;background:linear-gradient(#e8e8e8,#fff);"></div>
<div class="a" style="left:2412px;top:2115px;width:1416px;height:8px;background:#bdbdbd;"></div>
<div class="a" style="left:2406px;top:2123px;width:1429px;height:14px;background:#eeeeee;"></div>
<div class="a" style="left:3270px;top:2124px;width:558px;height:13px;overflow:hidden"><div class="t" style="left:12px;top:5.76px;font-size:18px;color:#555;font-weight:400;">Mode: Command</div>
<svg class="a" style="left:178px;top:3px" width="22" height="20" viewBox="0 0 22 20"><path d="M11 1 L19 5.5 V14.5 L11 19 L3 14.5 V5.5Z" fill="none" stroke="#555" stroke-width="1.5"/><path d="M8 7 L14 13 M14 7 L8 13" stroke="#555" stroke-width="1.3"/></svg><div class="t" style="left:224.6px;top:5.76px;font-size:18px;color:#555;font-weight:400;">Ln 1, Col 1</div>
<div class="t" style="left:336px;top:5.76px;font-size:18px;color:#555;font-weight:400;">Blur_fft_w_dask_3D.ipynb</div>
</div>
<div class="t" style="left:2470px;top:234.56px;font-size:18px;color:#444;font-weight:700;">Task Stream</div>
<svg class="a" style="left:0;top:0" width="3835" height="900" viewBox="0 0 3835 900"><rect x="2470" y="264" width="1301" height="585" fill="none" stroke="#e5e5e5" stroke-width="1"/><line x1="2470" y1="329" x2="3771" y2="329" stroke="#e5e5e5" stroke-width="1.2"/><line x1="2470" y1="458" x2="3771" y2="458" stroke="#e5e5e5" stroke-width="1.2"/><line x1="2470" y1="589" x2="3771" y2="589" stroke="#e5e5e5" stroke-width="1.2"/><line x1="2470" y1="718" x2="3771" y2="718" stroke="#e5e5e5" stroke-width="1.2"/><rect x="2473.0" y="264" width="3.6" height="261.5" fill="#c8305a"/><rect x="2476.0" y="264" width="6.6" height="261.5" fill="#6c3a62"/><rect x="2482.0" y="264" width="4.6" height="261.5" fill="#4a1c72"/><rect x="2486.0" y="264" width="68.6" height="261.5" fill="#e3000f"/><rect x="2489.9" y="264" width="2.4" height="261.5" fill="#c8102a"/><rect x="2493.4" y="264" width="2.7" height="261.5" fill="#c8102a"/><rect x="2496.0" y="264" width="3.7" height="261.5" fill="#4a1c72"/><rect x="2505.2" y="264" width="2.0" height="261.5" fill="#4a1c72"/><rect x="2511.1" y="264" width="2.3" height="261.5" fill="#4a1c72"/><rect x="2519.4" y="264" width="2.6" height="261.5" fill="#c8102a"/><rect x="2524.3" y="264" width="3.9" height="261.5" fill="#ec1010"/><rect x="2530.4" y="264" width="2.0" height="261.5" fill="#5e2a7a"/><rect x="2536.9" y="264" width="4.0" height="261.5" fill="#bd102c"/><rect x="2546.7" y="264" width="3.0" height="261.5" fill="#4a1c72"/><rect x="2550.8" y="264" width="3.5" height="261.5" fill="#bd102c"/><rect x="2532.0" y="264" width="2.6" height="261.5" fill="#c09040"/><rect x="2554.0" y="264" width="34.6" height="261.5" fill="#440058"/><rect x="2574.9" y="264" width="3.5" height="261.5" fill="#8a6a52"/><rect x="2588.0" y="264" width="5.1" height="261.5" fill="#f5e11e"/><rect x="2899.0" y="264" width="3.6" height="261.5" fill="#c03050"/><rect x="2902.0" y="264" width="114.1" height="261.5" fill="#3d4e8b"/><rect x="2939.5" y="264" width="5.4" height="261.5" fill="#bd102c"/><rect x="2944.3" y="264" width="5.0" height="261.5" fill="#4d3080"/><rect x="2981.8" y="264" width="5.5" height="261.5" fill="#bd102c"/><rect x="2986.7" y="264" width="3.9" height="261.5" fill="#4d3080"/><rect x="3015.5" y="264" width="4.4" height="261.5" fill="#bd102c"/><rect x="3019.3" y="264" width="13.7" height="261.5" fill="#e3000f"/><rect x="3032.4" y="264" width="14.7" height="261.5" fill="#4a1c72"/><rect x="3046.5" y="264" width="77.1" height="261.5" fill="#e3000f"/><rect x="3050.8" y="264" width="3.2" height="261.5" fill="#4a1c72"/><rect x="3059.5" y="264" width="2.8" height="261.5" fill="#4a1c72"/><rect x="3064.2" y="264" width="2.8" height="261.5" fill="#bd102c"/><rect x="3069.4" y="264" width="2.1" height="261.5" fill="#4a1c72"/><rect x="3081.8" y="264" width="3.8" height="261.5" fill="#8a6a52"/><rect x="3086.4" y="264" width="2.5" height="261.5" fill="#4a1c72"/><rect x="3095.8" y="264" width="2.3" height="261.5" fill="#5a1060"/><rect x="3099.5" y="264" width="4.0" height="261.5" fill="#4a1c72"/><rect x="3103.4" y="264" width="4.4" height="261.5" fill="#4a1c72"/><rect x="3108.0" y="264" width="2.7" height="261.5" fill="#5a1060"/><rect x="3112.1" y="264" width="3.5" height="261.5" fill="#8a6a52"/><rect x="3122.6" y="264" width="1.2" height="261.5" fill="#8a6a52"/><rect x="3123.0" y="264" width="5.6" height="261.5" fill="#4a1c72"/><rect x="3128.0" y="264" width="2.6" height="261.5" fill="#8a6a52"/><rect x="3130.0" y="264" width="11.6" height="261.5" fill="#440058"/><rect x="3141.0" y="264" width="4.6" height="261.5" fill="#f5e11e"/><rect x="3355.3" y="264" width="3.3" height="261.5" fill="#7a3060"/><rect x="3358.0" y="264" width="44.1" height="261.5" fill="#3d4e8b"/><rect x="3385.2" y="264" width="2.2" height="261.5" fill="#46548f"/><rect x="3401.5" y="264" width="24.1" height="261.5" fill="#bd102c"/><rect x="3401.5" y="264" width="2.9" height="261.5" fill="#e3000f"/><rect x="3416.8" y="264" width="4.2" height="261.5" fill="#e3000f"/><rect x="3425.0" y="264" width="18.6" height="261.5" fill="#3d4e8b"/><rect x="3443.0" y="264" width="5.6" height="261.5" fill="#bd102c"/><rect x="3448.0" y="264" width="4.6" height="261.5" fill="#4d3080"/><rect x="3452.0" y="264" width="27.6" height="261.5" fill="#3d4e8b"/><rect x="3479.0" y="264" width="96.6" height="261.5" fill="#e3000f"/><rect x="3479.0" y="264" width="4.6" height="261.5" fill="#bd102c"/><rect x="3485.2" y="264" width="2.7" height="261.5" fill="#ec1010"/><rect x="3489.3" y="264" width="3.8" height="261.5" fill="#ec1010"/><rect x="3493.6" y="264" width="2.1" height="261.5" fill="#4a1c72"/><rect x="3501.1" y="264" width="2.2" height="261.5" fill="#6a3070"/><rect x="3505.4" y="264" width="1.9" height="261.5" fill="#4a1c72"/><rect x="3508.2" y="264" width="3.4" height="261.5" fill="#440058"/><rect x="3512.8" y="264" width="4.6" height="261.5" fill="#4a1c72"/><rect x="3523.2" y="264" width="2.6" height="261.5" fill="#4a1c72"/><rect x="3525.8" y="264" width="4.2" height="261.5" fill="#bd102c"/><rect x="3532.2" y="264" width="2.9" height="261.5" fill="#ec1010"/><rect x="3535.9" y="264" width="4.2" height="261.5" fill="#4a1c72"/><rect x="3541.6" y="264" width="4.4" height="261.5" fill="#6a3070"/><rect x="3552.3" y="264" width="2.5" height="261.5" fill="#440058"/><rect x="3554.8" y="264" width="3.0" height="261.5" fill="#4a1c72"/><rect x="3558.6" y="264" width="3.4" height="261.5" fill="#4a1c72"/><rect x="3563.5" y="264" width="3.1" height="261.5" fill="#440058"/><rect x="3568.0" y="264" width="2.6" height="261.5" fill="#ec1010"/><rect x="3574.9" y="264" width="1.2" height="261.5" fill="#440058"/><rect x="3575.0" y="264" width="34.6" height="261.5" fill="#440058"/><rect x="3592.2" y="264" width="2.8" height="261.5" fill="#7a5a60"/><rect x="3596.0" y="264" width="3.8" height="261.5" fill="#6c3a62"/><rect x="3602.1" y="264" width="3.8" height="261.5" fill="#8a6a52"/><rect x="3606.0" y="264" width="3.6" height="261.5" fill="#7a5a60"/><rect x="3609.0" y="264" width="4.6" height="261.5" fill="#f5e11e"/><rect x="3698.0" y="264" width="18.6" height="261.5" fill="#440058"/><rect x="3716.0" y="264" width="34.6" height="261.5" fill="#440058"/><rect x="3716.0" y="264" width="2.2" height="261.5" fill="#6c3a62"/><rect x="3719.3" y="264" width="2.0" height="261.5" fill="#8a6a52"/><rect x="3727.2" y="264" width="2.8" height="261.5" fill="#8a6a52"/><rect x="3734.1" y="264" width="3.0" height="261.5" fill="#6c3a62"/><rect x="3737.5" y="264" width="2.4" height="261.5" fill="#8a6a52"/><rect x="3742.1" y="264" width="3.3" height="261.5" fill="#8a6a52"/><rect x="3746.2" y="264" width="2.5" height="261.5" fill="#8a6a52"/><rect x="3750.0" y="264" width="4.6" height="261.5" fill="#f5e11e"/><rect x="2474.0" y="587" width="6.6" height="262" fill="#4a1666"/><rect x="2483.0" y="587" width="6.6" height="262" fill="#ff5050"/><rect x="2489.0" y="587" width="61.6" height="262" fill="#e3000f"/><rect x="2500.3" y="587" width="1.9" height="262" fill="#bd102c"/><rect x="2503.7" y="587" width="3.9" height="262" fill="#5e2a7a"/><rect x="2509.6" y="587" width="2.7" height="262" fill="#bd102c"/><rect x="2512.2" y="587" width="2.3" height="262" fill="#5e2a7a"/><rect x="2514.8" y="587" width="3.6" height="262" fill="#8a6a52"/><rect x="2525.4" y="587" width="2.2" height="262" fill="#bd102c"/><rect x="2528.8" y="587" width="3.4" height="262" fill="#bd102c"/><rect x="2534.5" y="587" width="3.9" height="262" fill="#9a0030"/><rect x="2539.3" y="587" width="4.0" height="262" fill="#9a0030"/><rect x="2543.9" y="587" width="3.2" height="262" fill="#9a0030"/><rect x="2547.1" y="587" width="2.6" height="262" fill="#9a0030"/><rect x="2550.0" y="587" width="35.6" height="262" fill="#440058"/><rect x="2550.0" y="587" width="3.8" height="262" fill="#6c3a62"/><rect x="2563.3" y="587" width="4.1" height="262" fill="#8a6a52"/><rect x="2585.0" y="587" width="4.6" height="262" fill="#f5e11e"/><rect x="2895.3" y="587" width="127.3" height="262" fill="#3d4e8b"/><rect x="2899.6" y="587" width="2.1" height="262" fill="#4a5a98"/><rect x="2935.1" y="587" width="1.8" height="262" fill="#4a5a98"/><rect x="2958.0" y="587" width="2.3" height="262" fill="#4a5a98"/><rect x="2963.8" y="587" width="2.6" height="262" fill="#4a5a98"/><rect x="2987.3" y="587" width="3.6" height="262" fill="#4a5a98"/><rect x="2909.0" y="587" width="4.6" height="262" fill="#bd102c"/><rect x="2913.0" y="587" width="4.6" height="262" fill="#5a3a80"/><rect x="2927.0" y="587" width="8.6" height="262" fill="#e3000f"/><rect x="2949.0" y="587" width="8.6" height="262" fill="#e3000f"/><rect x="2962.0" y="587" width="1.6" height="262" fill="#7a80b0"/><rect x="2975.0" y="587" width="5.6" height="262" fill="#bd102c"/><rect x="3001.0" y="587" width="7.6" height="262" fill="#4d3080"/><rect x="3022.0" y="587" width="14.6" height="262" fill="#e3000f"/><rect x="3036.0" y="587" width="13.6" height="262" fill="#4a1c72"/><rect x="3049.0" y="587" width="68.6" height="262" fill="#e3000f"/><rect x="3049.0" y="587" width="2.5" height="262" fill="#8a6a52"/><rect x="3052.9" y="587" width="2.6" height="262" fill="#8a6a52"/><rect x="3056.6" y="587" width="3.8" height="262" fill="#4a1c72"/><rect x="3067.4" y="587" width="4.4" height="262" fill="#ec1010"/><rect x="3085.1" y="587" width="3.5" height="262" fill="#4a1c72"/><rect x="3095.2" y="587" width="2.0" height="262" fill="#ff7070"/><rect x="3103.5" y="587" width="3.2" height="262" fill="#4a1c72"/><rect x="3112.5" y="587" width="2.7" height="262" fill="#4a1c72"/><rect x="3115.3" y="587" width="2.1" height="262" fill="#8a6a52"/><rect x="3117.0" y="587" width="35.6" height="262" fill="#440058"/><rect x="3117.0" y="587" width="2.3" height="262" fill="#4a1c72"/><rect x="3119.5" y="587" width="4.6" height="262" fill="#4a1c72"/><rect x="3130.0" y="587" width="3.6" height="262" fill="#4a1c72"/><rect x="3139.8" y="587" width="4.4" height="262" fill="#6c3a62"/><rect x="3149.8" y="587" width="2.8" height="262" fill="#8a6a52"/><rect x="3152.0" y="587" width="5.6" height="262" fill="#f5e11e"/><rect x="3353.0" y="587" width="16.6" height="262" fill="#3d4e8b"/><rect x="3369.0" y="587" width="7.6" height="262" fill="#bd102c"/><rect x="3376.0" y="587" width="12.6" height="262" fill="#4a4a8a"/><rect x="3388.0" y="587" width="8.6" height="262" fill="#e3000f"/><rect x="3396.0" y="587" width="39.6" height="262" fill="#3d4e8b"/><rect x="3396.0" y="587" width="2.2" height="262" fill="#4a5a98"/><rect x="3401.0" y="587" width="2.6" height="262" fill="#4a5a98"/><rect x="3410.9" y="587" width="2.8" height="262" fill="#4a5a98"/><rect x="3422.7" y="587" width="2.7" height="262" fill="#4a5a98"/><rect x="3426.7" y="587" width="1.7" height="262" fill="#4a5a98"/><rect x="3435.0" y="587" width="6.6" height="262" fill="#bd102c"/><rect x="3441.0" y="587" width="21.6" height="262" fill="#3d4e8b"/><rect x="3462.0" y="587" width="13.6" height="262" fill="#4d3080"/><rect x="3475.0" y="587" width="14.6" height="262" fill="#e3000f"/><rect x="3489.0" y="587" width="8.6" height="262" fill="#4a1c72"/><rect x="3497.0" y="587" width="75.6" height="262" fill="#e3000f"/><rect x="3499.4" y="587" width="2.6" height="262" fill="#ff8080"/><rect x="3509.8" y="587" width="3.2" height="262" fill="#4a1c72"/><rect x="3518.4" y="587" width="2.8" height="262" fill="#5a1060"/><rect x="3531.0" y="587" width="3.8" height="262" fill="#4a1c72"/><rect x="3536.7" y="587" width="2.6" height="262" fill="#4a1c72"/><rect x="3540.1" y="587" width="4.4" height="262" fill="#ec1010"/><rect x="3546.9" y="587" width="2.5" height="262" fill="#5a1060"/><rect x="3549.5" y="587" width="3.1" height="262" fill="#bd102c"/><rect x="3554.5" y="587" width="4.2" height="262" fill="#5a1060"/><rect x="3561.1" y="587" width="3.7" height="262" fill="#bd102c"/><rect x="3565.1" y="587" width="2.3" height="262" fill="#bd102c"/><rect x="3567.3" y="587" width="4.1" height="262" fill="#ff8080"/><rect x="3571.4" y="587" width="1.2" height="262" fill="#ec1010"/><rect x="3572.0" y="587" width="29.6" height="262" fill="#440058"/><rect x="3589.0" y="587" width="4.1" height="262" fill="#6c3a62"/><rect x="3593.2" y="587" width="4.3" height="262" fill="#8a6a52"/><rect x="3599.9" y="587" width="1.7" height="262" fill="#8a6a52"/><rect x="3601.0" y="587" width="4.6" height="262" fill="#f5e11e"/><rect x="3698.0" y="587" width="16.6" height="262" fill="#440058"/><rect x="3714.0" y="587" width="49.6" height="262" fill="#6c3a62"/><rect x="3716.4" y="587" width="3.1" height="262" fill="#8a6a52"/><rect x="3721.4" y="587" width="2.7" height="262" fill="#8a6a52"/><rect x="3725.2" y="587" width="2.6" height="262" fill="#8a6a52"/><rect x="3729.9" y="587" width="2.5" height="262" fill="#8a6a52"/><rect x="3734.1" y="587" width="2.7" height="262" fill="#440058"/><rect x="3738.6" y="587" width="3.0" height="262" fill="#8a6a52"/><rect x="3742.4" y="587" width="3.3" height="262" fill="#8a6a52"/><rect x="3746.5" y="587" width="3.0" height="262" fill="#8a6a52"/><rect x="3754.3" y="587" width="2.8" height="262" fill="#8a6a52"/><rect x="3757.5" y="587" width="3.5" height="262" fill="#8a6a52"/><rect x="3762.3" y="587" width="1.3" height="262" fill="#440058"/><rect x="3763.0" y="587" width="5.6" height="262" fill="#f5e11e"/><line x1="2470" y1="264" x2="2470" y2="850" stroke="#222" stroke-width="1.3"/><line x1="2469" y1="849" x2="3771" y2="849" stroke="#444" stroke-width="1.5"/><line x1="2640.7" y1="846" x2="2640.7" y2="857" stroke="#111" stroke-width="1.6"/><line x1="2902.5" y1="846" x2="2902.5" y2="857" stroke="#111" stroke-width="1.6"/><line x1="3162" y1="846" x2="3162" y2="857" stroke="#111" stroke-width="1.6"/><line x1="3423" y1="846" x2="3423" y2="857" stroke="#111" stroke-width="1.6"/><line x1="3683" y1="846" x2="3683" y2="857" stroke="#111" stroke-width="1.6"/></svg>
<div class="t" style="left:2640.7px;top:862.23px;transform:translateX(-50%);font-size:14.5px;color:#5e5e5e;font-weight:400;">6s</div>
<div class="t" style="left:2902.5px;top:862.23px;transform:translateX(-50%);font-size:14.5px;color:#5e5e5e;font-weight:400;">8s</div>
<div class="t" style="left:3162px;top:862.23px;transform:translateX(-50%);font-size:14.5px;color:#5e5e5e;font-weight:400;">10s</div>
<div class="t" style="left:3423px;top:862.23px;transform:translateX(-50%);font-size:14.5px;color:#5e5e5e;font-weight:400;">12s</div>
<div class="t" style="left:3683px;top:862.23px;transform:translateX(-50%);font-size:14.5px;color:#5e5e5e;font-weight:400;">14s</div>
<div class="a" style="left:3482px;top:260px;width:36px;height:3px;background:#26aae1;"></div>
<div class="a" style="left:3606px;top:260px;width:42px;height:3px;background:#26aae1;"></div>
<div class="a" style="left:3693px;top:260px;width:42px;height:3px;background:#26aae1;"></div>
<div class="a" style="left:3560.75px;top:235px;width:1.5px;height:14px;background:#c4c6c8;"></div>
<div class="a" style="left:3604.25px;top:235px;width:1.5px;height:14px;background:#c4c6c8;"></div>
<div class="a" style="left:3647.75px;top:235px;width:1.5px;height:14px;background:#c4c6c8;"></div>
<div class="a" style="left:3690.95px;top:235px;width:1.5px;height:14px;background:#c4c6c8;"></div>
<svg class="a" style="left:3480px;top:228px" width="300" height="30" viewBox="3480 228 300 30">
<path d="M3486 242.3 H3506.5" stroke="#a4a9ad" stroke-width="2"/><path d="M3484 242.3 L3490 237.5 V247Z M3508.5 242.3 L3502.5 237.5 V247Z" fill="#a4a9ad"/>
<rect x="3528" y="231" width="23.5" height="23" fill="none" stroke="#a4a9ad" stroke-width="1.2" stroke-dasharray="2 1.5"/>
<circle cx="3542.5" cy="238" r="5.2" fill="#fff" stroke="#a4a9ad" stroke-width="2"/><path d="M3538.5 242 L3532.5 248" stroke="#a4a9ad" stroke-width="2.6" stroke-linecap="round"/>
<rect x="3571" y="233.5" width="8" height="15" rx="4" fill="none" stroke="#a4a9ad" stroke-width="1.8"/><path d="M3575 237.5 V244.5 M3573.5 239 L3575 237.5 L3576.5 239 M3573.5 243 L3575 244.5 L3576.5 243" stroke="#a4a9ad" stroke-width="0.9" fill="none"/>
<circle cx="3589" cy="236.8" r="4.8" fill="none" stroke="#a4a9ad" stroke-width="1.8"/><path d="M3587.5 241.5 L3585 251" stroke="#a4a9ad" stroke-width="2.2"/>
<path d="M3635.5 249 A11 11 0 1 1 3638.5 240" fill="none" stroke="#a4a9ad" stroke-width="2.2"/><path d="M3630 246 A6 6 0 1 1 3632 237" fill="none" stroke="#a4a9ad" stroke-width="1.3"/><path d="M3634.5 247 H3642 M3638.3 243 V251" stroke="#a4a9ad" stroke-width="1.8"/>
<path d="M3677.5 238.5 A9 9 0 0 0 3660.5 238.5" fill="none" stroke="#a4a9ad" stroke-width="2.2"/><path d="M3661 247 A9 9 0 0 0 3678 247" fill="none" stroke="#a4a9ad" stroke-width="2.2"/><path d="M3676 234 L3681 240.5 L3674.5 241Z M3662.5 251 L3657.5 243.5 L3664 243.5Z" fill="#a4a9ad"/>
<path d="M3705 233.5 H3722 Q3723.5 233.5 3723.5 235 V248 Q3723.5 249.5 3722 249.5 H3717 L3713.5 253 L3710 249.5 H3705 Q3703.5 249.5 3703.5 248 V235 Q3703.5 233.5 3705 233.5Z" fill="none" stroke="#a4a9ad" stroke-width="1.6"/><path d="M3706.5 237.5 H3720.5 M3706.5 241 H3720.5 M3706.5 244.5 H3720.5" stroke="#a4a9ad" stroke-width="1.3"/>
<rect x="3751.8" y="229.3" width="8.4" height="6.4" rx="1" fill="#1f9e48" transform="rotate(22 3756.0 232.5)"/><rect x="3758.5" y="232.1" width="8.4" height="6.4" rx="1" fill="#22b0c8" transform="rotate(67 3762.7 235.3)"/><rect x="3761.3" y="238.8" width="8.4" height="6.4" rx="1" fill="#2a8ee0" transform="rotate(112 3765.5 242.0)"/><rect x="3758.5" y="245.5" width="8.4" height="6.4" rx="1" fill="#7a3ab0" transform="rotate(157 3762.7 248.7)"/><rect x="3751.8" y="248.3" width="8.4" height="6.4" rx="1" fill="#e8207a" transform="rotate(202 3756.0 251.5)"/><rect x="3745.1" y="245.5" width="8.4" height="6.4" rx="1" fill="#f04a20" transform="rotate(247 3749.3 248.7)"/><rect x="3742.3" y="238.8" width="8.4" height="6.4" rx="1" fill="#f89a20" transform="rotate(292 3746.5 242.0)"/><rect x="3745.1" y="232.1" width="8.4" height="6.4" rx="1" fill="#9ad020" transform="rotate(337 3749.3 235.3)"/></svg>
<div class="t" style="left:2432.4px;top:973.21px;font-size:18.3px;color:#444;font-weight:700;">Progress -- total: 4052, in-memory: 96, processing: 0, waiting: 0, erred: 0</div>
<div class="a" style="left:2431.5px;top:1000px;width:1381px;height:510px;background:transparent;border:1px solid #e8e8e8"></div>
<div class="a" style="left:2431.5px;top:1000px;width:655px;height:51.5px;background:#fbec7a;border:1.3px solid #f7e04a"></div>
<div class="t" style="left:2439px;top:1030.74px;font-size:18.5px;color:#1a1a1a;font-weight:400;">getitem</div>
<div class="t" style="right:757px;top:1030.74px;font-size:18.5px;color:#1a1a1a;font-weight:400;">1600 / 1600</div>
<div class="a" style="left:2431.5px;top:1064px;width:655px;height:51.5px;background:#8d6fa0;border:1.3px solid #6a3c8a"></div>
<div class="t" style="left:2439px;top:1094.74px;font-size:18.5px;color:#1a1a1a;font-weight:400;">rechunk-split</div>
<div class="t" style="right:757px;top:1094.74px;font-size:18.5px;color:#1a1a1a;font-weight:400;">960 / 960</div>
<div class="a" style="left:2431.5px;top:1128px;width:655px;height:51.5px;background:#8690b4;border:1.3px solid #5560a0"></div>
<div class="t" style="left:2439px;top:1158.74px;font-size:18.5px;color:#1a1a1a;font-weight:400;">from-zarr</div>
<div class="t" style="right:757px;top:1158.74px;font-size:18.5px;color:#1a1a1a;font-weight:400;">951 / 951</div>
<div class="a" style="left:2431.5px;top:1192px;width:655px;height:51.5px;background:#2e6b8c;border:1.3px solid #2c6a8c"></div>
<div class="t" style="left:2439px;top:1222.74px;font-size:18.5px;color:#1a1a1a;font-weight:400;">_trim</div>
<div class="t" style="right:757px;top:1222.74px;font-size:18.5px;color:#1a1a1a;font-weight:400;">96 / 96</div>
<div class="a" style="left:2431.5px;top:1256px;width:655px;height:51.5px;background:#7bb4b8;border:1.3px solid #3a9ca2"></div>
<div class="t" style="left:2439px;top:1286.74px;font-size:18.5px;color:#1a1a1a;font-weight:400;">overlap</div>
<div class="t" style="right:757px;top:1286.74px;font-size:18.5px;color:#1a1a1a;font-weight:400;">96 / 96</div>
<div class="a" style="left:2431.5px;top:1320px;width:655px;height:51.5px;background:#9fdc98;border:1.3px solid #6ccc68"></div>
<div class="t" style="left:2439px;top:1350.74px;font-size:18.5px;color:#1a1a1a;font-weight:400;">asarray</div>
<div class="t" style="right:757px;top:1350.74px;font-size:18.5px;color:#1a1a1a;font-weight:400;">96 / 96</div>
<div class="a" style="left:2431.5px;top:1384px;width:655px;height:51.5px;background:#8d6fa0;border:1.3px solid #5c2c84"></div>
<div class="t" style="left:2439px;top:1414.74px;font-size:18.5px;color:#1a1a1a;font-weight:400;">rechunk-merg...</div>
<div class="t" style="right:757px;top:1414.74px;font-size:18.5px;color:#1a1a1a;font-weight:400;">96 / 96</div>
<div class="a" style="left:2431.5px;top:1448px;width:655px;height:51.5px;background:#e3e872;border:1.3px solid #d6dc38"></div>
<div class="t" style="left:2439px;top:1478.74px;font-size:18.5px;color:#1a1a1a;font-weight:400;">block-info</div>
<div class="t" style="right:757px;top:1478.74px;font-size:18.5px;color:#1a1a1a;font-weight:400;">96 / 96</div>
<div class="a" style="left:3158px;top:1000px;width:654.5px;height:51.5px;background:#8d79aa;border:1.3px solid #5c3e8c"></div>
<div class="t" style="left:3165.5px;top:1030.74px;font-size:18.5px;color:#1a1a1a;font-weight:400;">rechunk-merge</div>
<div class="t" style="right:30px;top:1030.74px;font-size:18.5px;color:#1a1a1a;font-weight:400;">60 / 60</div>
<div class="a" style="left:3158px;top:1064px;width:654.5px;height:51.5px;background:#b6e38b;border:1.3px solid #8ad65a"></div>
<div class="t" style="left:3165.5px;top:1094.74px;font-size:18.5px;color:#1a1a1a;font-weight:400;">ndarray</div>
<div class="t" style="right:30px;top:1094.74px;font-size:18.5px;color:#1a1a1a;font-weight:400;">1 / 1</div>
<div class="t" style="left:2432px;top:1606.39px;font-size:18.2px;color:#444;font-weight:700;">GPU Utilization</div>
<svg class="a" style="left:0;top:0" width="3835" height="2137" viewBox="0 0 3835 2137"><rect x="2432" y="1634" width="1381" height="437" fill="none" stroke="#e8e8e8" stroke-width="1.2"/><line x1="2706.8" y1="1634" x2="2706.8" y2="2071" stroke="#e5e5e5" stroke-width="1.2"/><line x1="2984.5" y1="1634" x2="2984.5" y2="2071" stroke="#e5e5e5" stroke-width="1.2"/><line x1="3259.5" y1="1634" x2="3259.5" y2="2071" stroke="#e5e5e5" stroke-width="1.2"/><line x1="3537" y1="1634" x2="3537" y2="2071" stroke="#e5e5e5" stroke-width="1.2"/><rect x="2432" y="1851" width="14.5" height="201" fill="#76b900"/><line x1="2432" y1="2071" x2="3813" y2="2071" stroke="#444" stroke-width="1.5"/><line x1="2431.5" y1="2069" x2="2431.5" y2="2079" stroke="#333" stroke-width="1.5"/><line x1="2706.8" y1="2069" x2="2706.8" y2="2079" stroke="#333" stroke-width="1.5"/><line x1="2984.5" y1="2069" x2="2984.5" y2="2079" stroke="#333" stroke-width="1.5"/><line x1="3259.5" y1="2069" x2="3259.5" y2="2079" stroke="#333" stroke-width="1.5"/><line x1="3537" y1="2069" x2="3537" y2="2079" stroke="#333" stroke-width="1.5"/><line x1="3813" y1="2069" x2="3813" y2="2079" stroke="#333" stroke-width="1.5"/></svg>
<div class="t" style="left:2431.5px;top:2084.23px;transform:translateX(-50%);font-size:14.5px;color:#555;font-weight:400;">0</div>
<div class="t" style="left:2706.8px;top:2084.23px;transform:translateX(-50%);font-size:14.5px;color:#555;font-weight:400;">20</div>
<div class="t" style="left:2984.5px;top:2084.23px;transform:translateX(-50%);font-size:14.5px;color:#555;font-weight:400;">40</div>
<div class="t" style="left:3259.5px;top:2084.23px;transform:translateX(-50%);font-size:14.5px;color:#555;font-weight:400;">60</div>
<div class="t" style="left:3537px;top:2084.23px;transform:translateX(-50%);font-size:14.5px;color:#555;font-weight:400;">80</div>
<div class="a" style="left:3790px;top:2075px;width:33px;height:30px;overflow:hidden"><div class="t" style="left:9px;top:9.23px;font-size:14.5px;color:#555;font-weight:400;">100</div>
</div>
<div class="a" style="left:2406px;top:116px;width:20px;height:2021px;background:linear-gradient(90deg,rgba(0,0,0,0.16),rgba(0,0,0,0));"></div>
<div class="a" style="left:2405px;top:26px;width:1px;height:2111px;background:#222;"></div>
</body></html>
